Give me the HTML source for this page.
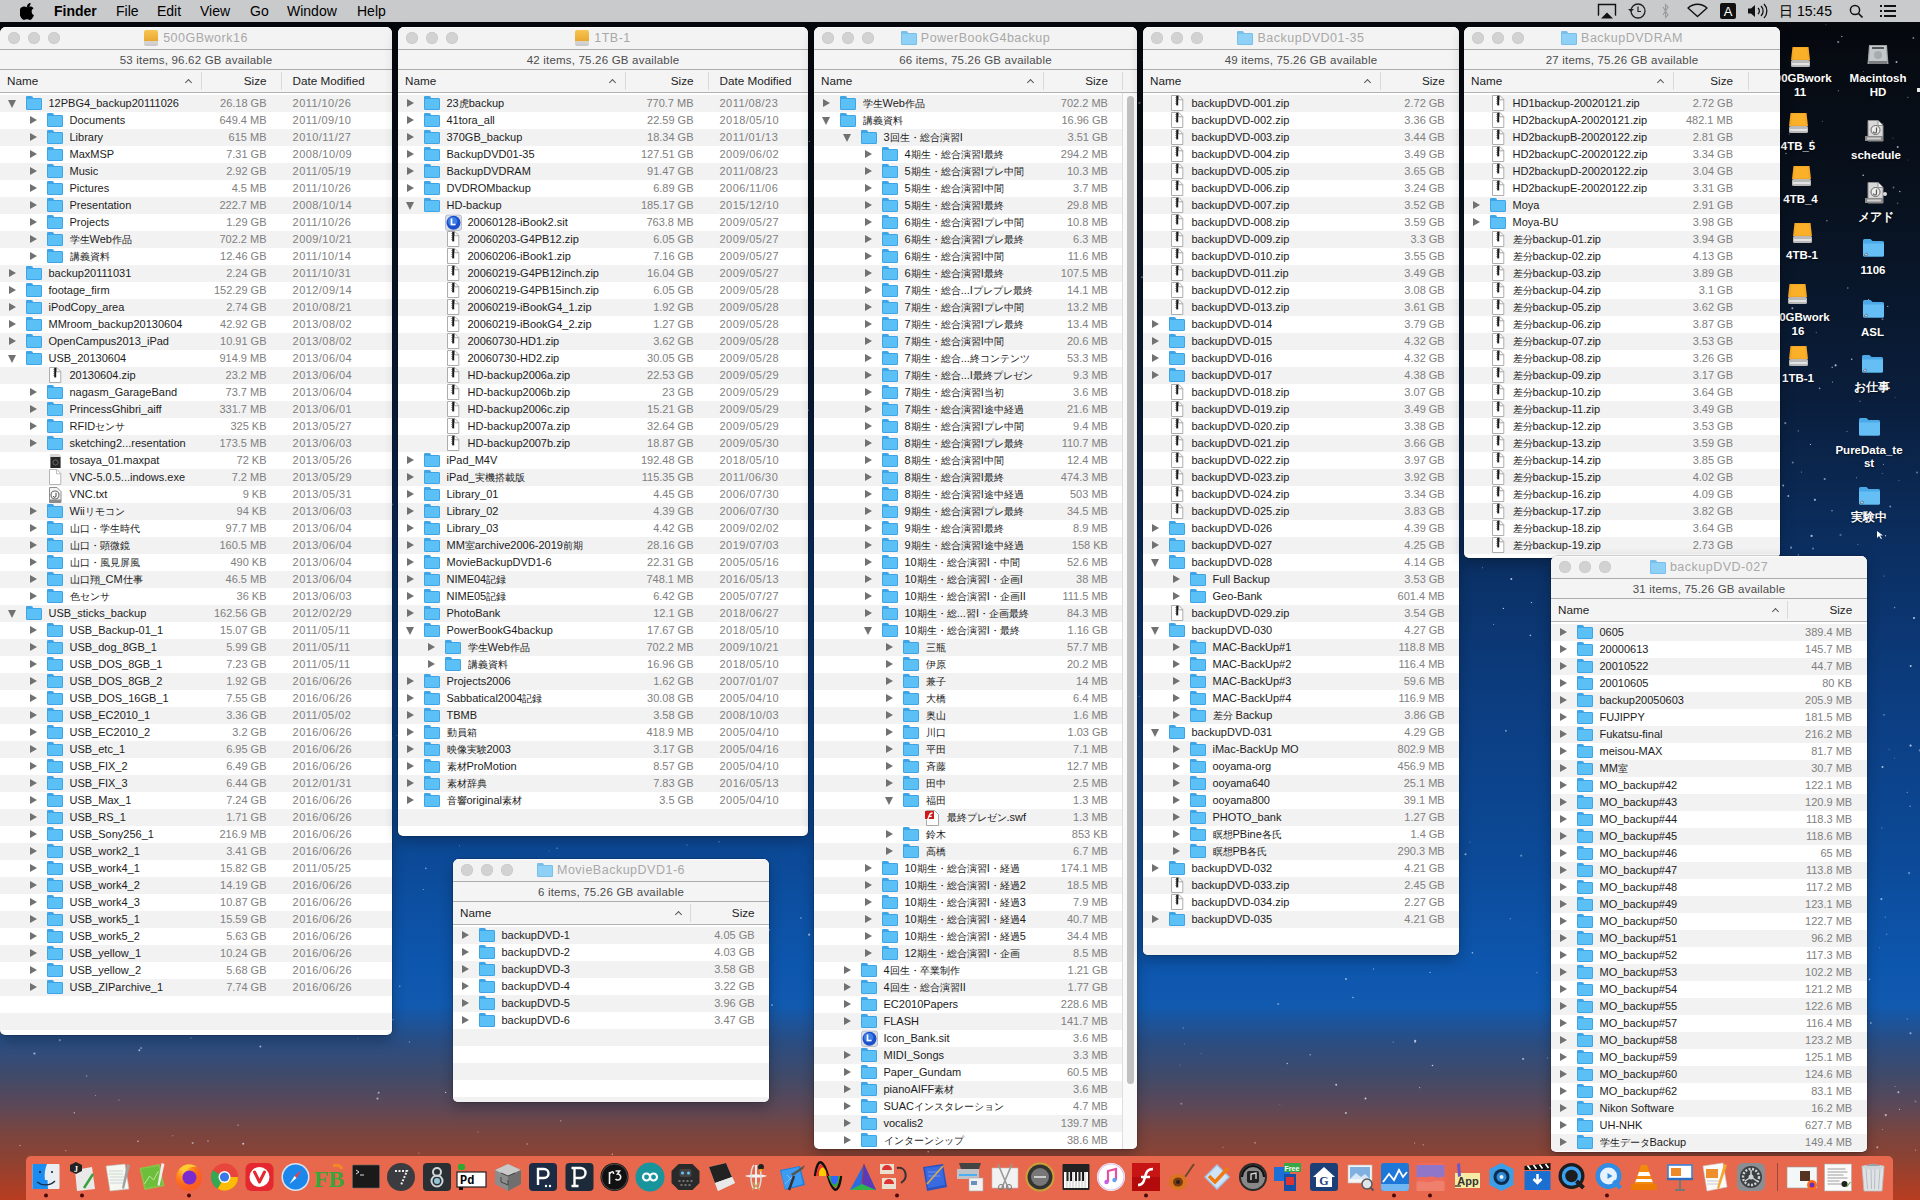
<!DOCTYPE html><html><head><meta charset="utf-8"><style>
*{margin:0;padding:0;box-sizing:border-box}
html,body{width:1920px;height:1200px;overflow:hidden}
body{position:relative;font-family:"Liberation Sans",sans-serif;
 background:linear-gradient(180deg,#03060a 0px,#070b12 60px,#08111e 200px,#0a1e3c 400px,#0b3064 560px,#0c3d80 700px,#0c4a98 860px,#0d56ad 960px,#115ab0 1005px,#2a4d82 1042px,#424a68 1078px,#5e4856 1108px,#7a453f 1133px,#8e4232 1160px,#b83c20 1200px)}
.mb{position:absolute;left:0;top:0;width:1920px;height:22px;background:#c9cacc;color:#000;font-size:14px;line-height:22px}
.mb span{position:absolute;top:0}
.win{position:absolute;background:#fff;border-radius:6px 6px 5px 5px;overflow:hidden;box-shadow:0 0 0 .5px rgba(0,0,0,.3),0 5px 14px rgba(0,0,0,.28)}
.tb{position:absolute;left:0;top:0;right:0;height:23px;background:#f3f3f3;border-bottom:1px solid #acacac;box-shadow:inset 0 1px 0 #fcfcfc}
.tl{position:absolute;top:5px;width:12px;height:12px;border-radius:50%;background:#d2d2d2;box-shadow:inset 0 0 0 .5px #c6c6c6}
.tt{position:absolute;left:0;right:0;top:0;height:22px;text-align:center;white-space:nowrap;font-size:12.5px;letter-spacing:.5px;line-height:22px;color:#a8a8a8}
.tt span{vertical-align:top}
.tfd{display:inline-block;position:relative;width:16px;height:12px;background:#8fd0f6;border:1px solid #78bfe9;border-radius:1px;margin-right:4px;vertical-align:top;margin-top:6px}
.tfd::before{content:"";position:absolute;left:-1px;top:-3px;width:7px;height:3px;background:#78bfe9;border-radius:1px 2px 0 0}
.tdrv{display:inline-block;position:relative;width:14px;height:16px;margin-right:5px;vertical-align:top;margin-top:3px;border-radius:2px;background:linear-gradient(#f6c552,#eaa830 70%,#d6d6d6 72%,#c8c8c8)}
.sl{position:absolute;left:0;right:0;top:23px;height:20px;background:#f4f4f4;border-bottom:1px solid #acacac;text-align:center;font-size:11.5px;letter-spacing:.2px;line-height:21px;color:#4c4c4c;white-space:nowrap}
.hd{position:absolute;left:0;right:0;top:43px;height:23px;background:#f4f4f4;border-bottom:1px solid #b3b3b3;font-size:11.7px;line-height:21px;color:#1e1e1e}
.hn{position:absolute;left:7px;top:0}
.hs,.hdm{position:absolute;top:0}
.dv{position:absolute;top:2px;width:1px;height:18px;background:#dadada}
.ar{position:absolute;top:7px;width:8px;height:8px}
.ar::before{content:"";position:absolute;left:1.5px;top:2.5px;width:4px;height:4px;border-left:1.6px solid #555;border-top:1.6px solid #555;transform:rotate(45deg)}
.rows{position:absolute;left:0;top:68px;overflow:hidden}
.r{position:absolute;left:0;right:0;height:17px;font-size:11px;line-height:17px;white-space:nowrap}
.g{background:#f2f2f2}
.nm{position:absolute;top:0;color:#1c1c1c}
.sz{position:absolute;top:0;color:#808080}
.dt{position:absolute;top:0;color:#808080;letter-spacing:.45px}
.tr{position:absolute;top:4px;width:0;height:0;border-left:7px solid #717171;border-top:4.5px solid transparent;border-bottom:4.5px solid transparent}
.td{position:absolute;top:5px;width:0;height:0;border-top:8px solid #717171;border-left:4.5px solid transparent;border-right:4.5px solid transparent}
.fd{position:absolute;top:3px;width:16px;height:12px;background:#5bc0f6;border:1px solid #3ea4e6;border-radius:1px}
.fd::before{content:"";position:absolute;left:-1px;top:-3px;width:7px;height:3px;background:#3ea4e6;border-radius:1px 2px 0 0}
.zp,.dc,.tx{position:absolute;top:1px;width:12px;height:15px;background:#fff;border:1px solid #a9a9a9}
.zp::before,.dc::before,.tx::before{content:"";position:absolute;right:-1px;top:-1px;width:5px;height:5px;background:linear-gradient(45deg,#fff 50%,#a9a9a9 50%,#a9a9a9 58%,transparent 58%);border-left:1px solid #a9a9a9;border-bottom:1px solid #a9a9a9}
.zp::after{content:"";position:absolute;left:4px;top:0;width:2px;height:10px;background:#2a2a2a}
.tx::after{content:"";position:absolute;left:2px;top:4px;width:7px;height:7px;border:1px solid #777;border-radius:50%}
.mx{position:absolute;top:3px;width:10px;height:12px;background:#2a2a2a;border-radius:1px}
.st{position:absolute;top:1px;width:16px;height:15px;border-radius:50%;background:radial-gradient(circle at 45% 40%,#6fa8f0,#1d4fc0 60%,#0d2f80)}
.sw{position:absolute;top:1px;width:13px;height:15px;background:#fff;border:1px solid #b0b0b0}
.sw::before{content:"";position:absolute;left:1px;top:1px;width:9px;height:8px;background:#d42020}
.sb{position:absolute;background:#fafafa;border-left:1px solid #dedede}
.th{position:absolute;left:4px;width:7px;background:#c0c0c0;border-radius:4px}
.dk{position:absolute;left:26px;top:1156px;width:1867px;height:50px;background:#e8684d;border-radius:5px 5px 0 0}
.di{position:absolute;width:28px;height:28px;top:1164px}
.dot{position:absolute;top:1194px;width:4px;height:4px;border-radius:50%;background:#5a0c0c}
.ico{position:absolute;color:#fff;font-size:11.5px;font-weight:bold;text-align:center;line-height:14px;width:90px;text-shadow:0 1px 2px rgba(0,0,0,.6)}
.ic{position:absolute}
.j{font-size:9.6px}

</style></head><body>
<svg width="0" height="0" style="position:absolute">
<defs>
<symbol id="zip" viewBox="0 0 13 17"><path d="M.5 .5h7.3l4 4V15.5H.5z" fill="#fff" stroke="#adadad"/><path d="M7.5 .5v4.3h4.3" fill="none" stroke="#9a9a9a" stroke-width=".9"/><rect x="5.2" y=".8" width="2" height="9.6" fill="#1a1a1a"/><path d="M5.2 2.5h-.7M5.2 4.5h-.7M5.2 6.5h-.7M5.2 8.5h-.7" stroke="#444" stroke-width=".8"/></symbol>
<symbol id="doc" viewBox="0 0 13 17"><path d="M.5 .5h7.3l4 4V15.5H.5z" fill="#fff" stroke="#b5b5b5"/><path d="M7.5 .5v4.3h4.3" fill="none" stroke="#b5b5b5" stroke-width=".9"/></symbol>
<symbol id="txt" viewBox="0 0 17 17"><path d="M2.5 1.5h7.5l4 4V16.5H2.5z" fill="#f4f4f4" stroke="#8e8e8e"/><circle cx="8" cy="9" r="4" fill="#fff" stroke="#666" stroke-width="1.1"/><path d="M9 6.8v3.2a1.3 1.3 0 0 1-2.6 0" fill="none" stroke="#444" stroke-width="1"/><rect x="2.5" y="13.5" width="11.5" height="3" fill="#8a8a8a"/></symbol>
<symbol id="max" viewBox="0 0 17 17"><path d="M3 2h9l2 2v12H3z" fill="#d6d6d6"/><rect x="3.5" y="5" width="10" height="11" fill="#262626"/><circle cx="8.5" cy="10.5" r="2.6" fill="none" stroke="#777" stroke-width=".8"/></symbol>
<symbol id="sit" viewBox="0 0 17 17"><rect x=".5" y="1" width="16" height="15.5" rx="2" fill="#d9dde6" stroke="#9aa3b5" stroke-width=".6"/><circle cx="8.5" cy="8.8" r="7" fill="#1d4fc8"/><circle cx="7.6" cy="7.6" r="4.6" fill="#3d7ee8"/><path d="M6.5 4.5v6h4" fill="none" stroke="#fff" stroke-width="1.7"/></symbol>
<symbol id="swf" viewBox="0 0 17 17"><path d="M2.5 1.5h8l4 4V16.5h-12z" fill="#fff" stroke="#a8a8a8"/><rect x="1" y="2" width="9" height="8" fill="#d01818"/><path d="M8.5 4c-3 0-3 2-3.6 3.8S4 11 2.5 11M4.2 7.3h3.5" fill="none" stroke="#fff" stroke-width="1.3"/></symbol>
</defs></svg>

<svg style="position:absolute;left:0;top:0" width="1920" height="1200" fill="#dfe8ff"><circle cx="868.6" cy="657.1" r="1.0" fill-opacity="0.60"/><circle cx="1774.5" cy="550.7" r="1.1" fill-opacity="0.56"/><circle cx="975.1" cy="688.3" r="0.7" fill-opacity="0.67"/><circle cx="354.5" cy="603.0" r="0.5" fill-opacity="0.39"/><circle cx="1209.4" cy="920.9" r="0.5" fill-opacity="0.54"/><circle cx="180.7" cy="367.1" r="0.6" fill-opacity="0.51"/><circle cx="174.1" cy="939.7" r="0.8" fill-opacity="0.67"/><circle cx="1331.4" cy="71.4" r="0.5" fill-opacity="0.54"/><circle cx="1885.8" cy="1115.1" r="1.1" fill-opacity="0.70"/><circle cx="1255.5" cy="720.2" r="0.5" fill-opacity="0.83"/><circle cx="302.4" cy="41.0" r="0.7" fill-opacity="0.67"/><circle cx="1014.5" cy="91.4" r="1.0" fill-opacity="0.69"/><circle cx="365.2" cy="297.6" r="1.1" fill-opacity="0.37"/><circle cx="57.8" cy="548.7" r="0.7" fill-opacity="0.68"/><circle cx="845.8" cy="976.8" r="1.1" fill-opacity="0.61"/><circle cx="996.7" cy="748.2" r="0.6" fill-opacity="0.35"/><circle cx="959.6" cy="773.2" r="0.7" fill-opacity="0.59"/><circle cx="878.1" cy="338.6" r="0.5" fill-opacity="0.39"/><circle cx="1915.5" cy="1150.1" r="0.7" fill-opacity="0.56"/><circle cx="1613.2" cy="824.5" r="0.5" fill-opacity="0.79"/><circle cx="605.3" cy="283.8" r="0.8" fill-opacity="0.41"/><circle cx="555.0" cy="103.4" r="1.1" fill-opacity="0.81"/><circle cx="1471.3" cy="476.9" r="0.8" fill-opacity="0.54"/><circle cx="1625.4" cy="461.1" r="0.8" fill-opacity="0.58"/><circle cx="1839.4" cy="982.3" r="0.8" fill-opacity="0.36"/><circle cx="1.0" cy="261.2" r="1.1" fill-opacity="0.77"/><circle cx="1747.7" cy="555.6" r="1.0" fill-opacity="0.48"/><circle cx="1882.3" cy="473.5" r="0.5" fill-opacity="0.49"/><circle cx="140.2" cy="735.9" r="0.6" fill-opacity="0.66"/><circle cx="1494.7" cy="329.1" r="0.8" fill-opacity="0.63"/><circle cx="167.3" cy="400.2" r="1.0" fill-opacity="0.68"/><circle cx="1851.0" cy="881.3" r="0.8" fill-opacity="0.62"/><circle cx="226.5" cy="302.7" r="0.8" fill-opacity="0.50"/><circle cx="194.0" cy="91.7" r="1.0" fill-opacity="0.38"/><circle cx="1530.3" cy="225.0" r="1.1" fill-opacity="0.84"/><circle cx="1073.8" cy="530.0" r="0.7" fill-opacity="0.35"/><circle cx="366.1" cy="851.8" r="0.8" fill-opacity="0.43"/><circle cx="251.5" cy="752.0" r="0.7" fill-opacity="0.49"/><circle cx="223.7" cy="499.9" r="0.8" fill-opacity="0.62"/><circle cx="408.7" cy="329.1" r="0.7" fill-opacity="0.81"/><circle cx="1864.2" cy="932.7" r="0.7" fill-opacity="0.51"/><circle cx="584.0" cy="1024.8" r="1.1" fill-opacity="0.42"/><circle cx="404.6" cy="469.9" r="1.0" fill-opacity="0.34"/><circle cx="1640.4" cy="749.9" r="0.6" fill-opacity="0.84"/><circle cx="192.6" cy="1142.9" r="1.0" fill-opacity="0.55"/><circle cx="409.4" cy="316.1" r="0.8" fill-opacity="0.36"/><circle cx="1483.6" cy="396.0" r="0.6" fill-opacity="0.71"/><circle cx="568.9" cy="107.0" r="0.5" fill-opacity="0.67"/><circle cx="173.0" cy="683.1" r="1.0" fill-opacity="0.77"/><circle cx="466.6" cy="704.1" r="0.5" fill-opacity="0.85"/><circle cx="713.7" cy="536.6" r="0.7" fill-opacity="0.61"/><circle cx="1841.5" cy="571.1" r="1.0" fill-opacity="0.57"/><circle cx="1103.2" cy="1004.0" r="0.8" fill-opacity="0.38"/><circle cx="351.0" cy="198.3" r="0.7" fill-opacity="0.74"/><circle cx="1744.2" cy="948.9" r="0.5" fill-opacity="0.44"/><circle cx="479.0" cy="238.7" r="0.6" fill-opacity="0.42"/><circle cx="1419.7" cy="1087.6" r="0.6" fill-opacity="0.77"/><circle cx="377.5" cy="1098.6" r="1.1" fill-opacity="0.64"/><circle cx="1693.8" cy="706.6" r="0.5" fill-opacity="0.39"/><circle cx="809.2" cy="141.4" r="0.6" fill-opacity="0.62"/><circle cx="74.3" cy="1112.8" r="0.7" fill-opacity="0.68"/><circle cx="457.7" cy="820.9" r="0.7" fill-opacity="0.36"/><circle cx="493.4" cy="955.6" r="1.1" fill-opacity="0.74"/><circle cx="1145.2" cy="355.9" r="1.0" fill-opacity="0.77"/><circle cx="336.8" cy="838.7" r="1.1" fill-opacity="0.84"/><circle cx="132.1" cy="282.3" r="0.5" fill-opacity="0.44"/><circle cx="1074.0" cy="988.1" r="0.5" fill-opacity="0.39"/><circle cx="1179.5" cy="340.9" r="0.7" fill-opacity="0.67"/><circle cx="1761.3" cy="254.7" r="0.7" fill-opacity="0.44"/><circle cx="31.8" cy="328.5" r="0.6" fill-opacity="0.44"/><circle cx="855.8" cy="92.4" r="0.5" fill-opacity="0.45"/><circle cx="338.4" cy="441.1" r="0.7" fill-opacity="0.74"/><circle cx="1098.6" cy="172.8" r="1.0" fill-opacity="0.38"/><circle cx="695.3" cy="1031.7" r="0.8" fill-opacity="0.39"/><circle cx="1882.5" cy="767.0" r="1.0" fill-opacity="0.77"/><circle cx="1327.1" cy="685.0" r="1.0" fill-opacity="0.35"/><circle cx="269.5" cy="63.7" r="1.1" fill-opacity="0.39"/><circle cx="34.4" cy="1053.5" r="1.1" fill-opacity="0.69"/><circle cx="1345.9" cy="1112.9" r="1.0" fill-opacity="0.73"/><circle cx="40.8" cy="743.5" r="0.7" fill-opacity="0.47"/><circle cx="925.9" cy="850.2" r="0.8" fill-opacity="0.82"/><circle cx="612.3" cy="1154.3" r="0.7" fill-opacity="0.66"/><circle cx="144.5" cy="641.6" r="1.0" fill-opacity="0.43"/><circle cx="1415.1" cy="1042.1" r="0.8" fill-opacity="0.68"/><circle cx="1415.2" cy="819.9" r="0.7" fill-opacity="0.70"/><circle cx="1523.1" cy="1058.9" r="1.1" fill-opacity="0.58"/><circle cx="675.5" cy="798.9" r="1.0" fill-opacity="0.70"/><circle cx="1729.6" cy="1009.2" r="0.6" fill-opacity="0.34"/><circle cx="800.9" cy="918.1" r="1.0" fill-opacity="0.36"/><circle cx="1657.9" cy="671.8" r="1.1" fill-opacity="0.71"/><circle cx="1199.9" cy="456.4" r="0.7" fill-opacity="0.80"/><circle cx="1118.7" cy="712.6" r="0.5" fill-opacity="0.81"/><circle cx="154.0" cy="747.2" r="0.5" fill-opacity="0.41"/><circle cx="1907.2" cy="1019.0" r="0.7" fill-opacity="0.47"/><circle cx="1398.2" cy="463.3" r="0.6" fill-opacity="0.33"/><circle cx="1411.3" cy="681.1" r="1.1" fill-opacity="0.67"/><circle cx="845.8" cy="972.2" r="0.6" fill-opacity="0.32"/><circle cx="160.9" cy="872.5" r="1.0" fill-opacity="0.38"/><circle cx="57.2" cy="704.1" r="1.1" fill-opacity="0.84"/><circle cx="923.4" cy="284.4" r="1.0" fill-opacity="0.60"/><circle cx="1340.8" cy="586.4" r="0.8" fill-opacity="0.59"/><circle cx="1179.8" cy="1065.0" r="0.6" fill-opacity="0.35"/><circle cx="491.2" cy="36.8" r="1.1" fill-opacity="0.49"/><circle cx="578.0" cy="791.0" r="0.8" fill-opacity="0.81"/><circle cx="388.9" cy="215.8" r="1.1" fill-opacity="0.36"/><circle cx="1739.0" cy="770.4" r="0.6" fill-opacity="0.57"/><circle cx="848.5" cy="1032.5" r="0.5" fill-opacity="0.68"/><circle cx="627.8" cy="777.1" r="0.5" fill-opacity="0.61"/><circle cx="381.1" cy="511.3" r="1.0" fill-opacity="0.35"/><circle cx="1547.5" cy="1058.0" r="0.7" fill-opacity="0.44"/><circle cx="1690.1" cy="458.8" r="0.6" fill-opacity="0.69"/><circle cx="1119.6" cy="381.9" r="0.6" fill-opacity="0.84"/><circle cx="261.5" cy="585.5" r="0.6" fill-opacity="0.77"/><circle cx="1607.2" cy="983.9" r="0.5" fill-opacity="0.63"/><circle cx="1365.5" cy="1098.5" r="1.0" fill-opacity="0.85"/><circle cx="531.4" cy="215.3" r="1.0" fill-opacity="0.64"/><circle cx="865.2" cy="335.2" r="1.0" fill-opacity="0.47"/><circle cx="411.0" cy="492.2" r="0.6" fill-opacity="0.35"/><circle cx="1201.4" cy="582.6" r="1.0" fill-opacity="0.39"/><circle cx="605.5" cy="973.0" r="0.5" fill-opacity="0.36"/><circle cx="1885.5" cy="535.8" r="0.7" fill-opacity="0.78"/><circle cx="143.4" cy="59.6" r="0.5" fill-opacity="0.53"/><circle cx="1675.8" cy="70.9" r="0.6" fill-opacity="0.76"/><circle cx="1360.6" cy="669.3" r="1.1" fill-opacity="0.63"/><circle cx="593.3" cy="919.2" r="1.0" fill-opacity="0.72"/><circle cx="36.7" cy="177.7" r="1.1" fill-opacity="0.74"/><circle cx="873.3" cy="52.0" r="0.5" fill-opacity="0.50"/><circle cx="1593.0" cy="292.5" r="0.6" fill-opacity="0.84"/><circle cx="270.5" cy="77.1" r="0.6" fill-opacity="0.52"/><circle cx="1208.0" cy="529.0" r="0.7" fill-opacity="0.42"/><circle cx="1209.5" cy="764.9" r="0.8" fill-opacity="0.31"/><circle cx="1550.2" cy="1108.0" r="0.6" fill-opacity="0.44"/><circle cx="1314.2" cy="249.5" r="1.0" fill-opacity="0.50"/><circle cx="912.3" cy="226.1" r="1.1" fill-opacity="0.48"/><circle cx="20.7" cy="558.1" r="1.1" fill-opacity="0.49"/><circle cx="1371.2" cy="226.6" r="1.1" fill-opacity="0.43"/><circle cx="522.9" cy="415.0" r="0.8" fill-opacity="0.40"/><circle cx="1338.8" cy="612.6" r="0.6" fill-opacity="0.42"/><circle cx="1179.7" cy="879.3" r="0.8" fill-opacity="0.56"/><circle cx="755.6" cy="919.7" r="0.7" fill-opacity="0.40"/><circle cx="1740.0" cy="122.6" r="1.1" fill-opacity="0.66"/><circle cx="1790.6" cy="841.0" r="0.7" fill-opacity="0.63"/><circle cx="249.4" cy="536.9" r="1.0" fill-opacity="0.44"/><circle cx="1201.1" cy="1053.2" r="0.5" fill-opacity="0.40"/><circle cx="723.5" cy="667.3" r="0.6" fill-opacity="0.34"/><circle cx="1688.3" cy="925.1" r="1.0" fill-opacity="0.48"/><circle cx="1813.0" cy="548.5" r="1.1" fill-opacity="0.41"/><circle cx="1250.5" cy="255.7" r="0.5" fill-opacity="0.73"/><circle cx="1386.1" cy="949.5" r="1.0" fill-opacity="0.35"/><circle cx="1231.9" cy="835.7" r="1.1" fill-opacity="0.72"/><circle cx="409.5" cy="1041.9" r="0.6" fill-opacity="0.54"/><circle cx="1882.5" cy="1129.4" r="0.5" fill-opacity="0.53"/><circle cx="1031.0" cy="918.4" r="0.6" fill-opacity="0.50"/><circle cx="615.2" cy="1053.2" r="0.7" fill-opacity="0.34"/><circle cx="1643.1" cy="418.2" r="0.5" fill-opacity="0.84"/><circle cx="158.9" cy="522.7" r="0.8" fill-opacity="0.85"/><circle cx="1056.6" cy="892.9" r="0.8" fill-opacity="0.73"/><circle cx="935.9" cy="56.1" r="0.6" fill-opacity="0.49"/><circle cx="1553.5" cy="96.4" r="0.6" fill-opacity="0.51"/><circle cx="1535.7" cy="219.5" r="0.7" fill-opacity="0.61"/><circle cx="643.2" cy="915.1" r="1.1" fill-opacity="0.34"/><circle cx="269.8" cy="192.2" r="0.5" fill-opacity="0.33"/><circle cx="991.7" cy="842.4" r="0.5" fill-opacity="0.51"/><circle cx="1612.8" cy="803.7" r="0.5" fill-opacity="0.53"/><circle cx="1815.8" cy="581.1" r="0.6" fill-opacity="0.38"/><circle cx="1822.4" cy="121.3" r="0.6" fill-opacity="0.39"/><circle cx="425.1" cy="619.7" r="0.8" fill-opacity="0.83"/><circle cx="557.1" cy="848.3" r="0.7" fill-opacity="0.49"/><circle cx="1226.6" cy="615.3" r="0.6" fill-opacity="0.38"/><circle cx="1619.8" cy="657.3" r="1.1" fill-opacity="0.48"/><circle cx="598.5" cy="455.2" r="0.5" fill-opacity="0.41"/><circle cx="1622.9" cy="1042.5" r="0.6" fill-opacity="0.69"/><circle cx="399.8" cy="986.2" r="0.6" fill-opacity="0.79"/><circle cx="1859.4" cy="616.9" r="1.1" fill-opacity="0.79"/><circle cx="1100.1" cy="251.3" r="1.1" fill-opacity="0.55"/><circle cx="1028.9" cy="593.1" r="0.7" fill-opacity="0.70"/><circle cx="1162.0" cy="55.4" r="0.7" fill-opacity="0.38"/><circle cx="1861.3" cy="607.6" r="0.5" fill-opacity="0.84"/><circle cx="769.1" cy="930.0" r="1.1" fill-opacity="0.49"/><circle cx="1080.7" cy="579.4" r="0.5" fill-opacity="0.37"/><circle cx="1326.7" cy="98.5" r="0.7" fill-opacity="0.40"/><circle cx="1034.3" cy="492.0" r="0.5" fill-opacity="0.45"/><circle cx="1837.2" cy="1068.4" r="1.0" fill-opacity="0.60"/><circle cx="516.9" cy="559.1" r="1.0" fill-opacity="0.54"/><circle cx="243.8" cy="514.5" r="1.0" fill-opacity="0.44"/><circle cx="1566.2" cy="1042.5" r="0.5" fill-opacity="0.34"/><circle cx="914.9" cy="382.8" r="0.6" fill-opacity="0.31"/><circle cx="367.6" cy="722.8" r="0.7" fill-opacity="0.84"/><circle cx="1776.5" cy="170.4" r="1.1" fill-opacity="0.58"/><circle cx="1496.2" cy="49.8" r="0.6" fill-opacity="0.83"/><circle cx="372.7" cy="281.0" r="1.1" fill-opacity="0.61"/><circle cx="1319.1" cy="388.3" r="0.7" fill-opacity="0.57"/><circle cx="682.3" cy="725.0" r="1.0" fill-opacity="0.55"/><circle cx="201.4" cy="850.6" r="1.0" fill-opacity="0.85"/><circle cx="235.7" cy="601.3" r="0.8" fill-opacity="0.56"/><circle cx="481.1" cy="247.6" r="0.6" fill-opacity="0.38"/><circle cx="1018.3" cy="518.0" r="0.8" fill-opacity="0.84"/><circle cx="721.4" cy="491.6" r="0.5" fill-opacity="0.54"/><circle cx="1016.3" cy="204.7" r="1.0" fill-opacity="0.52"/><circle cx="392.2" cy="738.0" r="0.5" fill-opacity="0.45"/><circle cx="1225.9" cy="623.0" r="0.5" fill-opacity="0.40"/><circle cx="1634.4" cy="715.8" r="1.1" fill-opacity="0.75"/><circle cx="1645.0" cy="287.1" r="0.5" fill-opacity="0.31"/><circle cx="1422.3" cy="940.7" r="0.8" fill-opacity="0.74"/><circle cx="1733.1" cy="381.3" r="0.8" fill-opacity="0.64"/><circle cx="604.8" cy="1067.6" r="0.5" fill-opacity="0.56"/><circle cx="418.8" cy="1153.1" r="0.6" fill-opacity="0.49"/><circle cx="1704.1" cy="175.5" r="0.6" fill-opacity="0.47"/><circle cx="459.5" cy="845.8" r="0.5" fill-opacity="0.49"/><circle cx="498.2" cy="133.7" r="1.0" fill-opacity="0.61"/><circle cx="1597.8" cy="500.9" r="1.1" fill-opacity="0.56"/><circle cx="1516.7" cy="166.5" r="1.0" fill-opacity="0.71"/><circle cx="773.3" cy="799.0" r="0.6" fill-opacity="0.50"/><circle cx="34.1" cy="251.3" r="1.0" fill-opacity="0.62"/><circle cx="1310.2" cy="1054.8" r="0.8" fill-opacity="0.54"/><circle cx="1859.3" cy="154.5" r="1.0" fill-opacity="0.55"/><circle cx="970.9" cy="881.5" r="0.7" fill-opacity="0.82"/><circle cx="965.3" cy="799.5" r="0.8" fill-opacity="0.43"/><circle cx="362.9" cy="103.8" r="1.0" fill-opacity="0.77"/><circle cx="203.9" cy="66.3" r="1.1" fill-opacity="0.39"/><circle cx="1059.2" cy="606.3" r="1.0" fill-opacity="0.61"/><circle cx="1092.0" cy="189.8" r="0.7" fill-opacity="0.72"/><circle cx="354.3" cy="254.6" r="1.1" fill-opacity="0.47"/><circle cx="1613.2" cy="1144.0" r="1.0" fill-opacity="0.62"/><circle cx="1779.6" cy="131.7" r="0.6" fill-opacity="0.69"/><circle cx="118.9" cy="1100.1" r="0.7" fill-opacity="0.46"/><circle cx="887.2" cy="888.9" r="0.5" fill-opacity="0.65"/><circle cx="627.5" cy="552.1" r="0.5" fill-opacity="0.49"/><circle cx="989.4" cy="510.4" r="1.0" fill-opacity="0.36"/><circle cx="1153.8" cy="39.0" r="1.1" fill-opacity="0.81"/><circle cx="1346.0" cy="978.9" r="1.0" fill-opacity="0.66"/><circle cx="348.0" cy="537.4" r="1.1" fill-opacity="0.30"/><circle cx="1419.5" cy="482.4" r="0.8" fill-opacity="0.52"/><circle cx="374.6" cy="210.7" r="0.8" fill-opacity="0.62"/><circle cx="984.1" cy="41.4" r="1.1" fill-opacity="0.61"/><circle cx="1714.9" cy="930.7" r="0.5" fill-opacity="0.35"/><circle cx="1353.0" cy="997.5" r="0.8" fill-opacity="0.65"/><circle cx="1208.4" cy="481.5" r="0.5" fill-opacity="0.65"/><circle cx="1151.2" cy="594.4" r="0.5" fill-opacity="0.45"/><circle cx="1886.7" cy="934.3" r="0.8" fill-opacity="0.33"/><circle cx="495.9" cy="1054.7" r="0.7" fill-opacity="0.74"/><circle cx="1429.3" cy="903.9" r="0.6" fill-opacity="0.62"/><circle cx="1564.1" cy="482.8" r="0.8" fill-opacity="0.74"/><circle cx="1721.4" cy="1019.1" r="0.7" fill-opacity="0.41"/><circle cx="1334.0" cy="891.8" r="1.1" fill-opacity="0.58"/><circle cx="1469.2" cy="482.9" r="0.8" fill-opacity="0.49"/><circle cx="1387.5" cy="103.8" r="0.5" fill-opacity="0.82"/><circle cx="656.1" cy="554.3" r="0.8" fill-opacity="0.77"/><circle cx="20.3" cy="426.2" r="0.6" fill-opacity="0.46"/><circle cx="1226.3" cy="729.8" r="1.1" fill-opacity="0.58"/><circle cx="445.6" cy="1092.4" r="0.7" fill-opacity="0.81"/><circle cx="1278.9" cy="406.1" r="1.1" fill-opacity="0.42"/><circle cx="1266.7" cy="668.2" r="0.8" fill-opacity="0.74"/><circle cx="1023.5" cy="464.6" r="1.1" fill-opacity="0.80"/><circle cx="1919.8" cy="750.4" r="1.1" fill-opacity="0.44"/><circle cx="1346.4" cy="885.5" r="1.1" fill-opacity="0.69"/><circle cx="1881.8" cy="49.8" r="0.7" fill-opacity="0.74"/><circle cx="1181.6" cy="859.6" r="0.6" fill-opacity="0.36"/><circle cx="492.7" cy="478.2" r="0.8" fill-opacity="0.47"/><circle cx="96.9" cy="245.0" r="0.6" fill-opacity="0.32"/><circle cx="721.3" cy="135.3" r="0.5" fill-opacity="0.83"/><circle cx="481.7" cy="1048.3" r="1.1" fill-opacity="0.49"/><circle cx="1056.1" cy="598.3" r="1.1" fill-opacity="0.64"/><circle cx="1856.9" cy="666.4" r="0.8" fill-opacity="0.81"/><circle cx="1910.6" cy="745.6" r="1.1" fill-opacity="0.78"/><circle cx="1554.3" cy="110.2" r="1.1" fill-opacity="0.39"/><circle cx="1147.3" cy="882.7" r="0.7" fill-opacity="0.84"/><circle cx="86.6" cy="1076.0" r="0.8" fill-opacity="0.47"/><circle cx="307.1" cy="557.6" r="0.6" fill-opacity="0.64"/><circle cx="324.7" cy="584.4" r="0.7" fill-opacity="0.84"/><circle cx="1173.4" cy="90.2" r="1.0" fill-opacity="0.66"/><circle cx="1814.9" cy="499.8" r="1.1" fill-opacity="0.70"/><circle cx="1011.4" cy="700.1" r="0.5" fill-opacity="0.54"/><circle cx="701.9" cy="347.2" r="0.8" fill-opacity="0.72"/><circle cx="1257.8" cy="658.1" r="0.5" fill-opacity="0.61"/><circle cx="544.4" cy="834.5" r="0.8" fill-opacity="0.65"/><circle cx="568.4" cy="39.8" r="0.8" fill-opacity="0.42"/><circle cx="470.4" cy="72.4" r="1.1" fill-opacity="0.49"/><circle cx="300.6" cy="877.5" r="0.5" fill-opacity="0.79"/><circle cx="748.7" cy="1039.1" r="0.8" fill-opacity="0.74"/><circle cx="1436.9" cy="80.7" r="0.6" fill-opacity="0.43"/><circle cx="1898.4" cy="1092.2" r="1.0" fill-opacity="0.73"/><circle cx="141.1" cy="1048.2" r="1.1" fill-opacity="0.38"/><circle cx="824.7" cy="564.2" r="0.8" fill-opacity="0.47"/><circle cx="1868.5" cy="299.6" r="0.7" fill-opacity="0.68"/><circle cx="1004.9" cy="1084.1" r="0.5" fill-opacity="0.66"/><circle cx="1387.7" cy="553.7" r="1.1" fill-opacity="0.72"/><circle cx="1879.3" cy="947.7" r="0.5" fill-opacity="0.48"/><circle cx="1159.0" cy="154.2" r="0.5" fill-opacity="0.80"/><circle cx="1198.6" cy="539.4" r="0.7" fill-opacity="0.59"/><circle cx="391.0" cy="82.9" r="1.0" fill-opacity="0.64"/><circle cx="1014.0" cy="164.6" r="0.8" fill-opacity="0.73"/><circle cx="850.3" cy="779.4" r="0.7" fill-opacity="0.36"/><circle cx="874.7" cy="320.5" r="0.6" fill-opacity="0.59"/><circle cx="1117.9" cy="498.5" r="0.8" fill-opacity="0.34"/><circle cx="1493.7" cy="624.3" r="0.5" fill-opacity="0.77"/><circle cx="1915.5" cy="1101.4" r="1.0" fill-opacity="0.33"/><circle cx="1409.8" cy="293.6" r="1.1" fill-opacity="0.59"/><circle cx="218.6" cy="1033.6" r="0.7" fill-opacity="0.41"/><circle cx="1505.9" cy="730.8" r="1.0" fill-opacity="0.50"/><circle cx="689.6" cy="331.1" r="0.8" fill-opacity="0.48"/><circle cx="1315.3" cy="662.9" r="0.5" fill-opacity="0.49"/><circle cx="1136.0" cy="740.0" r="0.7" fill-opacity="0.46"/><circle cx="1446.4" cy="238.7" r="1.1" fill-opacity="0.59"/><circle cx="478.0" cy="1132.1" r="0.6" fill-opacity="0.52"/><circle cx="1758.2" cy="1017.9" r="0.6" fill-opacity="0.73"/><circle cx="75.9" cy="92.7" r="0.5" fill-opacity="0.37"/><circle cx="520.2" cy="504.9" r="0.8" fill-opacity="0.56"/><circle cx="1196.8" cy="139.9" r="0.8" fill-opacity="0.72"/><circle cx="1040.0" cy="106.0" r="1.0" fill-opacity="0.74"/><circle cx="166.0" cy="788.9" r="1.0" fill-opacity="0.80"/><circle cx="1057.2" cy="737.8" r="0.7" fill-opacity="0.62"/><circle cx="716.5" cy="565.2" r="0.8" fill-opacity="0.85"/><circle cx="404.4" cy="412.7" r="1.0" fill-opacity="0.35"/><circle cx="1430.1" cy="972.4" r="0.6" fill-opacity="0.72"/><circle cx="142.7" cy="159.5" r="0.5" fill-opacity="0.64"/><circle cx="1553.6" cy="729.4" r="0.6" fill-opacity="0.60"/><circle cx="1476.0" cy="265.1" r="0.7" fill-opacity="0.73"/><circle cx="814.8" cy="315.9" r="1.0" fill-opacity="0.70"/><circle cx="1555.0" cy="441.3" r="0.7" fill-opacity="0.45"/><circle cx="1255.0" cy="1142.8" r="1.1" fill-opacity="0.32"/><circle cx="624.7" cy="644.5" r="0.5" fill-opacity="0.55"/><circle cx="1432.5" cy="1065.5" r="0.8" fill-opacity="0.84"/><circle cx="821.1" cy="441.6" r="0.8" fill-opacity="0.41"/><circle cx="186.3" cy="1013.8" r="0.7" fill-opacity="0.79"/><circle cx="150.7" cy="117.9" r="0.5" fill-opacity="0.60"/><circle cx="1083.3" cy="572.4" r="0.5" fill-opacity="0.45"/><circle cx="1315.8" cy="362.0" r="1.1" fill-opacity="0.64"/><circle cx="1489.0" cy="110.0" r="0.6" fill-opacity="0.85"/><circle cx="409.5" cy="772.8" r="0.8" fill-opacity="0.62"/><circle cx="156.9" cy="367.6" r="1.1" fill-opacity="0.43"/><circle cx="1392.0" cy="808.9" r="1.1" fill-opacity="0.43"/><circle cx="543.2" cy="185.6" r="1.0" fill-opacity="0.52"/><circle cx="687.0" cy="845.1" r="0.5" fill-opacity="0.69"/><circle cx="703.5" cy="156.8" r="0.6" fill-opacity="0.43"/><circle cx="1361.8" cy="667.8" r="1.0" fill-opacity="0.56"/><circle cx="1763.6" cy="1087.1" r="0.5" fill-opacity="0.51"/><circle cx="1753.7" cy="519.4" r="1.1" fill-opacity="0.52"/><circle cx="1541.9" cy="368.7" r="0.8" fill-opacity="0.64"/><circle cx="609.8" cy="475.9" r="0.6" fill-opacity="0.82"/><circle cx="1794.6" cy="1035.9" r="1.1" fill-opacity="0.57"/><circle cx="476.7" cy="433.1" r="1.0" fill-opacity="0.78"/><circle cx="701.9" cy="434.9" r="1.1" fill-opacity="0.37"/><circle cx="759.6" cy="462.4" r="0.7" fill-opacity="0.31"/><circle cx="374.3" cy="661.7" r="1.1" fill-opacity="0.58"/><circle cx="1530.4" cy="635.4" r="0.8" fill-opacity="0.71"/><circle cx="1605.8" cy="660.5" r="0.6" fill-opacity="0.44"/><circle cx="339.1" cy="882.4" r="0.5" fill-opacity="0.69"/><circle cx="1691.3" cy="342.3" r="0.8" fill-opacity="0.41"/><circle cx="42.7" cy="607.2" r="1.1" fill-opacity="0.54"/><circle cx="1044.8" cy="665.8" r="0.8" fill-opacity="0.54"/><circle cx="1855.5" cy="760.5" r="0.6" fill-opacity="0.64"/><circle cx="1544.3" cy="96.4" r="0.8" fill-opacity="0.78"/><circle cx="1049.9" cy="915.3" r="1.0" fill-opacity="0.73"/><circle cx="161.4" cy="116.4" r="0.8" fill-opacity="0.70"/><circle cx="1415.2" cy="1040.9" r="1.1" fill-opacity="0.78"/><circle cx="162.6" cy="741.2" r="0.8" fill-opacity="0.66"/><circle cx="276.2" cy="867.5" r="1.1" fill-opacity="0.79"/><circle cx="1246.1" cy="301.6" r="0.8" fill-opacity="0.79"/><circle cx="423.3" cy="889.6" r="0.5" fill-opacity="0.71"/><circle cx="1001.4" cy="888.9" r="0.7" fill-opacity="0.43"/><circle cx="757.2" cy="406.1" r="1.0" fill-opacity="0.82"/><circle cx="1859.1" cy="784.5" r="1.1" fill-opacity="0.85"/><circle cx="947.8" cy="631.7" r="0.8" fill-opacity="0.54"/><circle cx="1384.2" cy="824.9" r="1.1" fill-opacity="0.46"/><circle cx="1756.8" cy="488.4" r="1.0" fill-opacity="0.72"/><circle cx="1586.4" cy="778.1" r="1.0" fill-opacity="0.62"/><circle cx="1638.7" cy="935.5" r="1.1" fill-opacity="0.49"/><circle cx="1600.9" cy="1029.1" r="1.1" fill-opacity="0.52"/><circle cx="1839.0" cy="748.1" r="0.8" fill-opacity="0.49"/><circle cx="1005.8" cy="827.1" r="0.8" fill-opacity="0.44"/><circle cx="1540.3" cy="500.8" r="1.0" fill-opacity="0.51"/><circle cx="807.3" cy="189.3" r="0.8" fill-opacity="0.46"/><circle cx="1423.2" cy="1144.8" r="0.6" fill-opacity="0.71"/><circle cx="721.0" cy="213.6" r="0.8" fill-opacity="0.33"/><circle cx="392.4" cy="504.6" r="1.0" fill-opacity="0.33"/><circle cx="560.7" cy="1120.8" r="0.6" fill-opacity="0.76"/><circle cx="113.7" cy="372.9" r="0.8" fill-opacity="0.34"/><circle cx="220.4" cy="756.9" r="1.1" fill-opacity="0.69"/><circle cx="1489.8" cy="226.9" r="0.7" fill-opacity="0.71"/><circle cx="119.7" cy="542.9" r="1.0" fill-opacity="0.56"/><circle cx="1121.4" cy="1052.4" r="0.7" fill-opacity="0.69"/><circle cx="69.8" cy="146.9" r="1.0" fill-opacity="0.52"/><circle cx="354.3" cy="269.8" r="0.6" fill-opacity="0.84"/><circle cx="452.0" cy="835.2" r="0.6" fill-opacity="0.71"/><circle cx="1142.0" cy="277.3" r="1.0" fill-opacity="0.48"/><circle cx="355.2" cy="341.9" r="1.1" fill-opacity="0.58"/><circle cx="331.2" cy="880.7" r="0.5" fill-opacity="0.45"/><circle cx="598.5" cy="644.1" r="1.0" fill-opacity="0.49"/><circle cx="1568.9" cy="566.3" r="0.8" fill-opacity="0.48"/><circle cx="500.1" cy="1027.7" r="1.1" fill-opacity="0.74"/><circle cx="1755.4" cy="410.9" r="0.8" fill-opacity="0.66"/><circle cx="1050.9" cy="1106.4" r="0.7" fill-opacity="0.80"/><circle cx="926.6" cy="274.0" r="0.8" fill-opacity="0.67"/><circle cx="95.4" cy="1095.6" r="0.5" fill-opacity="0.63"/><circle cx="1538.7" cy="459.4" r="0.8" fill-opacity="0.55"/><circle cx="1013.0" cy="607.4" r="1.0" fill-opacity="0.85"/><circle cx="527.1" cy="1144.0" r="1.0" fill-opacity="0.31"/><circle cx="1262.5" cy="292.7" r="0.7" fill-opacity="0.49"/><circle cx="20.9" cy="558.6" r="0.5" fill-opacity="0.34"/><circle cx="713.4" cy="925.2" r="0.7" fill-opacity="0.60"/><circle cx="1369.5" cy="709.5" r="0.6" fill-opacity="0.68"/><circle cx="302.0" cy="201.5" r="0.6" fill-opacity="0.51"/><circle cx="617.9" cy="317.4" r="0.7" fill-opacity="0.38"/><circle cx="1669.0" cy="607.7" r="1.0" fill-opacity="0.60"/><circle cx="1223.0" cy="1147.2" r="0.5" fill-opacity="0.60"/><circle cx="511.7" cy="628.6" r="0.8" fill-opacity="0.66"/><circle cx="289.3" cy="895.3" r="0.6" fill-opacity="0.73"/><circle cx="2.6" cy="953.0" r="1.1" fill-opacity="0.78"/><circle cx="1624.7" cy="953.8" r="1.0" fill-opacity="0.44"/><circle cx="158.3" cy="329.3" r="0.6" fill-opacity="0.31"/><circle cx="1375.7" cy="133.9" r="0.5" fill-opacity="0.65"/><circle cx="921.8" cy="554.1" r="0.5" fill-opacity="0.71"/><circle cx="1834.5" cy="687.5" r="0.7" fill-opacity="0.31"/><circle cx="1646.1" cy="367.4" r="0.5" fill-opacity="0.68"/><circle cx="1515.5" cy="495.6" r="0.5" fill-opacity="0.67"/><circle cx="1760.2" cy="126.9" r="0.7" fill-opacity="0.77"/><circle cx="1586.5" cy="259.7" r="0.6" fill-opacity="0.64"/><circle cx="1043.3" cy="618.5" r="0.7" fill-opacity="0.68"/><circle cx="302.5" cy="965.0" r="0.7" fill-opacity="0.75"/><circle cx="597.9" cy="375.5" r="0.6" fill-opacity="0.77"/><circle cx="146.0" cy="369.7" r="1.1" fill-opacity="0.47"/><circle cx="897.1" cy="832.8" r="0.8" fill-opacity="0.80"/><circle cx="690.6" cy="801.1" r="1.0" fill-opacity="0.45"/><circle cx="203.0" cy="469.9" r="1.0" fill-opacity="0.84"/><circle cx="886.6" cy="1117.6" r="0.6" fill-opacity="0.60"/><circle cx="1593.1" cy="763.6" r="1.0" fill-opacity="0.64"/><circle cx="23.7" cy="450.5" r="0.6" fill-opacity="0.66"/><circle cx="1363.2" cy="292.6" r="0.7" fill-opacity="0.73"/><circle cx="1083.1" cy="542.1" r="0.8" fill-opacity="0.40"/><circle cx="20.1" cy="1145.5" r="0.6" fill-opacity="0.80"/><circle cx="1534.9" cy="257.8" r="1.1" fill-opacity="0.72"/><circle cx="1182.8" cy="352.4" r="0.8" fill-opacity="0.50"/><circle cx="721.9" cy="634.5" r="1.1" fill-opacity="0.49"/><circle cx="572.6" cy="405.6" r="0.7" fill-opacity="0.78"/><circle cx="753.0" cy="778.0" r="0.6" fill-opacity="0.56"/><circle cx="492.4" cy="250.1" r="0.5" fill-opacity="0.43"/><circle cx="1404.4" cy="396.5" r="1.1" fill-opacity="0.67"/><circle cx="1814.5" cy="660.5" r="1.1" fill-opacity="0.71"/><circle cx="1389.7" cy="399.1" r="1.1" fill-opacity="0.60"/><circle cx="1587.6" cy="128.4" r="1.0" fill-opacity="0.31"/><circle cx="270.4" cy="130.8" r="0.7" fill-opacity="0.32"/><circle cx="1301.2" cy="825.1" r="0.7" fill-opacity="0.72"/><circle cx="345.4" cy="479.0" r="0.8" fill-opacity="0.63"/><circle cx="1606.9" cy="694.4" r="0.8" fill-opacity="0.33"/><circle cx="173.0" cy="280.3" r="0.5" fill-opacity="0.53"/><circle cx="301.6" cy="164.4" r="1.1" fill-opacity="0.64"/><circle cx="781.1" cy="106.2" r="1.0" fill-opacity="0.45"/><circle cx="1767.6" cy="507.0" r="1.1" fill-opacity="0.38"/><circle cx="982.2" cy="756.0" r="1.1" fill-opacity="0.48"/><circle cx="1472.4" cy="952.7" r="0.8" fill-opacity="0.73"/><circle cx="741.0" cy="398.8" r="0.6" fill-opacity="0.61"/><circle cx="791.3" cy="41.4" r="0.7" fill-opacity="0.44"/><circle cx="769.4" cy="815.6" r="0.5" fill-opacity="0.44"/><circle cx="1885.3" cy="917.1" r="0.7" fill-opacity="0.46"/><circle cx="1267.6" cy="712.3" r="0.5" fill-opacity="0.31"/><circle cx="35.6" cy="398.4" r="0.7" fill-opacity="0.53"/><circle cx="657.1" cy="760.0" r="0.6" fill-opacity="0.45"/><circle cx="204.1" cy="451.1" r="0.5" fill-opacity="0.39"/><circle cx="978.0" cy="915.9" r="0.5" fill-opacity="0.56"/><circle cx="1584.4" cy="715.5" r="1.0" fill-opacity="0.40"/><circle cx="304.0" cy="890.9" r="1.0" fill-opacity="0.79"/><circle cx="1733.8" cy="644.1" r="1.0" fill-opacity="0.74"/><circle cx="676.9" cy="590.0" r="0.8" fill-opacity="0.68"/><circle cx="272.2" cy="830.9" r="1.0" fill-opacity="0.43"/><circle cx="1894.6" cy="607.6" r="0.8" fill-opacity="0.50"/><circle cx="1373.5" cy="969.0" r="0.7" fill-opacity="0.56"/><circle cx="378.6" cy="1092.7" r="1.0" fill-opacity="0.62"/><circle cx="1204.1" cy="247.8" r="0.6" fill-opacity="0.46"/><circle cx="159.8" cy="300.6" r="0.7" fill-opacity="0.47"/><circle cx="1106.9" cy="812.4" r="0.5" fill-opacity="0.66"/><circle cx="632.0" cy="1074.8" r="0.5" fill-opacity="0.64"/><circle cx="693.5" cy="547.7" r="0.7" fill-opacity="0.59"/><circle cx="238.1" cy="1125.1" r="0.7" fill-opacity="0.78"/><circle cx="260.4" cy="1046.5" r="1.0" fill-opacity="0.68"/><circle cx="1043.4" cy="658.2" r="1.1" fill-opacity="0.50"/><circle cx="1075.9" cy="323.0" r="0.8" fill-opacity="0.35"/><circle cx="1745.9" cy="1146.1" r="1.0" fill-opacity="0.60"/><circle cx="1569.6" cy="704.3" r="1.0" fill-opacity="0.85"/><circle cx="235.5" cy="956.7" r="0.6" fill-opacity="0.34"/><circle cx="554.1" cy="1038.5" r="0.6" fill-opacity="0.59"/><circle cx="462.5" cy="672.7" r="0.7" fill-opacity="0.60"/><circle cx="1595.0" cy="233.9" r="1.0" fill-opacity="0.61"/><circle cx="1051.9" cy="110.3" r="0.5" fill-opacity="0.77"/><circle cx="61.5" cy="227.7" r="1.0" fill-opacity="0.50"/><circle cx="1895.1" cy="1086.5" r="0.5" fill-opacity="0.59"/><circle cx="1264.1" cy="372.0" r="0.5" fill-opacity="0.31"/><circle cx="1288.8" cy="858.3" r="0.6" fill-opacity="0.74"/><circle cx="732.8" cy="693.4" r="1.1" fill-opacity="0.65"/><circle cx="1543.3" cy="42.5" r="0.5" fill-opacity="0.55"/><circle cx="383.1" cy="553.3" r="0.8" fill-opacity="0.63"/><circle cx="274.5" cy="461.0" r="1.0" fill-opacity="0.63"/><circle cx="1093.5" cy="220.4" r="1.0" fill-opacity="0.69"/><circle cx="998.0" cy="322.2" r="0.5" fill-opacity="0.56"/><circle cx="1090.6" cy="399.6" r="0.6" fill-opacity="0.67"/><circle cx="1232.1" cy="66.8" r="0.6" fill-opacity="0.81"/><circle cx="1288.3" cy="187.7" r="1.1" fill-opacity="0.60"/><circle cx="1841.9" cy="702.7" r="0.7" fill-opacity="0.84"/><circle cx="902.2" cy="489.3" r="1.1" fill-opacity="0.64"/><circle cx="1197.7" cy="803.6" r="0.5" fill-opacity="0.42"/><circle cx="1455.4" cy="874.2" r="1.1" fill-opacity="0.81"/><circle cx="932.7" cy="1148.9" r="1.0" fill-opacity="0.34"/><circle cx="1609.4" cy="991.1" r="0.7" fill-opacity="0.48"/><circle cx="785.3" cy="514.8" r="1.0" fill-opacity="0.59"/><circle cx="1086.7" cy="1047.8" r="1.1" fill-opacity="0.40"/><circle cx="1009.9" cy="617.8" r="0.6" fill-opacity="0.75"/><circle cx="829.9" cy="1046.7" r="1.1" fill-opacity="0.42"/><circle cx="615.7" cy="85.8" r="0.6" fill-opacity="0.33"/><circle cx="1393.1" cy="1042.1" r="0.5" fill-opacity="0.70"/><circle cx="1405.5" cy="699.8" r="1.1" fill-opacity="0.38"/><circle cx="1443.6" cy="368.7" r="0.6" fill-opacity="0.65"/><circle cx="1139.4" cy="102.9" r="1.1" fill-opacity="0.39"/><circle cx="238.9" cy="529.5" r="0.8" fill-opacity="0.65"/><circle cx="965.1" cy="472.7" r="0.7" fill-opacity="0.74"/><circle cx="99.8" cy="809.9" r="1.1" fill-opacity="0.40"/><circle cx="1010.3" cy="294.5" r="1.1" fill-opacity="0.36"/><circle cx="588.1" cy="471.3" r="0.5" fill-opacity="0.81"/><circle cx="452.9" cy="101.4" r="0.5" fill-opacity="0.78"/><circle cx="1749.7" cy="1117.1" r="0.7" fill-opacity="0.51"/><circle cx="1278.2" cy="1004.0" r="1.1" fill-opacity="0.44"/><circle cx="809.1" cy="934.7" r="1.1" fill-opacity="0.66"/><circle cx="425.8" cy="868.4" r="0.8" fill-opacity="0.57"/><circle cx="1088.3" cy="1045.8" r="0.5" fill-opacity="0.43"/><circle cx="189.2" cy="920.2" r="0.7" fill-opacity="0.45"/><circle cx="237.7" cy="632.0" r="0.6" fill-opacity="0.67"/><circle cx="1825.9" cy="24.7" r="0.5" fill-opacity="0.44"/><circle cx="468.3" cy="362.5" r="1.1" fill-opacity="0.43"/><circle cx="623.5" cy="94.8" r="0.7" fill-opacity="0.81"/><circle cx="1718.6" cy="946.3" r="1.1" fill-opacity="0.69"/><circle cx="762.7" cy="427.2" r="1.1" fill-opacity="0.67"/><circle cx="1124.2" cy="75.9" r="1.1" fill-opacity="0.68"/><circle cx="59.8" cy="1040.2" r="1.1" fill-opacity="0.48"/><circle cx="591.1" cy="587.7" r="0.5" fill-opacity="0.33"/><circle cx="1793.2" cy="1129.3" r="0.8" fill-opacity="0.62"/><circle cx="907.5" cy="257.6" r="0.5" fill-opacity="0.59"/><circle cx="567.1" cy="1067.5" r="0.5" fill-opacity="0.36"/><circle cx="1721.9" cy="245.1" r="0.7" fill-opacity="0.84"/><circle cx="1608.8" cy="424.5" r="0.7" fill-opacity="0.61"/><circle cx="907.2" cy="218.4" r="0.8" fill-opacity="0.38"/><circle cx="1689.1" cy="1149.8" r="1.0" fill-opacity="0.65"/><circle cx="387.9" cy="739.2" r="1.0" fill-opacity="0.40"/><circle cx="367.7" cy="1019.5" r="1.0" fill-opacity="0.31"/><circle cx="96.0" cy="144.0" r="1.1" fill-opacity="0.72"/><circle cx="1393.5" cy="378.0" r="1.0" fill-opacity="0.64"/><circle cx="1728.6" cy="1007.5" r="0.8" fill-opacity="0.40"/><circle cx="1369.2" cy="176.5" r="1.1" fill-opacity="0.32"/><circle cx="1336.2" cy="1084.7" r="1.0" fill-opacity="0.78"/><circle cx="854.7" cy="113.3" r="0.5" fill-opacity="0.37"/><circle cx="428.6" cy="371.4" r="0.8" fill-opacity="0.56"/><circle cx="1364.2" cy="246.2" r="0.8" fill-opacity="0.64"/><circle cx="347.6" cy="290.3" r="1.1" fill-opacity="0.39"/><circle cx="1276.0" cy="918.0" r="0.7" fill-opacity="0.70"/><circle cx="715.2" cy="772.7" r="0.5" fill-opacity="0.49"/><circle cx="1698.1" cy="691.2" r="0.5" fill-opacity="0.38"/><circle cx="439.7" cy="364.4" r="0.6" fill-opacity="0.64"/><circle cx="1779.4" cy="778.4" r="0.5" fill-opacity="0.43"/><circle cx="531.5" cy="747.8" r="1.1" fill-opacity="0.51"/><circle cx="172.8" cy="1135.8" r="0.5" fill-opacity="0.69"/><circle cx="845.5" cy="621.5" r="0.6" fill-opacity="0.77"/><circle cx="1019.2" cy="75.3" r="1.0" fill-opacity="0.84"/><circle cx="1151.4" cy="345.8" r="0.5" fill-opacity="0.63"/><circle cx="481.7" cy="932.4" r="0.6" fill-opacity="0.46"/><circle cx="167.4" cy="346.5" r="0.6" fill-opacity="0.55"/><circle cx="1450.9" cy="302.1" r="0.8" fill-opacity="0.41"/><circle cx="535.9" cy="643.9" r="1.1" fill-opacity="0.59"/><circle cx="357.8" cy="1038.5" r="0.5" fill-opacity="0.39"/><circle cx="1896.5" cy="62.0" r="1.0" fill-opacity="0.74"/><circle cx="886.3" cy="872.9" r="0.8" fill-opacity="0.38"/><circle cx="738.6" cy="1075.0" r="1.0" fill-opacity="0.71"/><circle cx="959.8" cy="227.5" r="0.5" fill-opacity="0.51"/><circle cx="1067.5" cy="753.5" r="0.8" fill-opacity="0.47"/><circle cx="690.5" cy="768.5" r="1.0" fill-opacity="0.32"/><circle cx="1503.4" cy="608.4" r="0.7" fill-opacity="0.81"/><circle cx="970.8" cy="980.1" r="0.8" fill-opacity="0.79"/><circle cx="1313.8" cy="612.7" r="1.0" fill-opacity="0.77"/><circle cx="1826.9" cy="220.7" r="0.7" fill-opacity="0.60"/><circle cx="1496.9" cy="210.8" r="1.1" fill-opacity="0.37"/><circle cx="1167.5" cy="290.2" r="0.8" fill-opacity="0.74"/><circle cx="845.6" cy="898.3" r="0.7" fill-opacity="0.81"/><circle cx="1510.2" cy="918.8" r="0.5" fill-opacity="0.80"/><circle cx="453.0" cy="577.2" r="0.5" fill-opacity="0.45"/><circle cx="424.8" cy="680.1" r="0.7" fill-opacity="0.46"/><circle cx="958.0" cy="64.0" r="0.5" fill-opacity="0.68"/><circle cx="1145.9" cy="832.3" r="1.1" fill-opacity="0.40"/><circle cx="1099.5" cy="1011.2" r="0.8" fill-opacity="0.78"/><circle cx="345.7" cy="195.7" r="0.7" fill-opacity="0.72"/><circle cx="34.2" cy="585.1" r="0.5" fill-opacity="0.61"/><circle cx="834.5" cy="523.5" r="0.5" fill-opacity="0.71"/><circle cx="504.9" cy="927.1" r="1.1" fill-opacity="0.50"/><circle cx="139.3" cy="1050.2" r="1.0" fill-opacity="0.67"/><circle cx="1092.3" cy="638.4" r="1.0" fill-opacity="0.79"/><circle cx="1519.9" cy="293.2" r="1.0" fill-opacity="0.79"/><circle cx="280.8" cy="375.8" r="0.7" fill-opacity="0.85"/><circle cx="81.3" cy="379.5" r="0.8" fill-opacity="0.66"/><circle cx="1192.7" cy="618.3" r="1.0" fill-opacity="0.38"/><circle cx="508.3" cy="689.8" r="0.8" fill-opacity="0.57"/><circle cx="169.9" cy="952.1" r="0.5" fill-opacity="0.37"/><circle cx="329.5" cy="312.2" r="1.1" fill-opacity="0.33"/><circle cx="306.8" cy="805.1" r="1.1" fill-opacity="0.62"/><circle cx="1595.4" cy="913.8" r="0.6" fill-opacity="0.48"/><circle cx="117.4" cy="488.4" r="1.0" fill-opacity="0.51"/><circle cx="699.7" cy="268.7" r="0.7" fill-opacity="0.55"/><circle cx="1863.4" cy="71.6" r="0.5" fill-opacity="0.44"/><circle cx="939.9" cy="885.0" r="0.7" fill-opacity="0.58"/><circle cx="1893.5" cy="187.5" r="1.0" fill-opacity="0.40"/><circle cx="874.2" cy="866.5" r="0.7" fill-opacity="0.41"/><circle cx="75.3" cy="296.1" r="1.0" fill-opacity="0.63"/><circle cx="1709.0" cy="184.1" r="1.1" fill-opacity="0.30"/><circle cx="754.4" cy="361.1" r="0.5" fill-opacity="0.68"/><circle cx="814.9" cy="110.5" r="1.1" fill-opacity="0.48"/><circle cx="65.8" cy="1150.6" r="0.7" fill-opacity="0.56"/><circle cx="1465.5" cy="854.2" r="1.0" fill-opacity="0.65"/><circle cx="441.4" cy="310.4" r="0.5" fill-opacity="0.54"/><circle cx="1059.6" cy="297.3" r="0.6" fill-opacity="0.74"/><circle cx="886.2" cy="1078.6" r="0.6" fill-opacity="0.70"/><circle cx="698.9" cy="405.2" r="0.8" fill-opacity="0.81"/><circle cx="1884.0" cy="714.9" r="0.8" fill-opacity="0.45"/><circle cx="76.2" cy="479.9" r="1.0" fill-opacity="0.52"/><circle cx="1247.6" cy="90.2" r="0.7" fill-opacity="0.70"/><circle cx="658.9" cy="809.7" r="0.8" fill-opacity="0.60"/><circle cx="1659.7" cy="692.0" r="1.0" fill-opacity="0.38"/><circle cx="1701.8" cy="547.2" r="1.1" fill-opacity="0.83"/><circle cx="754.4" cy="977.5" r="0.6" fill-opacity="0.37"/><circle cx="731.8" cy="907.7" r="1.0" fill-opacity="0.39"/><circle cx="413.6" cy="416.9" r="0.5" fill-opacity="0.53"/><circle cx="352.5" cy="645.5" r="0.6" fill-opacity="0.60"/><circle cx="314.6" cy="254.3" r="0.6" fill-opacity="0.61"/><circle cx="411.8" cy="553.0" r="1.1" fill-opacity="0.50"/><circle cx="592.4" cy="529.7" r="1.1" fill-opacity="0.33"/><circle cx="1907.2" cy="792.2" r="0.5" fill-opacity="0.81"/><circle cx="1656.4" cy="255.4" r="0.6" fill-opacity="0.55"/><circle cx="735.3" cy="106.3" r="0.7" fill-opacity="0.68"/><circle cx="1327.4" cy="434.3" r="1.0" fill-opacity="0.55"/><circle cx="527.1" cy="45.0" r="0.7" fill-opacity="0.82"/><circle cx="349.5" cy="320.7" r="0.5" fill-opacity="0.65"/><circle cx="754.5" cy="1068.5" r="0.5" fill-opacity="0.56"/><circle cx="1373.2" cy="327.8" r="0.5" fill-opacity="0.32"/><circle cx="693.3" cy="197.6" r="0.6" fill-opacity="0.77"/><circle cx="1798.3" cy="430.9" r="0.6" fill-opacity="0.59"/><circle cx="1470.1" cy="842.2" r="0.6" fill-opacity="0.35"/><circle cx="1741.6" cy="47.1" r="1.1" fill-opacity="0.75"/><circle cx="618.4" cy="458.8" r="0.7" fill-opacity="0.81"/><circle cx="159.7" cy="1022.0" r="0.7" fill-opacity="0.67"/><circle cx="624.5" cy="895.7" r="1.1" fill-opacity="0.50"/><circle cx="997.1" cy="86.1" r="0.8" fill-opacity="0.60"/><circle cx="756.4" cy="293.5" r="1.0" fill-opacity="0.43"/><circle cx="78.4" cy="194.6" r="0.5" fill-opacity="0.67"/><circle cx="1143.2" cy="59.9" r="0.7" fill-opacity="0.46"/><circle cx="599.6" cy="503.6" r="0.7" fill-opacity="0.65"/><circle cx="1044.5" cy="177.8" r="0.8" fill-opacity="0.42"/><circle cx="1356.7" cy="318.5" r="0.8" fill-opacity="0.56"/><circle cx="1392.9" cy="777.4" r="0.7" fill-opacity="0.57"/><circle cx="282.6" cy="255.6" r="1.0" fill-opacity="0.39"/><circle cx="538.3" cy="830.1" r="0.7" fill-opacity="0.33"/><circle cx="778.2" cy="461.1" r="0.6" fill-opacity="0.50"/><circle cx="1662.7" cy="279.7" r="0.7" fill-opacity="0.68"/><circle cx="560.8" cy="414.1" r="1.1" fill-opacity="0.46"/><circle cx="414.3" cy="70.0" r="0.8" fill-opacity="0.63"/><circle cx="47.1" cy="737.0" r="0.8" fill-opacity="0.74"/><circle cx="1086.6" cy="938.7" r="0.8" fill-opacity="0.83"/><circle cx="1873.2" cy="361.1" r="1.1" fill-opacity="0.57"/><circle cx="1287.3" cy="1063.5" r="0.8" fill-opacity="0.68"/><circle cx="415.1" cy="803.5" r="0.7" fill-opacity="0.34"/><circle cx="1279.9" cy="1104.3" r="0.5" fill-opacity="0.33"/><circle cx="1667.3" cy="289.3" r="0.8" fill-opacity="0.59"/><circle cx="1214.4" cy="125.7" r="1.1" fill-opacity="0.82"/><circle cx="821.2" cy="467.8" r="0.8" fill-opacity="0.38"/><circle cx="115.4" cy="457.6" r="0.8" fill-opacity="0.35"/><circle cx="630.1" cy="586.2" r="0.6" fill-opacity="0.72"/><circle cx="537.2" cy="203.4" r="0.8" fill-opacity="0.66"/><circle cx="772.7" cy="561.5" r="0.7" fill-opacity="0.50"/><circle cx="320.1" cy="776.3" r="0.6" fill-opacity="0.70"/><circle cx="460.4" cy="129.2" r="0.5" fill-opacity="0.79"/><circle cx="656.3" cy="501.6" r="0.8" fill-opacity="0.38"/><circle cx="289.5" cy="683.0" r="0.6" fill-opacity="0.37"/><circle cx="1346.6" cy="649.7" r="1.1" fill-opacity="0.70"/><circle cx="1344.4" cy="50.1" r="1.0" fill-opacity="0.67"/><circle cx="751.4" cy="436.0" r="0.6" fill-opacity="0.48"/><circle cx="120.8" cy="481.3" r="0.6" fill-opacity="0.63"/><circle cx="104.9" cy="584.5" r="0.5" fill-opacity="0.45"/><circle cx="1124.9" cy="554.4" r="0.5" fill-opacity="0.48"/><circle cx="625.0" cy="310.6" r="0.6" fill-opacity="0.53"/><circle cx="45.2" cy="416.6" r="0.5" fill-opacity="0.36"/><circle cx="1712.2" cy="663.8" r="0.5" fill-opacity="0.84"/><circle cx="502.8" cy="779.6" r="0.7" fill-opacity="0.56"/><circle cx="357.1" cy="554.7" r="0.6" fill-opacity="0.76"/><circle cx="1181.3" cy="1103.7" r="1.0" fill-opacity="0.40"/><circle cx="696.2" cy="675.6" r="0.8" fill-opacity="0.47"/><circle cx="1809.4" cy="896.5" r="0.8" fill-opacity="0.41"/><circle cx="1204.5" cy="726.1" r="1.1" fill-opacity="0.83"/><circle cx="789.0" cy="494.0" r="0.8" fill-opacity="0.81"/><circle cx="530.3" cy="962.3" r="0.8" fill-opacity="0.64"/><circle cx="1689.1" cy="455.9" r="0.7" fill-opacity="0.33"/><circle cx="1746.5" cy="67.1" r="0.8" fill-opacity="0.80"/><circle cx="260.8" cy="597.5" r="0.5" fill-opacity="0.75"/><circle cx="592.5" cy="431.6" r="0.6" fill-opacity="0.38"/><circle cx="1875.8" cy="193.5" r="1.0" fill-opacity="0.58"/><circle cx="369.5" cy="282.4" r="1.0" fill-opacity="0.78"/><circle cx="1305.9" cy="289.3" r="0.6" fill-opacity="0.39"/><circle cx="1.8" cy="639.1" r="1.0" fill-opacity="0.47"/><circle cx="756.3" cy="294.7" r="0.6" fill-opacity="0.63"/><circle cx="947.7" cy="759.3" r="0.7" fill-opacity="0.72"/><circle cx="1052.4" cy="730.2" r="0.7" fill-opacity="0.67"/><circle cx="1076.7" cy="964.0" r="1.1" fill-opacity="0.82"/><circle cx="1860.1" cy="401.2" r="0.6" fill-opacity="0.55"/><circle cx="665.6" cy="1026.4" r="0.5" fill-opacity="0.58"/><circle cx="601.6" cy="833.7" r="0.6" fill-opacity="0.39"/><circle cx="1335.1" cy="800.5" r="0.8" fill-opacity="0.57"/><circle cx="1850.7" cy="956.4" r="1.1" fill-opacity="0.57"/><circle cx="306.2" cy="727.0" r="0.6" fill-opacity="0.50"/><circle cx="942.1" cy="661.7" r="0.6" fill-opacity="0.42"/><circle cx="709.5" cy="347.1" r="1.0" fill-opacity="0.63"/><circle cx="1438.0" cy="627.9" r="0.6" fill-opacity="0.35"/><circle cx="455.1" cy="306.0" r="1.0" fill-opacity="0.63"/><circle cx="624.0" cy="225.1" r="1.0" fill-opacity="0.84"/><circle cx="986.4" cy="166.5" r="1.0" fill-opacity="0.74"/><circle cx="121.4" cy="101.7" r="0.8" fill-opacity="0.52"/><circle cx="196.3" cy="821.1" r="1.1" fill-opacity="0.84"/><circle cx="216.5" cy="534.7" r="0.8" fill-opacity="0.73"/><circle cx="1482.4" cy="567.7" r="0.5" fill-opacity="0.66"/><circle cx="312.1" cy="1003.8" r="0.7" fill-opacity="0.56"/><circle cx="1670.1" cy="84.4" r="1.0" fill-opacity="0.77"/><circle cx="487.5" cy="597.9" r="1.1" fill-opacity="0.67"/><circle cx="1529.2" cy="467.7" r="0.7" fill-opacity="0.51"/><circle cx="1374.6" cy="308.8" r="1.1" fill-opacity="0.32"/><circle cx="1374.2" cy="393.7" r="0.8" fill-opacity="0.47"/><circle cx="641.0" cy="882.7" r="0.5" fill-opacity="0.83"/><circle cx="1618.0" cy="961.1" r="0.6" fill-opacity="0.81"/><circle cx="1089.5" cy="499.7" r="0.7" fill-opacity="0.63"/><circle cx="1357.3" cy="728.6" r="1.1" fill-opacity="0.36"/><circle cx="1595.5" cy="930.2" r="0.6" fill-opacity="0.84"/><circle cx="240.4" cy="450.3" r="1.0" fill-opacity="0.79"/><circle cx="1285.2" cy="285.3" r="0.5" fill-opacity="0.59"/><circle cx="354.5" cy="39.5" r="0.8" fill-opacity="0.42"/><circle cx="1124.2" cy="1088.3" r="0.5" fill-opacity="0.49"/><circle cx="1863.2" cy="175.3" r="0.8" fill-opacity="0.82"/><circle cx="1320.2" cy="498.2" r="0.7" fill-opacity="0.81"/><circle cx="1212.4" cy="472.7" r="0.7" fill-opacity="0.47"/><circle cx="1792.1" cy="1142.3" r="0.8" fill-opacity="0.32"/><circle cx="93.5" cy="830.7" r="1.1" fill-opacity="0.61"/><circle cx="227.3" cy="71.9" r="0.7" fill-opacity="0.57"/><circle cx="549.2" cy="851.0" r="0.5" fill-opacity="0.37"/><circle cx="1907.8" cy="159.9" r="0.5" fill-opacity="0.35"/><circle cx="633.7" cy="54.0" r="1.1" fill-opacity="0.63"/><circle cx="1041.7" cy="570.3" r="0.5" fill-opacity="0.43"/><circle cx="717.0" cy="373.7" r="0.8" fill-opacity="0.63"/><circle cx="1536.9" cy="972.6" r="0.7" fill-opacity="0.48"/><circle cx="544.8" cy="467.0" r="1.0" fill-opacity="0.53"/><circle cx="1186.1" cy="889.6" r="0.7" fill-opacity="0.44"/><circle cx="1883.5" cy="464.4" r="0.6" fill-opacity="0.50"/><circle cx="1332.6" cy="641.5" r="1.1" fill-opacity="0.62"/><circle cx="1536.3" cy="190.1" r="0.6" fill-opacity="0.49"/><circle cx="336.2" cy="145.1" r="1.1" fill-opacity="0.35"/><circle cx="1792.4" cy="308.3" r="1.0" fill-opacity="0.66"/><circle cx="937.5" cy="160.1" r="1.0" fill-opacity="0.35"/><circle cx="621.4" cy="45.8" r="0.8" fill-opacity="0.64"/><circle cx="1086.6" cy="186.5" r="0.7" fill-opacity="0.85"/><circle cx="1200.6" cy="333.9" r="1.0" fill-opacity="0.46"/><circle cx="436.9" cy="569.4" r="0.7" fill-opacity="0.83"/><circle cx="702.4" cy="317.6" r="0.8" fill-opacity="0.66"/><circle cx="98.4" cy="96.8" r="0.8" fill-opacity="0.37"/><circle cx="1713.9" cy="373.9" r="0.7" fill-opacity="0.67"/><circle cx="150.6" cy="230.4" r="0.6" fill-opacity="0.59"/><circle cx="928.2" cy="1151.8" r="0.8" fill-opacity="0.74"/><circle cx="388.2" cy="1004.9" r="1.1" fill-opacity="0.69"/><circle cx="929.8" cy="492.9" r="1.1" fill-opacity="0.63"/><circle cx="1549.5" cy="471.8" r="0.8" fill-opacity="0.35"/><circle cx="110.7" cy="646.7" r="0.6" fill-opacity="0.71"/><circle cx="1261.2" cy="728.7" r="0.6" fill-opacity="0.83"/><circle cx="532.0" cy="1085.9" r="0.7" fill-opacity="0.36"/><circle cx="1660.0" cy="1148.5" r="0.6" fill-opacity="0.56"/><circle cx="850.9" cy="966.9" r="1.0" fill-opacity="0.62"/><circle cx="1391.9" cy="222.9" r="1.1" fill-opacity="0.73"/><circle cx="51.4" cy="215.0" r="0.7" fill-opacity="0.36"/><circle cx="228.1" cy="108.4" r="0.7" fill-opacity="0.74"/><circle cx="689.1" cy="876.3" r="0.5" fill-opacity="0.57"/><circle cx="595.2" cy="605.6" r="0.8" fill-opacity="0.35"/><circle cx="20.1" cy="261.7" r="0.6" fill-opacity="0.34"/><circle cx="1841.8" cy="36.5" r="0.7" fill-opacity="0.66"/><circle cx="1012.3" cy="940.2" r="1.1" fill-opacity="0.62"/><circle cx="1521.2" cy="855.7" r="1.1" fill-opacity="0.40"/><circle cx="766.6" cy="932.3" r="0.7" fill-opacity="0.59"/><circle cx="1589.1" cy="892.3" r="0.6" fill-opacity="0.54"/><circle cx="1893.0" cy="138.0" r="0.5" fill-opacity="0.44"/><circle cx="1824.7" cy="479.0" r="1.1" fill-opacity="0.56"/><circle cx="1354.1" cy="307.3" r="1.0" fill-opacity="0.38"/><circle cx="1746.5" cy="50.6" r="0.6" fill-opacity="0.61"/><circle cx="1107.5" cy="281.0" r="1.0" fill-opacity="0.62"/><circle cx="745.7" cy="441.7" r="0.5" fill-opacity="0.83"/><circle cx="1261.4" cy="941.0" r="0.6" fill-opacity="0.76"/><circle cx="700.2" cy="745.6" r="0.8" fill-opacity="0.64"/><circle cx="679.8" cy="339.8" r="0.8" fill-opacity="0.75"/><circle cx="1737.9" cy="387.8" r="0.8" fill-opacity="0.40"/><circle cx="180.8" cy="402.7" r="0.8" fill-opacity="0.82"/><circle cx="1423.9" cy="263.0" r="0.6" fill-opacity="0.66"/><circle cx="1426.9" cy="641.8" r="0.7" fill-opacity="0.39"/><circle cx="1306.0" cy="224.5" r="0.6" fill-opacity="0.80"/><circle cx="203.2" cy="185.7" r="0.5" fill-opacity="0.80"/><circle cx="672.6" cy="511.2" r="0.8" fill-opacity="0.76"/><circle cx="18.1" cy="592.4" r="0.7" fill-opacity="0.35"/><circle cx="774.4" cy="387.6" r="0.7" fill-opacity="0.66"/><circle cx="1031.3" cy="1101.0" r="1.1" fill-opacity="0.60"/><circle cx="393.0" cy="1019.8" r="0.7" fill-opacity="0.54"/><circle cx="616.1" cy="876.9" r="0.8" fill-opacity="0.31"/><circle cx="208.0" cy="1140.9" r="0.7" fill-opacity="0.74"/><circle cx="825.8" cy="1112.8" r="1.0" fill-opacity="0.68"/><circle cx="421.7" cy="485.7" r="1.1" fill-opacity="0.78"/><circle cx="1355.6" cy="225.1" r="1.0" fill-opacity="0.68"/><circle cx="524.9" cy="789.9" r="0.6" fill-opacity="0.32"/><circle cx="1819.6" cy="388.4" r="0.8" fill-opacity="0.61"/><circle cx="352.2" cy="428.0" r="0.5" fill-opacity="0.60"/><circle cx="1899.8" cy="191.5" r="0.8" fill-opacity="0.67"/><circle cx="1218.7" cy="451.7" r="0.6" fill-opacity="0.76"/><circle cx="1236.2" cy="264.1" r="0.5" fill-opacity="0.34"/><circle cx="1183.2" cy="1027.9" r="0.6" fill-opacity="0.50"/><circle cx="1644.2" cy="735.0" r="0.7" fill-opacity="0.73"/><circle cx="969.3" cy="666.1" r="0.5" fill-opacity="0.62"/><circle cx="219.1" cy="971.2" r="1.0" fill-opacity="0.51"/><circle cx="1324.5" cy="536.6" r="0.6" fill-opacity="0.40"/><circle cx="1277.7" cy="498.3" r="0.7" fill-opacity="0.31"/><circle cx="738.5" cy="284.2" r="0.6" fill-opacity="0.40"/><circle cx="1153.3" cy="671.8" r="0.5" fill-opacity="0.41"/><circle cx="989.2" cy="60.4" r="0.8" fill-opacity="0.47"/><circle cx="1204.5" cy="529.3" r="0.5" fill-opacity="0.71"/><circle cx="1139.3" cy="696.5" r="0.7" fill-opacity="0.32"/><circle cx="1788.7" cy="195.8" r="0.8" fill-opacity="0.50"/><circle cx="899.9" cy="1146.9" r="0.8" fill-opacity="0.36"/><circle cx="1416.9" cy="378.0" r="0.7" fill-opacity="0.81"/><circle cx="1414.6" cy="1143.0" r="0.5" fill-opacity="0.81"/><circle cx="772.0" cy="1005.1" r="1.0" fill-opacity="0.49"/><circle cx="243.2" cy="1143.8" r="1.0" fill-opacity="0.82"/><circle cx="942.9" cy="288.8" r="0.6" fill-opacity="0.77"/><circle cx="1613.2" cy="758.3" r="0.7" fill-opacity="0.41"/><circle cx="1800.4" cy="961.9" r="0.6" fill-opacity="0.37"/><circle cx="1531.5" cy="602.6" r="0.7" fill-opacity="0.80"/><circle cx="1907.9" cy="97.3" r="0.5" fill-opacity="0.76"/><circle cx="1670.6" cy="828.9" r="1.1" fill-opacity="0.48"/><circle cx="481.4" cy="936.9" r="0.5" fill-opacity="0.79"/><circle cx="871.8" cy="630.6" r="1.0" fill-opacity="0.32"/><circle cx="1661.9" cy="245.7" r="0.7" fill-opacity="0.46"/><circle cx="536.9" cy="752.0" r="0.7" fill-opacity="0.74"/><circle cx="141.2" cy="651.7" r="0.8" fill-opacity="0.82"/><circle cx="1511.3" cy="579.0" r="1.0" fill-opacity="0.77"/><circle cx="464.3" cy="928.8" r="0.8" fill-opacity="0.34"/><circle cx="1641.7" cy="895.8" r="0.6" fill-opacity="0.52"/><circle cx="1054.6" cy="1048.3" r="1.0" fill-opacity="0.49"/><circle cx="1529.8" cy="195.7" r="0.6" fill-opacity="0.57"/><circle cx="702.4" cy="137.5" r="0.5" fill-opacity="0.47"/><circle cx="70.7" cy="415.1" r="0.7" fill-opacity="0.60"/><circle cx="1660.5" cy="967.1" r="0.8" fill-opacity="0.81"/><circle cx="225.4" cy="229.5" r="1.0" fill-opacity="0.46"/><circle cx="746.2" cy="984.4" r="0.5" fill-opacity="0.55"/><circle cx="1184.7" cy="1043.9" r="0.5" fill-opacity="0.48"/><circle cx="138.0" cy="1141.3" r="0.8" fill-opacity="0.74"/><circle cx="396.9" cy="735.6" r="0.5" fill-opacity="0.45"/><circle cx="1683.0" cy="847.0" r="0.5" fill-opacity="0.30"/><circle cx="378.4" cy="780.0" r="0.7" fill-opacity="0.39"/><circle cx="827.1" cy="41.4" r="0.6" fill-opacity="0.32"/><circle cx="652.0" cy="380.6" r="0.8" fill-opacity="0.63"/><circle cx="1209.0" cy="339.0" r="1.1" fill-opacity="0.78"/><circle cx="1157.9" cy="809.9" r="0.7" fill-opacity="0.30"/><circle cx="346.9" cy="168.8" r="1.0" fill-opacity="0.59"/><circle cx="1332.0" cy="551.6" r="0.5" fill-opacity="0.53"/><circle cx="247.9" cy="155.2" r="0.8" fill-opacity="0.73"/><circle cx="1806.8" cy="713.9" r="1.0" fill-opacity="0.66"/><circle cx="686.5" cy="245.9" r="0.5" fill-opacity="0.49"/><circle cx="1910.1" cy="806.3" r="0.7" fill-opacity="0.58"/><circle cx="1413.6" cy="431.5" r="1.1" fill-opacity="0.79"/><circle cx="595.7" cy="485.7" r="1.1" fill-opacity="0.38"/><circle cx="280.8" cy="737.9" r="0.7" fill-opacity="0.55"/><circle cx="815.5" cy="951.6" r="1.0" fill-opacity="0.79"/><circle cx="785.3" cy="540.6" r="1.0" fill-opacity="0.58"/><circle cx="972.5" cy="1089.0" r="0.5" fill-opacity="0.76"/><circle cx="665.0" cy="819.8" r="1.0" fill-opacity="0.60"/><circle cx="451.3" cy="679.2" r="1.0" fill-opacity="0.80"/><circle cx="547.0" cy="1011.0" r="0.5" fill-opacity="0.63"/><circle cx="550.1" cy="990.4" r="0.6" fill-opacity="0.51"/><circle cx="1299.2" cy="538.5" r="1.0" fill-opacity="0.39"/><circle cx="1792.7" cy="462.4" r="1.0" fill-opacity="0.45"/><circle cx="1427.1" cy="704.0" r="0.8" fill-opacity="0.36"/><circle cx="860.9" cy="96.6" r="1.1" fill-opacity="0.47"/><circle cx="804.7" cy="342.1" r="0.8" fill-opacity="0.30"/><circle cx="846.5" cy="1103.6" r="0.6" fill-opacity="0.79"/><circle cx="562.5" cy="809.9" r="0.8" fill-opacity="0.78"/><circle cx="1290.4" cy="300.8" r="0.7" fill-opacity="0.83"/><circle cx="790.1" cy="173.5" r="0.8" fill-opacity="0.69"/><circle cx="1719.1" cy="308.6" r="1.1" fill-opacity="0.81"/><circle cx="807.6" cy="410.3" r="1.0" fill-opacity="0.81"/><circle cx="1575.4" cy="985.7" r="1.0" fill-opacity="0.34"/><circle cx="1134.2" cy="641.4" r="0.8" fill-opacity="0.56"/><circle cx="190.9" cy="1038.0" r="0.7" fill-opacity="0.39"/><circle cx="169.7" cy="435.2" r="1.0" fill-opacity="0.79"/><circle cx="719.0" cy="841.8" r="0.8" fill-opacity="0.37"/><circle cx="1284.8" cy="412.9" r="0.8" fill-opacity="0.37"/><circle cx="1724.0" cy="1098.1" r="1.0" fill-opacity="0.67"/><circle cx="44.6" cy="739.9" r="0.5" fill-opacity="0.40"/><circle cx="900.8" cy="433.1" r="0.8" fill-opacity="0.53"/><circle cx="892.5" cy="381.4" r="0.8" fill-opacity="0.59"/><circle cx="1288.1" cy="708.9" r="0.6" fill-opacity="0.63"/><circle cx="1863.2" cy="1128.4" r="0.5" fill-opacity="0.81"/><circle cx="1917.0" cy="472.6" r="1.0" fill-opacity="0.43"/><circle cx="1894.7" cy="758.0" r="0.6" fill-opacity="0.41"/><circle cx="1877.3" cy="1147.3" r="1.1" fill-opacity="0.57"/><circle cx="1791.1" cy="547.7" r="1.1" fill-opacity="0.49"/><circle cx="1836.6" cy="764.8" r="0.7" fill-opacity="0.47"/><circle cx="1811.7" cy="1138.5" r="0.5" fill-opacity="0.37"/><circle cx="1810.5" cy="444.3" r="0.6" fill-opacity="0.84"/><circle cx="1801.4" cy="472.0" r="0.5" fill-opacity="0.66"/><circle cx="1882.9" cy="123.6" r="0.5" fill-opacity="0.43"/><circle cx="1804.7" cy="756.8" r="0.5" fill-opacity="0.79"/><circle cx="1866.7" cy="861.1" r="0.7" fill-opacity="0.60"/><circle cx="1816.5" cy="938.6" r="0.8" fill-opacity="0.83"/><circle cx="1881.4" cy="899.1" r="1.1" fill-opacity="0.62"/><circle cx="1798.3" cy="554.9" r="0.6" fill-opacity="0.71"/><circle cx="1784.1" cy="992.8" r="1.0" fill-opacity="0.72"/><circle cx="1910.5" cy="1033.3" r="1.0" fill-opacity="0.63"/><circle cx="1785.3" cy="423.2" r="1.1" fill-opacity="0.48"/><circle cx="1854.9" cy="627.7" r="1.1" fill-opacity="0.37"/><circle cx="1797.1" cy="913.9" r="0.7" fill-opacity="0.83"/><circle cx="1823.0" cy="598.2" r="0.6" fill-opacity="0.40"/><circle cx="1798.9" cy="666.0" r="1.1" fill-opacity="0.83"/><circle cx="1799.6" cy="129.0" r="0.5" fill-opacity="0.81"/><circle cx="1851.7" cy="359.2" r="0.8" fill-opacity="0.77"/><circle cx="1887.7" cy="306.4" r="0.7" fill-opacity="0.61"/><circle cx="1838.3" cy="90.8" r="0.5" fill-opacity="0.79"/><circle cx="1811.6" cy="535.9" r="1.1" fill-opacity="0.76"/><circle cx="1857.9" cy="544.5" r="0.5" fill-opacity="0.52"/><circle cx="1897.7" cy="146.9" r="1.0" fill-opacity="0.70"/><circle cx="1897.6" cy="203.4" r="0.8" fill-opacity="0.33"/><circle cx="1914.0" cy="618.0" r="1.0" fill-opacity="0.84"/><circle cx="1837.3" cy="715.7" r="0.8" fill-opacity="0.77"/><circle cx="1899.5" cy="1109.4" r="0.6" fill-opacity="0.67"/><circle cx="1838.2" cy="42.0" r="1.1" fill-opacity="0.54"/><circle cx="1802.9" cy="946.6" r="0.5" fill-opacity="0.65"/><circle cx="1881.9" cy="828.1" r="0.5" fill-opacity="0.72"/><circle cx="1803.3" cy="624.8" r="0.8" fill-opacity="0.70"/><circle cx="1785.9" cy="153.5" r="0.8" fill-opacity="0.55"/><circle cx="1822.9" cy="1112.2" r="0.6" fill-opacity="0.38"/><circle cx="1869.5" cy="979.4" r="0.8" fill-opacity="0.67"/><circle cx="1788.3" cy="496.1" r="1.0" fill-opacity="0.69"/><circle cx="1792.7" cy="322.1" r="0.6" fill-opacity="0.30"/><circle cx="1797.2" cy="1059.1" r="0.8" fill-opacity="0.81"/><circle cx="1826.7" cy="577.7" r="0.6" fill-opacity="0.38"/><circle cx="1870.9" cy="1023.1" r="0.8" fill-opacity="0.75"/><circle cx="1910.7" cy="666.1" r="1.0" fill-opacity="0.80"/><circle cx="1850.1" cy="1042.3" r="1.1" fill-opacity="0.74"/><circle cx="1835.6" cy="365.3" r="1.1" fill-opacity="0.78"/><circle cx="1882.5" cy="319.3" r="1.0" fill-opacity="0.40"/><circle cx="1832.0" cy="510.8" r="0.7" fill-opacity="0.64"/><circle cx="1846.9" cy="431.5" r="0.7" fill-opacity="0.35"/><circle cx="1840.5" cy="534.9" r="1.1" fill-opacity="0.34"/><circle cx="1788.7" cy="965.9" r="1.1" fill-opacity="0.84"/><circle cx="1790.4" cy="621.2" r="1.1" fill-opacity="0.60"/><circle cx="1856.5" cy="477.7" r="0.5" fill-opacity="0.67"/><circle cx="1812.3" cy="141.1" r="1.0" fill-opacity="0.57"/><circle cx="1832.6" cy="382.1" r="0.5" fill-opacity="0.83"/><circle cx="1847.8" cy="288.0" r="0.8" fill-opacity="0.55"/><circle cx="1883.9" cy="575.9" r="0.5" fill-opacity="0.63"/><circle cx="1783.2" cy="485.4" r="1.0" fill-opacity="0.65"/><circle cx="1913.4" cy="37.9" r="1.0" fill-opacity="0.50"/><circle cx="1862.7" cy="1106.1" r="0.5" fill-opacity="0.30"/><circle cx="1831.7" cy="699.8" r="0.7" fill-opacity="0.64"/><circle cx="1832.2" cy="367.3" r="0.8" fill-opacity="0.63"/><circle cx="1864.9" cy="690.2" r="0.5" fill-opacity="0.72"/><circle cx="1824.9" cy="587.3" r="0.6" fill-opacity="0.55"/><circle cx="1852.2" cy="874.2" r="1.1" fill-opacity="0.52"/><circle cx="1789.2" cy="134.0" r="0.5" fill-opacity="0.60"/><circle cx="1816.3" cy="332.5" r="0.7" fill-opacity="0.33"/><circle cx="1890.2" cy="506.6" r="1.0" fill-opacity="0.52"/><circle cx="1899.0" cy="480.6" r="0.7" fill-opacity="0.34"/><circle cx="1820.9" cy="791.5" r="0.5" fill-opacity="0.62"/><circle cx="1793.6" cy="1132.2" r="1.1" fill-opacity="0.52"/><circle cx="1895.1" cy="397.6" r="0.5" fill-opacity="0.35"/><circle cx="1825.2" cy="947.7" r="1.0" fill-opacity="0.53"/><circle cx="1889.2" cy="749.3" r="0.5" fill-opacity="0.49"/><circle cx="1789.7" cy="885.2" r="1.1" fill-opacity="0.41"/><circle cx="1788.5" cy="729.7" r="1.0" fill-opacity="0.47"/><circle cx="1857.1" cy="1068.6" r="0.7" fill-opacity="0.31"/><circle cx="1868.9" cy="55.0" r="0.7" fill-opacity="0.53"/><circle cx="1909.1" cy="873.1" r="1.1" fill-opacity="0.46"/></svg><svg style="position:absolute;left:1790px;top:46px" width="21" height="22" viewBox="0 0 21 22"><path d="M2.5 1h16l1.5 13H1z" fill="#f5a623"/><path d="M4 2h13l1 11H3z" fill="#fbb02a"/><rect x="1" y="14" width="19" height="7" rx="1.5" fill="#b9b9b9"/><rect x="2" y="17" width="17" height="2" fill="#e3e3e3"/></svg>
<div class="ico" style="left:1755px;top:71px;width:90px">500GBwork</div>
<div class="ico" style="left:1755px;top:85px;width:90px">11</div>
<svg style="position:absolute;left:1788px;top:112px" width="21" height="22" viewBox="0 0 21 22"><path d="M2.5 1h16l1.5 13H1z" fill="#f5a623"/><path d="M4 2h13l1 11H3z" fill="#fbb02a"/><rect x="1" y="14" width="19" height="7" rx="1.5" fill="#b9b9b9"/><rect x="2" y="17" width="17" height="2" fill="#e3e3e3"/></svg>
<div class="ico" style="left:1753px;top:138.5px;width:90px">4TB_5</div>
<svg style="position:absolute;left:1791px;top:165px" width="21" height="22" viewBox="0 0 21 22"><path d="M2.5 1h16l1.5 13H1z" fill="#f5a623"/><path d="M4 2h13l1 11H3z" fill="#fbb02a"/><rect x="1" y="14" width="19" height="7" rx="1.5" fill="#b9b9b9"/><rect x="2" y="17" width="17" height="2" fill="#e3e3e3"/></svg>
<div class="ico" style="left:1755.5px;top:191.7px;width:90px">4TB_4</div>
<svg style="position:absolute;left:1792px;top:222px" width="21" height="22" viewBox="0 0 21 22"><path d="M2.5 1h16l1.5 13H1z" fill="#f5a623"/><path d="M4 2h13l1 11H3z" fill="#fbb02a"/><rect x="1" y="14" width="19" height="7" rx="1.5" fill="#b9b9b9"/><rect x="2" y="17" width="17" height="2" fill="#e3e3e3"/></svg>
<div class="ico" style="left:1757px;top:248px;width:90px">4TB-1</div>
<svg style="position:absolute;left:1787px;top:283px" width="21" height="22" viewBox="0 0 21 22"><path d="M2.5 1h16l1.5 13H1z" fill="#f5a623"/><path d="M4 2h13l1 11H3z" fill="#fbb02a"/><rect x="1" y="14" width="19" height="7" rx="1.5" fill="#b9b9b9"/><rect x="2" y="17" width="17" height="2" fill="#e3e3e3"/></svg>
<div class="ico" style="left:1753px;top:309.7px;width:90px">500GBwork</div>
<div class="ico" style="left:1753px;top:324px;width:90px">16</div>
<svg style="position:absolute;left:1788px;top:345px" width="21" height="22" viewBox="0 0 21 22"><path d="M2.5 1h16l1.5 13H1z" fill="#f5a623"/><path d="M4 2h13l1 11H3z" fill="#fbb02a"/><rect x="1" y="14" width="19" height="7" rx="1.5" fill="#b9b9b9"/><rect x="2" y="17" width="17" height="2" fill="#e3e3e3"/></svg>
<div class="ico" style="left:1753px;top:371.3px;width:90px">1TB-1</div>
<svg style="position:absolute;left:1867px;top:44px" width="22" height="21" viewBox="0 0 22 21"><path d="M2 1h18l1.5 19H.5z" fill="#9ea3a6"/><path d="M3 2h16l1 16H2z" fill="#c3c8ca"/><rect x="5" y="3" width="12" height="2" fill="#555"/><circle cx="11" cy="11" r="4" fill="#a7acae"/><rect x="2" y="17" width="18" height="3" fill="#7b7f82"/></svg>
<div class="ico" style="left:1833px;top:71px;width:90px">Macintosh</div>
<div class="ico" style="left:1833px;top:85px;width:90px">HD</div>
<svg style="position:absolute;left:1864px;top:120px" width="24" height="23" viewBox="0 0 24 23"><path d="M4 .5h10l5 5V21H4z" fill="#d8d8d8" stroke="#8d8d8d"/><path d="M14 .5v5h5" fill="#f4f4f4" stroke="#8d8d8d"/><circle cx="11.5" cy="10" r="4.5" fill="#eee" stroke="#666"/><path d="M12.5 7.5v4a1.5 1.5 0 0 1-3 0" fill="none" stroke="#555" stroke-width="1.2"/><rect x="1" y="16" width="18" height="5" fill="#8a8a8a"/><rect x="3" y="17.5" width="14" height="2" fill="#d0d0d0"/></svg>
<div class="ico" style="left:1831px;top:147.5px;width:90px">schedule</div>
<svg style="position:absolute;left:1864px;top:182px" width="24" height="23" viewBox="0 0 24 23"><path d="M4 .5h10l5 5V21H4z" fill="#d8d8d8" stroke="#8d8d8d"/><path d="M14 .5v5h5" fill="#f4f4f4" stroke="#8d8d8d"/><circle cx="11.5" cy="10" r="4.5" fill="#eee" stroke="#666"/><path d="M12.5 7.5v4a1.5 1.5 0 0 1-3 0" fill="none" stroke="#555" stroke-width="1.2"/><rect x="1" y="16" width="18" height="5" fill="#8a8a8a"/><rect x="3" y="17.5" width="14" height="2" fill="#d0d0d0"/><circle cx="21" cy="12" r="2" fill="#ddd"/></svg>
<div class="ico" style="left:1831px;top:209.7px;width:90px">メアド</div>
<svg style="position:absolute;left:1862px;top:238px" width="23" height="19" viewBox="0 0 23 19"><path d="M1 2.5a1.5 1.5 0 0 1 1.5-1.5h6l2 2h10a1.5 1.5 0 0 1 1.5 1.5V17a1.5 1.5 0 0 1-1.5 1.5h-18A1.5 1.5 0 0 1 1 17z" fill="#4aa9e6"/><path d="M1 5.5h21V17a1.5 1.5 0 0 1-1.5 1.5h-18A1.5 1.5 0 0 1 1 17z" fill="#66bff4"/><path d="M2 17l3-2v3z" fill="#fff" stroke="#333" stroke-width=".5"/></svg>
<div class="ico" style="left:1828px;top:263px;width:90px">1106</div>
<svg style="position:absolute;left:1862px;top:299px" width="23" height="19" viewBox="0 0 23 19"><path d="M1 2.5a1.5 1.5 0 0 1 1.5-1.5h6l2 2h10a1.5 1.5 0 0 1 1.5 1.5V17a1.5 1.5 0 0 1-1.5 1.5h-18A1.5 1.5 0 0 1 1 17z" fill="#4aa9e6"/><path d="M1 5.5h21V17a1.5 1.5 0 0 1-1.5 1.5h-18A1.5 1.5 0 0 1 1 17z" fill="#66bff4"/><path d="M2 17l3-2v3z" fill="#fff" stroke="#333" stroke-width=".5"/></svg>
<div class="ico" style="left:1827.5px;top:324.7px;width:90px">ASL</div>
<svg style="position:absolute;left:1861px;top:354px" width="23" height="19" viewBox="0 0 23 19"><path d="M1 2.5a1.5 1.5 0 0 1 1.5-1.5h6l2 2h10a1.5 1.5 0 0 1 1.5 1.5V17a1.5 1.5 0 0 1-1.5 1.5h-18A1.5 1.5 0 0 1 1 17z" fill="#4aa9e6"/><path d="M1 5.5h21V17a1.5 1.5 0 0 1-1.5 1.5h-18A1.5 1.5 0 0 1 1 17z" fill="#66bff4"/><path d="M2 17l3-2v3z" fill="#fff" stroke="#333" stroke-width=".5"/></svg>
<div class="ico" style="left:1826.5px;top:379.8px;width:90px">お仕事</div>
<svg style="position:absolute;left:1858px;top:417px" width="23" height="19" viewBox="0 0 23 19"><path d="M1 2.5a1.5 1.5 0 0 1 1.5-1.5h6l2 2h10a1.5 1.5 0 0 1 1.5 1.5V17a1.5 1.5 0 0 1-1.5 1.5h-18A1.5 1.5 0 0 1 1 17z" fill="#4aa9e6"/><path d="M1 5.5h21V17a1.5 1.5 0 0 1-1.5 1.5h-18A1.5 1.5 0 0 1 1 17z" fill="#66bff4"/></svg>
<div class="ico" style="left:1824px;top:442.6px;width:90px">PureData_te</div>
<div class="ico" style="left:1824px;top:455.9px;width:90px">st</div>
<svg style="position:absolute;left:1858px;top:486px" width="23" height="19" viewBox="0 0 23 19"><path d="M1 2.5a1.5 1.5 0 0 1 1.5-1.5h6l2 2h10a1.5 1.5 0 0 1 1.5 1.5V17a1.5 1.5 0 0 1-1.5 1.5h-18A1.5 1.5 0 0 1 1 17z" fill="#4aa9e6"/><path d="M1 5.5h21V17a1.5 1.5 0 0 1-1.5 1.5h-18A1.5 1.5 0 0 1 1 17z" fill="#66bff4"/><path d="M2 17l3-2v3z" fill="#fff" stroke="#333" stroke-width=".5"/></svg>
<div class="ico" style="left:1824px;top:510.2px;width:90px">実験中</div>
<div style="position:absolute;left:1917px;top:88px;width:3px;height:4px;background:#e8e8e8"></div>
<svg style="position:absolute;left:1876px;top:530px" width="8" height="10"><path d="M1 1v7l2-2 2 3 1-.5-2-3h3z" fill="#fff"/></svg><div class="mb">
<svg style="position:absolute;left:20px;top:3px" width="15" height="17" viewBox="0 0 15 17"><path d="M10.6 0c.1 1.1-.3 2.2-1 3-.7.8-1.7 1.3-2.7 1.2-.1-1.1.4-2.2 1-2.9C8.6.5 9.7 0 10.6 0zM13.9 12.2c-.4 1-.6 1.4-1.1 2.2-.7 1.1-1.7 2.5-3 2.5-1.1 0-1.4-.7-2.9-.7-1.5 0-1.9.7-3 .7-1.3 0-2.2-1.2-2.9-2.3C-.9 11.5-1.1 7.9.1 5.9c.9-1.4 2.3-2.3 3.6-2.3 1.4 0 2.2.7 3.3.7 1.1 0 1.8-.8 3.3-.8 1.2 0 2.4.6 3.3 1.7-2.9 1.6-2.4 5.7.3 7z" fill="#000"/></svg>
<span style="left:54px;font-weight:bold">Finder</span>
<span style="left:116px">File</span>
<span style="left:157px">Edit</span>
<span style="left:200px">View</span>
<span style="left:250px">Go</span>
<span style="left:287px">Window</span>
<span style="left:357px">Help</span>
<span style="left:1779px">日 15:45</span>
<svg style="position:absolute;left:1590px;top:0" width="320" height="22" viewBox="0 0 320 22"><path d="M9 15H8.5V4.5h17V15H25" fill="none" stroke="#111" stroke-width="1.4"/><path d="M11 18.5l6-6 6 6z" fill="#111"/><circle cx="48" cy="11" r="7" fill="none" stroke="#222" stroke-width="1.3"/><path d="M48 6.5v5h3" fill="none" stroke="#222" stroke-width="1.2"/><path d="M38 9l3 3 3-3z" fill="#222"/><path d="M73 7l5 8-2.5 2.5V4.5L78 7l-5 8" fill="none" stroke="#9a9a9a" stroke-width="1.1"/><path d="M107.5 16.5L98 8a14 14 0 0 1 19 0z" fill="none" stroke="#111" stroke-width="1.4" stroke-linejoin="round"/><rect x="130" y="3" width="16" height="16" rx="2" fill="#111"/><text x="138" y="16" font-family="Liberation Sans" font-size="13" fill="#fff" text-anchor="middle">A</text><path d="M158 8.5h3l4-3.5v12l-4-3.5h-3z" fill="#111"/><path d="M168 8a4 4 0 0 1 0 6M171 6a7 7 0 0 1 0 10M174 4a10 10 0 0 1 0 14" fill="none" stroke="#111" stroke-width="1.3"/><circle cx="265" cy="10" r="4.6" fill="none" stroke="#111" stroke-width="1.5"/><path d="M268.5 13.5l4 4" stroke="#111" stroke-width="1.7"/><path d="M290 6h2M290 11h2M290 16h2M294 6h12M294 11h12M294 16h12" stroke="#111" stroke-width="2"/></svg></div>

<div class="win" style="left:0px;top:27px;width:392px;height:1008px">
<div class="rows" style="width:392px;height:940px">
<div class="r g" style="top:0px"><b class="td" style="left:8px"></b><i class="fd" style="left:26px"></i><span class="nm" style="left:48.5px">12PBG4_backup20111026</span><span class="sz" style="right:125.5px">26.18 GB</span><span class="dt" style="left:292.6px">2011/10/26</span></div>
<div class="r" style="top:17px"><b class="tr" style="left:30px"></b><i class="fd" style="left:47px"></i><span class="nm" style="left:69.5px">Documents</span><span class="sz" style="right:125.5px">649.4 MB</span><span class="dt" style="left:292.6px">2011/09/10</span></div>
<div class="r g" style="top:34px"><b class="tr" style="left:30px"></b><i class="fd" style="left:47px"></i><span class="nm" style="left:69.5px">Library</span><span class="sz" style="right:125.5px">615 MB</span><span class="dt" style="left:292.6px">2010/11/27</span></div>
<div class="r" style="top:51px"><b class="tr" style="left:30px"></b><i class="fd" style="left:47px"></i><span class="nm" style="left:69.5px">MaxMSP</span><span class="sz" style="right:125.5px">7.31 GB</span><span class="dt" style="left:292.6px">2008/10/09</span></div>
<div class="r g" style="top:68px"><b class="tr" style="left:30px"></b><i class="fd" style="left:47px"></i><span class="nm" style="left:69.5px">Music</span><span class="sz" style="right:125.5px">2.92 GB</span><span class="dt" style="left:292.6px">2011/05/19</span></div>
<div class="r" style="top:85px"><b class="tr" style="left:30px"></b><i class="fd" style="left:47px"></i><span class="nm" style="left:69.5px">Pictures</span><span class="sz" style="right:125.5px">4.5 MB</span><span class="dt" style="left:292.6px">2011/10/26</span></div>
<div class="r g" style="top:102px"><b class="tr" style="left:30px"></b><i class="fd" style="left:47px"></i><span class="nm" style="left:69.5px">Presentation</span><span class="sz" style="right:125.5px">222.7 MB</span><span class="dt" style="left:292.6px">2008/10/14</span></div>
<div class="r" style="top:119px"><b class="tr" style="left:30px"></b><i class="fd" style="left:47px"></i><span class="nm" style="left:69.5px">Projects</span><span class="sz" style="right:125.5px">1.29 GB</span><span class="dt" style="left:292.6px">2011/10/26</span></div>
<div class="r g" style="top:136px"><b class="tr" style="left:30px"></b><i class="fd" style="left:47px"></i><span class="nm" style="left:69.5px"><span class="j">学生</span>Web<span class="j">作品</span></span><span class="sz" style="right:125.5px">702.2 MB</span><span class="dt" style="left:292.6px">2009/10/21</span></div>
<div class="r" style="top:153px"><b class="tr" style="left:30px"></b><i class="fd" style="left:47px"></i><span class="nm" style="left:69.5px"><span class="j">講義資料</span></span><span class="sz" style="right:125.5px">12.46 GB</span><span class="dt" style="left:292.6px">2011/10/14</span></div>
<div class="r g" style="top:170px"><b class="tr" style="left:9px"></b><i class="fd" style="left:26px"></i><span class="nm" style="left:48.5px">backup20111031</span><span class="sz" style="right:125.5px">2.24 GB</span><span class="dt" style="left:292.6px">2011/10/31</span></div>
<div class="r" style="top:187px"><b class="tr" style="left:9px"></b><i class="fd" style="left:26px"></i><span class="nm" style="left:48.5px">footage_firm</span><span class="sz" style="right:125.5px">152.29 GB</span><span class="dt" style="left:292.6px">2012/09/14</span></div>
<div class="r g" style="top:204px"><b class="tr" style="left:9px"></b><i class="fd" style="left:26px"></i><span class="nm" style="left:48.5px">iPodCopy_area</span><span class="sz" style="right:125.5px">2.74 GB</span><span class="dt" style="left:292.6px">2010/08/21</span></div>
<div class="r" style="top:221px"><b class="tr" style="left:9px"></b><i class="fd" style="left:26px"></i><span class="nm" style="left:48.5px">MMroom_backup20130604</span><span class="sz" style="right:125.5px">42.92 GB</span><span class="dt" style="left:292.6px">2013/08/02</span></div>
<div class="r g" style="top:238px"><b class="tr" style="left:9px"></b><i class="fd" style="left:26px"></i><span class="nm" style="left:48.5px">OpenCampus2013_iPad</span><span class="sz" style="right:125.5px">10.91 GB</span><span class="dt" style="left:292.6px">2013/08/02</span></div>
<div class="r" style="top:255px"><b class="td" style="left:8px"></b><i class="fd" style="left:26px"></i><span class="nm" style="left:48.5px">USB_20130604</span><span class="sz" style="right:125.5px">914.9 MB</span><span class="dt" style="left:292.6px">2013/06/04</span></div>
<div class="r g" style="top:272px"><svg class="ic" style="left:48.5px;top:0" width="13" height="17"><use href="#zip"/></svg><span class="nm" style="left:69.5px">20130604.zip</span><span class="sz" style="right:125.5px">23.2 MB</span><span class="dt" style="left:292.6px">2013/06/04</span></div>
<div class="r" style="top:289px"><b class="tr" style="left:30px"></b><i class="fd" style="left:47px"></i><span class="nm" style="left:69.5px">nagasm_GarageBand</span><span class="sz" style="right:125.5px">73.7 MB</span><span class="dt" style="left:292.6px">2013/06/04</span></div>
<div class="r g" style="top:306px"><b class="tr" style="left:30px"></b><i class="fd" style="left:47px"></i><span class="nm" style="left:69.5px">PrincessGhibri_aiff</span><span class="sz" style="right:125.5px">331.7 MB</span><span class="dt" style="left:292.6px">2013/06/01</span></div>
<div class="r" style="top:323px"><b class="tr" style="left:30px"></b><i class="fd" style="left:47px"></i><span class="nm" style="left:69.5px">RFID<span class="j">センサ</span></span><span class="sz" style="right:125.5px">325 KB</span><span class="dt" style="left:292.6px">2013/05/27</span></div>
<div class="r g" style="top:340px"><b class="tr" style="left:30px"></b><i class="fd" style="left:47px"></i><span class="nm" style="left:69.5px">sketching2...resentation</span><span class="sz" style="right:125.5px">173.5 MB</span><span class="dt" style="left:292.6px">2013/06/03</span></div>
<div class="r" style="top:357px"><svg class="ic" style="left:47px;top:0" width="17" height="17"><use href="#max"/></svg><span class="nm" style="left:69.5px">tosaya_01.maxpat</span><span class="sz" style="right:125.5px">72 KB</span><span class="dt" style="left:292.6px">2013/05/26</span></div>
<div class="r g" style="top:374px"><svg class="ic" style="left:48.5px;top:0" width="13" height="17"><use href="#doc"/></svg><span class="nm" style="left:69.5px">VNC-5.0.5...indows.exe</span><span class="sz" style="right:125.5px">7.2 MB</span><span class="dt" style="left:292.6px">2013/05/29</span></div>
<div class="r" style="top:391px"><svg class="ic" style="left:47px;top:0" width="17" height="17"><use href="#txt"/></svg><span class="nm" style="left:69.5px">VNC.txt</span><span class="sz" style="right:125.5px">9 KB</span><span class="dt" style="left:292.6px">2013/05/31</span></div>
<div class="r g" style="top:408px"><b class="tr" style="left:30px"></b><i class="fd" style="left:47px"></i><span class="nm" style="left:69.5px">Wii<span class="j">リモコン</span></span><span class="sz" style="right:125.5px">94 KB</span><span class="dt" style="left:292.6px">2013/06/03</span></div>
<div class="r" style="top:425px"><b class="tr" style="left:30px"></b><i class="fd" style="left:47px"></i><span class="nm" style="left:69.5px"><span class="j">山口・学生時代</span></span><span class="sz" style="right:125.5px">97.7 MB</span><span class="dt" style="left:292.6px">2013/06/04</span></div>
<div class="r g" style="top:442px"><b class="tr" style="left:30px"></b><i class="fd" style="left:47px"></i><span class="nm" style="left:69.5px"><span class="j">山口・顕微鏡</span></span><span class="sz" style="right:125.5px">160.5 MB</span><span class="dt" style="left:292.6px">2013/06/04</span></div>
<div class="r" style="top:459px"><b class="tr" style="left:30px"></b><i class="fd" style="left:47px"></i><span class="nm" style="left:69.5px"><span class="j">山口・風見屏風</span></span><span class="sz" style="right:125.5px">490 KB</span><span class="dt" style="left:292.6px">2013/06/04</span></div>
<div class="r g" style="top:476px"><b class="tr" style="left:30px"></b><i class="fd" style="left:47px"></i><span class="nm" style="left:69.5px"><span class="j">山口翔</span>_CM<span class="j">仕事</span></span><span class="sz" style="right:125.5px">46.5 MB</span><span class="dt" style="left:292.6px">2013/06/04</span></div>
<div class="r" style="top:493px"><b class="tr" style="left:30px"></b><i class="fd" style="left:47px"></i><span class="nm" style="left:69.5px"><span class="j">色センサ</span></span><span class="sz" style="right:125.5px">36 KB</span><span class="dt" style="left:292.6px">2013/06/03</span></div>
<div class="r g" style="top:510px"><b class="td" style="left:8px"></b><i class="fd" style="left:26px"></i><span class="nm" style="left:48.5px">USB_sticks_backup</span><span class="sz" style="right:125.5px">162.56 GB</span><span class="dt" style="left:292.6px">2012/02/29</span></div>
<div class="r" style="top:527px"><b class="tr" style="left:30px"></b><i class="fd" style="left:47px"></i><span class="nm" style="left:69.5px">USB_Backup-01_1</span><span class="sz" style="right:125.5px">15.07 GB</span><span class="dt" style="left:292.6px">2011/05/11</span></div>
<div class="r g" style="top:544px"><b class="tr" style="left:30px"></b><i class="fd" style="left:47px"></i><span class="nm" style="left:69.5px">USB_dog_8GB_1</span><span class="sz" style="right:125.5px">5.99 GB</span><span class="dt" style="left:292.6px">2011/05/11</span></div>
<div class="r" style="top:561px"><b class="tr" style="left:30px"></b><i class="fd" style="left:47px"></i><span class="nm" style="left:69.5px">USB_DOS_8GB_1</span><span class="sz" style="right:125.5px">7.23 GB</span><span class="dt" style="left:292.6px">2011/05/11</span></div>
<div class="r g" style="top:578px"><b class="tr" style="left:30px"></b><i class="fd" style="left:47px"></i><span class="nm" style="left:69.5px">USB_DOS_8GB_2</span><span class="sz" style="right:125.5px">1.92 GB</span><span class="dt" style="left:292.6px">2016/06/26</span></div>
<div class="r" style="top:595px"><b class="tr" style="left:30px"></b><i class="fd" style="left:47px"></i><span class="nm" style="left:69.5px">USB_DOS_16GB_1</span><span class="sz" style="right:125.5px">7.55 GB</span><span class="dt" style="left:292.6px">2016/06/26</span></div>
<div class="r g" style="top:612px"><b class="tr" style="left:30px"></b><i class="fd" style="left:47px"></i><span class="nm" style="left:69.5px">USB_EC2010_1</span><span class="sz" style="right:125.5px">3.36 GB</span><span class="dt" style="left:292.6px">2011/05/02</span></div>
<div class="r" style="top:629px"><b class="tr" style="left:30px"></b><i class="fd" style="left:47px"></i><span class="nm" style="left:69.5px">USB_EC2010_2</span><span class="sz" style="right:125.5px">3.2 GB</span><span class="dt" style="left:292.6px">2016/06/26</span></div>
<div class="r g" style="top:646px"><b class="tr" style="left:30px"></b><i class="fd" style="left:47px"></i><span class="nm" style="left:69.5px">USB_etc_1</span><span class="sz" style="right:125.5px">6.95 GB</span><span class="dt" style="left:292.6px">2016/06/26</span></div>
<div class="r" style="top:663px"><b class="tr" style="left:30px"></b><i class="fd" style="left:47px"></i><span class="nm" style="left:69.5px">USB_FIX_2</span><span class="sz" style="right:125.5px">6.49 GB</span><span class="dt" style="left:292.6px">2016/06/26</span></div>
<div class="r g" style="top:680px"><b class="tr" style="left:30px"></b><i class="fd" style="left:47px"></i><span class="nm" style="left:69.5px">USB_FIX_3</span><span class="sz" style="right:125.5px">6.44 GB</span><span class="dt" style="left:292.6px">2012/01/31</span></div>
<div class="r" style="top:697px"><b class="tr" style="left:30px"></b><i class="fd" style="left:47px"></i><span class="nm" style="left:69.5px">USB_Max_1</span><span class="sz" style="right:125.5px">7.24 GB</span><span class="dt" style="left:292.6px">2016/06/26</span></div>
<div class="r g" style="top:714px"><b class="tr" style="left:30px"></b><i class="fd" style="left:47px"></i><span class="nm" style="left:69.5px">USB_RS_1</span><span class="sz" style="right:125.5px">1.71 GB</span><span class="dt" style="left:292.6px">2016/06/26</span></div>
<div class="r" style="top:731px"><b class="tr" style="left:30px"></b><i class="fd" style="left:47px"></i><span class="nm" style="left:69.5px">USB_Sony256_1</span><span class="sz" style="right:125.5px">216.9 MB</span><span class="dt" style="left:292.6px">2016/06/26</span></div>
<div class="r g" style="top:748px"><b class="tr" style="left:30px"></b><i class="fd" style="left:47px"></i><span class="nm" style="left:69.5px">USB_work2_1</span><span class="sz" style="right:125.5px">3.41 GB</span><span class="dt" style="left:292.6px">2016/06/26</span></div>
<div class="r" style="top:765px"><b class="tr" style="left:30px"></b><i class="fd" style="left:47px"></i><span class="nm" style="left:69.5px">USB_work4_1</span><span class="sz" style="right:125.5px">15.82 GB</span><span class="dt" style="left:292.6px">2011/05/25</span></div>
<div class="r g" style="top:782px"><b class="tr" style="left:30px"></b><i class="fd" style="left:47px"></i><span class="nm" style="left:69.5px">USB_work4_2</span><span class="sz" style="right:125.5px">14.19 GB</span><span class="dt" style="left:292.6px">2016/06/26</span></div>
<div class="r" style="top:799px"><b class="tr" style="left:30px"></b><i class="fd" style="left:47px"></i><span class="nm" style="left:69.5px">USB_work4_3</span><span class="sz" style="right:125.5px">10.87 GB</span><span class="dt" style="left:292.6px">2016/06/26</span></div>
<div class="r g" style="top:816px"><b class="tr" style="left:30px"></b><i class="fd" style="left:47px"></i><span class="nm" style="left:69.5px">USB_work5_1</span><span class="sz" style="right:125.5px">15.59 GB</span><span class="dt" style="left:292.6px">2016/06/26</span></div>
<div class="r" style="top:833px"><b class="tr" style="left:30px"></b><i class="fd" style="left:47px"></i><span class="nm" style="left:69.5px">USB_work5_2</span><span class="sz" style="right:125.5px">5.63 GB</span><span class="dt" style="left:292.6px">2016/06/26</span></div>
<div class="r g" style="top:850px"><b class="tr" style="left:30px"></b><i class="fd" style="left:47px"></i><span class="nm" style="left:69.5px">USB_yellow_1</span><span class="sz" style="right:125.5px">10.24 GB</span><span class="dt" style="left:292.6px">2016/06/26</span></div>
<div class="r" style="top:867px"><b class="tr" style="left:30px"></b><i class="fd" style="left:47px"></i><span class="nm" style="left:69.5px">USB_yellow_2</span><span class="sz" style="right:125.5px">5.68 GB</span><span class="dt" style="left:292.6px">2016/06/26</span></div>
<div class="r g" style="top:884px"><b class="tr" style="left:30px"></b><i class="fd" style="left:47px"></i><span class="nm" style="left:69.5px">USB_ZIParchive_1</span><span class="sz" style="right:125.5px">7.74 GB</span><span class="dt" style="left:292.6px">2016/06/26</span></div>
<div class="r g" style="top:918px"></div>
</div>
<div class="tb"><i class="tl" style="left:8px"></i><i class="tl" style="left:28px"></i><i class="tl" style="left:48px"></i><div class="tt"><i class="tdrv"></i><span>500GBwork16</span></div></div>
<div class="sl"><span>53 items, 96.62 GB available</span></div>
<div class="hd"><span class="hn">Name</span><i class="ar" style="left:184.5px"></i><i class="dv" style="left:200.5px"></i><span class="hs" style="right:125.5px">Size</span><i class="dv" style="left:280.6px"></i><span class="hdm" style="left:292.6px">Date Modified</span></div>
</div>
<div class="win" style="left:398px;top:27px;width:410px;height:809px">
<div class="rows" style="width:410px;height:741px">
<div class="r g" style="top:0px"><b class="tr" style="left:9px"></b><i class="fd" style="left:26px"></i><span class="nm" style="left:48.5px">23<span class="j">虎</span>backup</span><span class="sz" style="right:114.5px">770.7 MB</span><span class="dt" style="left:321.5px">2011/08/23</span></div>
<div class="r" style="top:17px"><b class="tr" style="left:9px"></b><i class="fd" style="left:26px"></i><span class="nm" style="left:48.5px">41tora_all</span><span class="sz" style="right:114.5px">22.59 GB</span><span class="dt" style="left:321.5px">2018/05/10</span></div>
<div class="r g" style="top:34px"><b class="tr" style="left:9px"></b><i class="fd" style="left:26px"></i><span class="nm" style="left:48.5px">370GB_backup</span><span class="sz" style="right:114.5px">18.34 GB</span><span class="dt" style="left:321.5px">2011/01/13</span></div>
<div class="r" style="top:51px"><b class="tr" style="left:9px"></b><i class="fd" style="left:26px"></i><span class="nm" style="left:48.5px">BackupDVD01-35</span><span class="sz" style="right:114.5px">127.51 GB</span><span class="dt" style="left:321.5px">2009/06/02</span></div>
<div class="r g" style="top:68px"><b class="tr" style="left:9px"></b><i class="fd" style="left:26px"></i><span class="nm" style="left:48.5px">BackupDVDRAM</span><span class="sz" style="right:114.5px">91.47 GB</span><span class="dt" style="left:321.5px">2011/08/23</span></div>
<div class="r" style="top:85px"><b class="tr" style="left:9px"></b><i class="fd" style="left:26px"></i><span class="nm" style="left:48.5px">DVDROMbackup</span><span class="sz" style="right:114.5px">6.89 GB</span><span class="dt" style="left:321.5px">2006/11/06</span></div>
<div class="r g" style="top:102px"><b class="td" style="left:8px"></b><i class="fd" style="left:26px"></i><span class="nm" style="left:48.5px">HD-backup</span><span class="sz" style="right:114.5px">185.17 GB</span><span class="dt" style="left:321.5px">2015/12/10</span></div>
<div class="r" style="top:119px"><svg class="ic" style="left:46.5px;top:0" width="17" height="17"><use href="#sit"/></svg><span class="nm" style="left:69.5px">20060128-iBook2.sit</span><span class="sz" style="right:114.5px">763.8 MB</span><span class="dt" style="left:321.5px">2009/05/27</span></div>
<div class="r g" style="top:136px"><svg class="ic" style="left:48.5px;top:0" width="13" height="17"><use href="#zip"/></svg><span class="nm" style="left:69.5px">20060203-G4PB12.zip</span><span class="sz" style="right:114.5px">6.05 GB</span><span class="dt" style="left:321.5px">2009/05/27</span></div>
<div class="r" style="top:153px"><svg class="ic" style="left:48.5px;top:0" width="13" height="17"><use href="#zip"/></svg><span class="nm" style="left:69.5px">20060206-iBook1.zip</span><span class="sz" style="right:114.5px">7.16 GB</span><span class="dt" style="left:321.5px">2009/05/27</span></div>
<div class="r g" style="top:170px"><svg class="ic" style="left:48.5px;top:0" width="13" height="17"><use href="#zip"/></svg><span class="nm" style="left:69.5px">20060219-G4PB12inch.zip</span><span class="sz" style="right:114.5px">16.04 GB</span><span class="dt" style="left:321.5px">2009/05/27</span></div>
<div class="r" style="top:187px"><svg class="ic" style="left:48.5px;top:0" width="13" height="17"><use href="#zip"/></svg><span class="nm" style="left:69.5px">20060219-G4PB15inch.zip</span><span class="sz" style="right:114.5px">6.05 GB</span><span class="dt" style="left:321.5px">2009/05/28</span></div>
<div class="r g" style="top:204px"><svg class="ic" style="left:48.5px;top:0" width="13" height="17"><use href="#zip"/></svg><span class="nm" style="left:69.5px">20060219-iBookG4_1.zip</span><span class="sz" style="right:114.5px">1.92 GB</span><span class="dt" style="left:321.5px">2009/05/28</span></div>
<div class="r" style="top:221px"><svg class="ic" style="left:48.5px;top:0" width="13" height="17"><use href="#zip"/></svg><span class="nm" style="left:69.5px">20060219-iBookG4_2.zip</span><span class="sz" style="right:114.5px">1.27 GB</span><span class="dt" style="left:321.5px">2009/05/28</span></div>
<div class="r g" style="top:238px"><svg class="ic" style="left:48.5px;top:0" width="13" height="17"><use href="#zip"/></svg><span class="nm" style="left:69.5px">20060730-HD1.zip</span><span class="sz" style="right:114.5px">3.62 GB</span><span class="dt" style="left:321.5px">2009/05/28</span></div>
<div class="r" style="top:255px"><svg class="ic" style="left:48.5px;top:0" width="13" height="17"><use href="#zip"/></svg><span class="nm" style="left:69.5px">20060730-HD2.zip</span><span class="sz" style="right:114.5px">30.05 GB</span><span class="dt" style="left:321.5px">2009/05/28</span></div>
<div class="r g" style="top:272px"><svg class="ic" style="left:48.5px;top:0" width="13" height="17"><use href="#zip"/></svg><span class="nm" style="left:69.5px">HD-backup2006a.zip</span><span class="sz" style="right:114.5px">22.53 GB</span><span class="dt" style="left:321.5px">2009/05/29</span></div>
<div class="r" style="top:289px"><svg class="ic" style="left:48.5px;top:0" width="13" height="17"><use href="#zip"/></svg><span class="nm" style="left:69.5px">HD-backup2006b.zip</span><span class="sz" style="right:114.5px">23 GB</span><span class="dt" style="left:321.5px">2009/05/29</span></div>
<div class="r g" style="top:306px"><svg class="ic" style="left:48.5px;top:0" width="13" height="17"><use href="#zip"/></svg><span class="nm" style="left:69.5px">HD-backup2006c.zip</span><span class="sz" style="right:114.5px">15.21 GB</span><span class="dt" style="left:321.5px">2009/05/29</span></div>
<div class="r" style="top:323px"><svg class="ic" style="left:48.5px;top:0" width="13" height="17"><use href="#zip"/></svg><span class="nm" style="left:69.5px">HD-backup2007a.zip</span><span class="sz" style="right:114.5px">32.64 GB</span><span class="dt" style="left:321.5px">2009/05/29</span></div>
<div class="r g" style="top:340px"><svg class="ic" style="left:48.5px;top:0" width="13" height="17"><use href="#zip"/></svg><span class="nm" style="left:69.5px">HD-backup2007b.zip</span><span class="sz" style="right:114.5px">18.87 GB</span><span class="dt" style="left:321.5px">2009/05/30</span></div>
<div class="r" style="top:357px"><b class="tr" style="left:9px"></b><i class="fd" style="left:26px"></i><span class="nm" style="left:48.5px">iPad_M4V</span><span class="sz" style="right:114.5px">192.48 GB</span><span class="dt" style="left:321.5px">2018/05/10</span></div>
<div class="r g" style="top:374px"><b class="tr" style="left:9px"></b><i class="fd" style="left:26px"></i><span class="nm" style="left:48.5px">iPad_<span class="j">実機搭載版</span></span><span class="sz" style="right:114.5px">115.35 GB</span><span class="dt" style="left:321.5px">2011/06/30</span></div>
<div class="r" style="top:391px"><b class="tr" style="left:9px"></b><i class="fd" style="left:26px"></i><span class="nm" style="left:48.5px">Library_01</span><span class="sz" style="right:114.5px">4.45 GB</span><span class="dt" style="left:321.5px">2006/07/30</span></div>
<div class="r g" style="top:408px"><b class="tr" style="left:9px"></b><i class="fd" style="left:26px"></i><span class="nm" style="left:48.5px">Library_02</span><span class="sz" style="right:114.5px">4.39 GB</span><span class="dt" style="left:321.5px">2006/07/30</span></div>
<div class="r" style="top:425px"><b class="tr" style="left:9px"></b><i class="fd" style="left:26px"></i><span class="nm" style="left:48.5px">Library_03</span><span class="sz" style="right:114.5px">4.42 GB</span><span class="dt" style="left:321.5px">2009/02/02</span></div>
<div class="r g" style="top:442px"><b class="tr" style="left:9px"></b><i class="fd" style="left:26px"></i><span class="nm" style="left:48.5px">MM<span class="j">室</span>archive2006-2019<span class="j">前期</span></span><span class="sz" style="right:114.5px">28.16 GB</span><span class="dt" style="left:321.5px">2019/07/03</span></div>
<div class="r" style="top:459px"><b class="tr" style="left:9px"></b><i class="fd" style="left:26px"></i><span class="nm" style="left:48.5px">MovieBackupDVD1-6</span><span class="sz" style="right:114.5px">22.31 GB</span><span class="dt" style="left:321.5px">2005/05/16</span></div>
<div class="r g" style="top:476px"><b class="tr" style="left:9px"></b><i class="fd" style="left:26px"></i><span class="nm" style="left:48.5px">NIME04<span class="j">記録</span></span><span class="sz" style="right:114.5px">748.1 MB</span><span class="dt" style="left:321.5px">2016/05/13</span></div>
<div class="r" style="top:493px"><b class="tr" style="left:9px"></b><i class="fd" style="left:26px"></i><span class="nm" style="left:48.5px">NIME05<span class="j">記録</span></span><span class="sz" style="right:114.5px">6.42 GB</span><span class="dt" style="left:321.5px">2005/07/27</span></div>
<div class="r g" style="top:510px"><b class="tr" style="left:9px"></b><i class="fd" style="left:26px"></i><span class="nm" style="left:48.5px">PhotoBank</span><span class="sz" style="right:114.5px">12.1 GB</span><span class="dt" style="left:321.5px">2018/06/27</span></div>
<div class="r" style="top:527px"><b class="td" style="left:8px"></b><i class="fd" style="left:26px"></i><span class="nm" style="left:48.5px">PowerBookG4backup</span><span class="sz" style="right:114.5px">17.67 GB</span><span class="dt" style="left:321.5px">2018/05/10</span></div>
<div class="r g" style="top:544px"><b class="tr" style="left:30px"></b><i class="fd" style="left:47px"></i><span class="nm" style="left:69.5px"><span class="j">学生</span>Web<span class="j">作品</span></span><span class="sz" style="right:114.5px">702.2 MB</span><span class="dt" style="left:321.5px">2009/10/21</span></div>
<div class="r" style="top:561px"><b class="tr" style="left:30px"></b><i class="fd" style="left:47px"></i><span class="nm" style="left:69.5px"><span class="j">講義資料</span></span><span class="sz" style="right:114.5px">16.96 GB</span><span class="dt" style="left:321.5px">2018/05/10</span></div>
<div class="r g" style="top:578px"><b class="tr" style="left:9px"></b><i class="fd" style="left:26px"></i><span class="nm" style="left:48.5px">Projects2006</span><span class="sz" style="right:114.5px">1.62 GB</span><span class="dt" style="left:321.5px">2007/01/07</span></div>
<div class="r" style="top:595px"><b class="tr" style="left:9px"></b><i class="fd" style="left:26px"></i><span class="nm" style="left:48.5px">Sabbatical2004<span class="j">記録</span></span><span class="sz" style="right:114.5px">30.08 GB</span><span class="dt" style="left:321.5px">2005/04/10</span></div>
<div class="r g" style="top:612px"><b class="tr" style="left:9px"></b><i class="fd" style="left:26px"></i><span class="nm" style="left:48.5px">TBMB</span><span class="sz" style="right:114.5px">3.58 GB</span><span class="dt" style="left:321.5px">2008/10/03</span></div>
<div class="r" style="top:629px"><b class="tr" style="left:9px"></b><i class="fd" style="left:26px"></i><span class="nm" style="left:48.5px"><span class="j">動員箱</span></span><span class="sz" style="right:114.5px">418.9 MB</span><span class="dt" style="left:321.5px">2005/04/10</span></div>
<div class="r g" style="top:646px"><b class="tr" style="left:9px"></b><i class="fd" style="left:26px"></i><span class="nm" style="left:48.5px"><span class="j">映像実験</span>2003</span><span class="sz" style="right:114.5px">3.17 GB</span><span class="dt" style="left:321.5px">2005/04/16</span></div>
<div class="r" style="top:663px"><b class="tr" style="left:9px"></b><i class="fd" style="left:26px"></i><span class="nm" style="left:48.5px"><span class="j">素材</span>ProMotion</span><span class="sz" style="right:114.5px">8.57 GB</span><span class="dt" style="left:321.5px">2005/04/10</span></div>
<div class="r g" style="top:680px"><b class="tr" style="left:9px"></b><i class="fd" style="left:26px"></i><span class="nm" style="left:48.5px"><span class="j">素材辞典</span></span><span class="sz" style="right:114.5px">7.83 GB</span><span class="dt" style="left:321.5px">2016/05/13</span></div>
<div class="r" style="top:697px"><b class="tr" style="left:9px"></b><i class="fd" style="left:26px"></i><span class="nm" style="left:48.5px"><span class="j">音響</span>original<span class="j">素材</span></span><span class="sz" style="right:114.5px">3.5 GB</span><span class="dt" style="left:321.5px">2005/04/10</span></div>
<div class="r g" style="top:714px"></div>
</div>
<div class="tb"><i class="tl" style="left:8px"></i><i class="tl" style="left:28px"></i><i class="tl" style="left:48px"></i><div class="tt"><i class="tdrv"></i><span>1TB-1</span></div></div>
<div class="sl"><span>42 items, 75.26 GB available</span></div>
<div class="hd"><span class="hn">Name</span><i class="ar" style="left:210.7px"></i><i class="dv" style="left:226.5px"></i><span class="hs" style="right:114.5px">Size</span><i class="dv" style="left:309.5px"></i><span class="hdm" style="left:321.5px">Date Modified</span></div>
</div>
<div class="win" style="left:453px;top:859px;width:316px;height:243px">
<div class="rows" style="width:316px;height:175px">
<div class="r g" style="top:0px"><b class="tr" style="left:9px"></b><i class="fd" style="left:26px"></i><span class="nm" style="left:48.5px">backupDVD-1</span><span class="sz" style="right:14.4px">4.05 GB</span></div>
<div class="r" style="top:17px"><b class="tr" style="left:9px"></b><i class="fd" style="left:26px"></i><span class="nm" style="left:48.5px">backupDVD-2</span><span class="sz" style="right:14.4px">4.03 GB</span></div>
<div class="r g" style="top:34px"><b class="tr" style="left:9px"></b><i class="fd" style="left:26px"></i><span class="nm" style="left:48.5px">backupDVD-3</span><span class="sz" style="right:14.4px">3.58 GB</span></div>
<div class="r" style="top:51px"><b class="tr" style="left:9px"></b><i class="fd" style="left:26px"></i><span class="nm" style="left:48.5px">backupDVD-4</span><span class="sz" style="right:14.4px">3.22 GB</span></div>
<div class="r g" style="top:68px"><b class="tr" style="left:9px"></b><i class="fd" style="left:26px"></i><span class="nm" style="left:48.5px">backupDVD-5</span><span class="sz" style="right:14.4px">3.96 GB</span></div>
<div class="r" style="top:85px"><b class="tr" style="left:9px"></b><i class="fd" style="left:26px"></i><span class="nm" style="left:48.5px">backupDVD-6</span><span class="sz" style="right:14.4px">3.47 GB</span></div>
<div class="r g" style="top:102px"></div>
<div class="r g" style="top:136px"></div>
<div class="r g" style="top:170px"></div>
</div>
<div class="tb"><i class="tl" style="left:8px"></i><i class="tl" style="left:28px"></i><i class="tl" style="left:48px"></i><div class="tt"><i class="tfd"></i><span>MovieBackupDVD1-6</span></div></div>
<div class="sl"><span>6 items, 75.26 GB available</span></div>
<div class="hd"><span class="hn">Name</span><i class="ar" style="left:221px"></i><i class="dv" style="left:236.8px"></i><span class="hs" style="right:14.4px">Size</span></div>
</div>
<div class="win" style="left:814px;top:27px;width:323px;height:1122px">
<div class="rows" style="width:307.8px;height:1054px">
<div class="r g" style="top:0px"><b class="tr" style="left:9px"></b><i class="fd" style="left:26px"></i><span class="nm" style="left:48.5px"><span class="j">学生</span>Web<span class="j">作品</span></span><span class="sz" style="right:13.9px">702.2 MB</span></div>
<div class="r" style="top:17px"><b class="td" style="left:8px"></b><i class="fd" style="left:26px"></i><span class="nm" style="left:48.5px"><span class="j">講義資料</span></span><span class="sz" style="right:13.9px">16.96 GB</span></div>
<div class="r g" style="top:34px"><b class="td" style="left:29px"></b><i class="fd" style="left:47px"></i><span class="nm" style="left:69.5px">3<span class="j">回生・総合演習</span>I</span><span class="sz" style="right:13.9px">3.51 GB</span></div>
<div class="r" style="top:51px"><b class="tr" style="left:51px"></b><i class="fd" style="left:68px"></i><span class="nm" style="left:90.5px">4<span class="j">期生・総合演習</span>I<span class="j">最終</span></span><span class="sz" style="right:13.9px">294.2 MB</span></div>
<div class="r g" style="top:68px"><b class="tr" style="left:51px"></b><i class="fd" style="left:68px"></i><span class="nm" style="left:90.5px">5<span class="j">期生・総合演習</span>I<span class="j">プレ中間</span></span><span class="sz" style="right:13.9px">10.3 MB</span></div>
<div class="r" style="top:85px"><b class="tr" style="left:51px"></b><i class="fd" style="left:68px"></i><span class="nm" style="left:90.5px">5<span class="j">期生・総合演習</span>I<span class="j">中間</span></span><span class="sz" style="right:13.9px">3.7 MB</span></div>
<div class="r g" style="top:102px"><b class="tr" style="left:51px"></b><i class="fd" style="left:68px"></i><span class="nm" style="left:90.5px">5<span class="j">期生・総合演習</span>I<span class="j">最終</span></span><span class="sz" style="right:13.9px">29.8 MB</span></div>
<div class="r" style="top:119px"><b class="tr" style="left:51px"></b><i class="fd" style="left:68px"></i><span class="nm" style="left:90.5px">6<span class="j">期生・総合演習</span>I<span class="j">プレ中間</span></span><span class="sz" style="right:13.9px">10.8 MB</span></div>
<div class="r g" style="top:136px"><b class="tr" style="left:51px"></b><i class="fd" style="left:68px"></i><span class="nm" style="left:90.5px">6<span class="j">期生・総合演習</span>I<span class="j">プレ最終</span></span><span class="sz" style="right:13.9px">6.3 MB</span></div>
<div class="r" style="top:153px"><b class="tr" style="left:51px"></b><i class="fd" style="left:68px"></i><span class="nm" style="left:90.5px">6<span class="j">期生・総合演習</span>I<span class="j">中間</span></span><span class="sz" style="right:13.9px">11.6 MB</span></div>
<div class="r g" style="top:170px"><b class="tr" style="left:51px"></b><i class="fd" style="left:68px"></i><span class="nm" style="left:90.5px">6<span class="j">期生・総合演習</span>I<span class="j">最終</span></span><span class="sz" style="right:13.9px">107.5 MB</span></div>
<div class="r" style="top:187px"><b class="tr" style="left:51px"></b><i class="fd" style="left:68px"></i><span class="nm" style="left:90.5px">7<span class="j">期生・総合</span>...I<span class="j">プレプレ最終</span></span><span class="sz" style="right:13.9px">14.1 MB</span></div>
<div class="r g" style="top:204px"><b class="tr" style="left:51px"></b><i class="fd" style="left:68px"></i><span class="nm" style="left:90.5px">7<span class="j">期生・総合演習</span>I<span class="j">プレ中間</span></span><span class="sz" style="right:13.9px">13.2 MB</span></div>
<div class="r" style="top:221px"><b class="tr" style="left:51px"></b><i class="fd" style="left:68px"></i><span class="nm" style="left:90.5px">7<span class="j">期生・総合演習</span>I<span class="j">プレ最終</span></span><span class="sz" style="right:13.9px">13.4 MB</span></div>
<div class="r g" style="top:238px"><b class="tr" style="left:51px"></b><i class="fd" style="left:68px"></i><span class="nm" style="left:90.5px">7<span class="j">期生・総合演習</span>I<span class="j">中間</span></span><span class="sz" style="right:13.9px">20.6 MB</span></div>
<div class="r" style="top:255px"><b class="tr" style="left:51px"></b><i class="fd" style="left:68px"></i><span class="nm" style="left:90.5px">7<span class="j">期生・総合</span>...<span class="j">終コンテンツ</span></span><span class="sz" style="right:13.9px">53.3 MB</span></div>
<div class="r g" style="top:272px"><b class="tr" style="left:51px"></b><i class="fd" style="left:68px"></i><span class="nm" style="left:90.5px">7<span class="j">期生・総合</span>...I<span class="j">最終プレゼン</span></span><span class="sz" style="right:13.9px">9.3 MB</span></div>
<div class="r" style="top:289px"><b class="tr" style="left:51px"></b><i class="fd" style="left:68px"></i><span class="nm" style="left:90.5px">7<span class="j">期生・総合演習</span>I<span class="j">当初</span></span><span class="sz" style="right:13.9px">3.6 MB</span></div>
<div class="r g" style="top:306px"><b class="tr" style="left:51px"></b><i class="fd" style="left:68px"></i><span class="nm" style="left:90.5px">7<span class="j">期生・総合演習</span>I<span class="j">途中経過</span></span><span class="sz" style="right:13.9px">21.6 MB</span></div>
<div class="r" style="top:323px"><b class="tr" style="left:51px"></b><i class="fd" style="left:68px"></i><span class="nm" style="left:90.5px">8<span class="j">期生・総合演習</span>I<span class="j">プレ中間</span></span><span class="sz" style="right:13.9px">9.4 MB</span></div>
<div class="r g" style="top:340px"><b class="tr" style="left:51px"></b><i class="fd" style="left:68px"></i><span class="nm" style="left:90.5px">8<span class="j">期生・総合演習</span>I<span class="j">プレ最終</span></span><span class="sz" style="right:13.9px">110.7 MB</span></div>
<div class="r" style="top:357px"><b class="tr" style="left:51px"></b><i class="fd" style="left:68px"></i><span class="nm" style="left:90.5px">8<span class="j">期生・総合演習</span>I<span class="j">中間</span></span><span class="sz" style="right:13.9px">12.4 MB</span></div>
<div class="r g" style="top:374px"><b class="tr" style="left:51px"></b><i class="fd" style="left:68px"></i><span class="nm" style="left:90.5px">8<span class="j">期生・総合演習</span>I<span class="j">最終</span></span><span class="sz" style="right:13.9px">474.3 MB</span></div>
<div class="r" style="top:391px"><b class="tr" style="left:51px"></b><i class="fd" style="left:68px"></i><span class="nm" style="left:90.5px">8<span class="j">期生・総合演習</span>I<span class="j">途中経過</span></span><span class="sz" style="right:13.9px">503 MB</span></div>
<div class="r g" style="top:408px"><b class="tr" style="left:51px"></b><i class="fd" style="left:68px"></i><span class="nm" style="left:90.5px">9<span class="j">期生・総合演習</span>I<span class="j">プレ最終</span></span><span class="sz" style="right:13.9px">34.5 MB</span></div>
<div class="r" style="top:425px"><b class="tr" style="left:51px"></b><i class="fd" style="left:68px"></i><span class="nm" style="left:90.5px">9<span class="j">期生・総合演習</span>I<span class="j">最終</span></span><span class="sz" style="right:13.9px">8.9 MB</span></div>
<div class="r g" style="top:442px"><b class="tr" style="left:51px"></b><i class="fd" style="left:68px"></i><span class="nm" style="left:90.5px">9<span class="j">期生・総合演習</span>I<span class="j">途中経過</span></span><span class="sz" style="right:13.9px">158 KB</span></div>
<div class="r" style="top:459px"><b class="tr" style="left:51px"></b><i class="fd" style="left:68px"></i><span class="nm" style="left:90.5px">10<span class="j">期生・総合演習</span>I<span class="j">・中間</span></span><span class="sz" style="right:13.9px">52.6 MB</span></div>
<div class="r g" style="top:476px"><b class="tr" style="left:51px"></b><i class="fd" style="left:68px"></i><span class="nm" style="left:90.5px">10<span class="j">期生・総合演習</span>I<span class="j">・企画</span>I</span><span class="sz" style="right:13.9px">38 MB</span></div>
<div class="r" style="top:493px"><b class="tr" style="left:51px"></b><i class="fd" style="left:68px"></i><span class="nm" style="left:90.5px">10<span class="j">期生・総合演習</span>I<span class="j">・企画</span>II</span><span class="sz" style="right:13.9px">111.5 MB</span></div>
<div class="r g" style="top:510px"><b class="tr" style="left:51px"></b><i class="fd" style="left:68px"></i><span class="nm" style="left:90.5px">10<span class="j">期生・総</span>...<span class="j">習</span>I<span class="j">・企画最終</span></span><span class="sz" style="right:13.9px">84.3 MB</span></div>
<div class="r" style="top:527px"><b class="td" style="left:50px"></b><i class="fd" style="left:68px"></i><span class="nm" style="left:90.5px">10<span class="j">期生・総合演習</span>I<span class="j">・最終</span></span><span class="sz" style="right:13.9px">1.16 GB</span></div>
<div class="r g" style="top:544px"><b class="tr" style="left:72px"></b><i class="fd" style="left:89px"></i><span class="nm" style="left:111.5px"><span class="j">三瓶</span></span><span class="sz" style="right:13.9px">57.7 MB</span></div>
<div class="r" style="top:561px"><b class="tr" style="left:72px"></b><i class="fd" style="left:89px"></i><span class="nm" style="left:111.5px"><span class="j">伊原</span></span><span class="sz" style="right:13.9px">20.2 MB</span></div>
<div class="r g" style="top:578px"><b class="tr" style="left:72px"></b><i class="fd" style="left:89px"></i><span class="nm" style="left:111.5px"><span class="j">兼子</span></span><span class="sz" style="right:13.9px">14 MB</span></div>
<div class="r" style="top:595px"><b class="tr" style="left:72px"></b><i class="fd" style="left:89px"></i><span class="nm" style="left:111.5px"><span class="j">大橋</span></span><span class="sz" style="right:13.9px">6.4 MB</span></div>
<div class="r g" style="top:612px"><b class="tr" style="left:72px"></b><i class="fd" style="left:89px"></i><span class="nm" style="left:111.5px"><span class="j">奥山</span></span><span class="sz" style="right:13.9px">1.6 MB</span></div>
<div class="r" style="top:629px"><b class="tr" style="left:72px"></b><i class="fd" style="left:89px"></i><span class="nm" style="left:111.5px"><span class="j">川口</span></span><span class="sz" style="right:13.9px">1.03 GB</span></div>
<div class="r g" style="top:646px"><b class="tr" style="left:72px"></b><i class="fd" style="left:89px"></i><span class="nm" style="left:111.5px"><span class="j">平田</span></span><span class="sz" style="right:13.9px">7.1 MB</span></div>
<div class="r" style="top:663px"><b class="tr" style="left:72px"></b><i class="fd" style="left:89px"></i><span class="nm" style="left:111.5px"><span class="j">斉藤</span></span><span class="sz" style="right:13.9px">12.7 MB</span></div>
<div class="r g" style="top:680px"><b class="tr" style="left:72px"></b><i class="fd" style="left:89px"></i><span class="nm" style="left:111.5px"><span class="j">田中</span></span><span class="sz" style="right:13.9px">2.5 MB</span></div>
<div class="r" style="top:697px"><b class="td" style="left:71px"></b><i class="fd" style="left:89px"></i><span class="nm" style="left:111.5px"><span class="j">福田</span></span><span class="sz" style="right:13.9px">1.3 MB</span></div>
<div class="r g" style="top:714px"><svg class="ic" style="left:110px;top:0" width="17" height="17"><use href="#swf"/></svg><span class="nm" style="left:132.5px"><span class="j">最終プレゼン</span>.swf</span><span class="sz" style="right:13.9px">1.3 MB</span></div>
<div class="r" style="top:731px"><b class="tr" style="left:72px"></b><i class="fd" style="left:89px"></i><span class="nm" style="left:111.5px"><span class="j">鈴木</span></span><span class="sz" style="right:13.9px">853 KB</span></div>
<div class="r g" style="top:748px"><b class="tr" style="left:72px"></b><i class="fd" style="left:89px"></i><span class="nm" style="left:111.5px"><span class="j">高橋</span></span><span class="sz" style="right:13.9px">6.7 MB</span></div>
<div class="r" style="top:765px"><b class="tr" style="left:51px"></b><i class="fd" style="left:68px"></i><span class="nm" style="left:90.5px">10<span class="j">期生・総合演習</span>I<span class="j">・経過</span></span><span class="sz" style="right:13.9px">174.1 MB</span></div>
<div class="r g" style="top:782px"><b class="tr" style="left:51px"></b><i class="fd" style="left:68px"></i><span class="nm" style="left:90.5px">10<span class="j">期生・総合演習</span>I<span class="j">・経過</span>2</span><span class="sz" style="right:13.9px">18.5 MB</span></div>
<div class="r" style="top:799px"><b class="tr" style="left:51px"></b><i class="fd" style="left:68px"></i><span class="nm" style="left:90.5px">10<span class="j">期生・総合演習</span>I<span class="j">・経過</span>3</span><span class="sz" style="right:13.9px">7.9 MB</span></div>
<div class="r g" style="top:816px"><b class="tr" style="left:51px"></b><i class="fd" style="left:68px"></i><span class="nm" style="left:90.5px">10<span class="j">期生・総合演習</span>I<span class="j">・経過</span>4</span><span class="sz" style="right:13.9px">40.7 MB</span></div>
<div class="r" style="top:833px"><b class="tr" style="left:51px"></b><i class="fd" style="left:68px"></i><span class="nm" style="left:90.5px">10<span class="j">期生・総合演習</span>I<span class="j">・経過</span>5</span><span class="sz" style="right:13.9px">34.4 MB</span></div>
<div class="r g" style="top:850px"><b class="tr" style="left:51px"></b><i class="fd" style="left:68px"></i><span class="nm" style="left:90.5px">12<span class="j">期生・総合演習</span>I<span class="j">・企画</span></span><span class="sz" style="right:13.9px">8.5 MB</span></div>
<div class="r" style="top:867px"><b class="tr" style="left:30px"></b><i class="fd" style="left:47px"></i><span class="nm" style="left:69.5px">4<span class="j">回生・卒業制作</span></span><span class="sz" style="right:13.9px">1.21 GB</span></div>
<div class="r g" style="top:884px"><b class="tr" style="left:30px"></b><i class="fd" style="left:47px"></i><span class="nm" style="left:69.5px">4<span class="j">回生・総合演習</span>II</span><span class="sz" style="right:13.9px">1.77 GB</span></div>
<div class="r" style="top:901px"><b class="tr" style="left:30px"></b><i class="fd" style="left:47px"></i><span class="nm" style="left:69.5px">EC2010Papers</span><span class="sz" style="right:13.9px">228.6 MB</span></div>
<div class="r g" style="top:918px"><b class="tr" style="left:30px"></b><i class="fd" style="left:47px"></i><span class="nm" style="left:69.5px">FLASH</span><span class="sz" style="right:13.9px">141.7 MB</span></div>
<div class="r" style="top:935px"><svg class="ic" style="left:46.5px;top:0" width="17" height="17"><use href="#sit"/></svg><span class="nm" style="left:69.5px">Icon_Bank.sit</span><span class="sz" style="right:13.9px">3.6 MB</span></div>
<div class="r g" style="top:952px"><b class="tr" style="left:30px"></b><i class="fd" style="left:47px"></i><span class="nm" style="left:69.5px">MIDI_Songs</span><span class="sz" style="right:13.9px">3.3 MB</span></div>
<div class="r" style="top:969px"><b class="tr" style="left:30px"></b><i class="fd" style="left:47px"></i><span class="nm" style="left:69.5px">Paper_Gundam</span><span class="sz" style="right:13.9px">60.5 MB</span></div>
<div class="r g" style="top:986px"><b class="tr" style="left:30px"></b><i class="fd" style="left:47px"></i><span class="nm" style="left:69.5px">pianoAIFF<span class="j">素材</span></span><span class="sz" style="right:13.9px">3.6 MB</span></div>
<div class="r" style="top:1003px"><b class="tr" style="left:30px"></b><i class="fd" style="left:47px"></i><span class="nm" style="left:69.5px">SUAC<span class="j">インスタレーション</span></span><span class="sz" style="right:13.9px">4.7 MB</span></div>
<div class="r g" style="top:1020px"><b class="tr" style="left:30px"></b><i class="fd" style="left:47px"></i><span class="nm" style="left:69.5px">vocalis2</span><span class="sz" style="right:13.9px">139.7 MB</span></div>
<div class="r" style="top:1037px"><b class="tr" style="left:30px"></b><i class="fd" style="left:47px"></i><span class="nm" style="left:69.5px"><span class="j">インターンシップ</span></span><span class="sz" style="right:13.9px">38.6 MB</span></div>
</div>
<div class="sb" style="left:307.8px;top:66px;width:15.2px;height:1056px"><div class="th" style="top:3px;height:988px"></div></div>
<div class="tb"><i class="tl" style="left:8px"></i><i class="tl" style="left:28px"></i><i class="tl" style="left:48px"></i><div class="tt"><i class="tfd"></i><span>PowerBookG4backup</span></div></div>
<div class="sl"><span>66 items, 75.26 GB available</span></div>
<div class="hd"><span class="hn">Name</span><i class="ar" style="left:212.6px"></i><i class="dv" style="left:228.6px"></i><span class="hs" style="right:29.1px">Size</span><i class="dv" style="left:307.8px"></i></div>
</div>
<div class="win" style="left:1143px;top:27px;width:316px;height:928px">
<div class="rows" style="width:316px;height:860px">
<div class="r g" style="top:0px"><svg class="ic" style="left:27.5px;top:0" width="13" height="17"><use href="#zip"/></svg><span class="nm" style="left:48.5px">backupDVD-001.zip</span><span class="sz" style="right:14.3px">2.72 GB</span></div>
<div class="r" style="top:17px"><svg class="ic" style="left:27.5px;top:0" width="13" height="17"><use href="#zip"/></svg><span class="nm" style="left:48.5px">backupDVD-002.zip</span><span class="sz" style="right:14.3px">3.36 GB</span></div>
<div class="r g" style="top:34px"><svg class="ic" style="left:27.5px;top:0" width="13" height="17"><use href="#zip"/></svg><span class="nm" style="left:48.5px">backupDVD-003.zip</span><span class="sz" style="right:14.3px">3.44 GB</span></div>
<div class="r" style="top:51px"><svg class="ic" style="left:27.5px;top:0" width="13" height="17"><use href="#zip"/></svg><span class="nm" style="left:48.5px">backupDVD-004.zip</span><span class="sz" style="right:14.3px">3.49 GB</span></div>
<div class="r g" style="top:68px"><svg class="ic" style="left:27.5px;top:0" width="13" height="17"><use href="#zip"/></svg><span class="nm" style="left:48.5px">backupDVD-005.zip</span><span class="sz" style="right:14.3px">3.65 GB</span></div>
<div class="r" style="top:85px"><svg class="ic" style="left:27.5px;top:0" width="13" height="17"><use href="#zip"/></svg><span class="nm" style="left:48.5px">backupDVD-006.zip</span><span class="sz" style="right:14.3px">3.24 GB</span></div>
<div class="r g" style="top:102px"><svg class="ic" style="left:27.5px;top:0" width="13" height="17"><use href="#zip"/></svg><span class="nm" style="left:48.5px">backupDVD-007.zip</span><span class="sz" style="right:14.3px">3.52 GB</span></div>
<div class="r" style="top:119px"><svg class="ic" style="left:27.5px;top:0" width="13" height="17"><use href="#zip"/></svg><span class="nm" style="left:48.5px">backupDVD-008.zip</span><span class="sz" style="right:14.3px">3.59 GB</span></div>
<div class="r g" style="top:136px"><svg class="ic" style="left:27.5px;top:0" width="13" height="17"><use href="#zip"/></svg><span class="nm" style="left:48.5px">backupDVD-009.zip</span><span class="sz" style="right:14.3px">3.3 GB</span></div>
<div class="r" style="top:153px"><svg class="ic" style="left:27.5px;top:0" width="13" height="17"><use href="#zip"/></svg><span class="nm" style="left:48.5px">backupDVD-010.zip</span><span class="sz" style="right:14.3px">3.55 GB</span></div>
<div class="r g" style="top:170px"><svg class="ic" style="left:27.5px;top:0" width="13" height="17"><use href="#zip"/></svg><span class="nm" style="left:48.5px">backupDVD-011.zip</span><span class="sz" style="right:14.3px">3.49 GB</span></div>
<div class="r" style="top:187px"><svg class="ic" style="left:27.5px;top:0" width="13" height="17"><use href="#zip"/></svg><span class="nm" style="left:48.5px">backupDVD-012.zip</span><span class="sz" style="right:14.3px">3.08 GB</span></div>
<div class="r g" style="top:204px"><svg class="ic" style="left:27.5px;top:0" width="13" height="17"><use href="#zip"/></svg><span class="nm" style="left:48.5px">backupDVD-013.zip</span><span class="sz" style="right:14.3px">3.61 GB</span></div>
<div class="r" style="top:221px"><b class="tr" style="left:9px"></b><i class="fd" style="left:26px"></i><span class="nm" style="left:48.5px">backupDVD-014</span><span class="sz" style="right:14.3px">3.79 GB</span></div>
<div class="r g" style="top:238px"><b class="tr" style="left:9px"></b><i class="fd" style="left:26px"></i><span class="nm" style="left:48.5px">backupDVD-015</span><span class="sz" style="right:14.3px">4.32 GB</span></div>
<div class="r" style="top:255px"><b class="tr" style="left:9px"></b><i class="fd" style="left:26px"></i><span class="nm" style="left:48.5px">backupDVD-016</span><span class="sz" style="right:14.3px">4.32 GB</span></div>
<div class="r g" style="top:272px"><b class="tr" style="left:9px"></b><i class="fd" style="left:26px"></i><span class="nm" style="left:48.5px">backupDVD-017</span><span class="sz" style="right:14.3px">4.38 GB</span></div>
<div class="r" style="top:289px"><svg class="ic" style="left:27.5px;top:0" width="13" height="17"><use href="#zip"/></svg><span class="nm" style="left:48.5px">backupDVD-018.zip</span><span class="sz" style="right:14.3px">3.07 GB</span></div>
<div class="r g" style="top:306px"><svg class="ic" style="left:27.5px;top:0" width="13" height="17"><use href="#zip"/></svg><span class="nm" style="left:48.5px">backupDVD-019.zip</span><span class="sz" style="right:14.3px">3.49 GB</span></div>
<div class="r" style="top:323px"><svg class="ic" style="left:27.5px;top:0" width="13" height="17"><use href="#zip"/></svg><span class="nm" style="left:48.5px">backupDVD-020.zip</span><span class="sz" style="right:14.3px">3.38 GB</span></div>
<div class="r g" style="top:340px"><svg class="ic" style="left:27.5px;top:0" width="13" height="17"><use href="#zip"/></svg><span class="nm" style="left:48.5px">backupDVD-021.zip</span><span class="sz" style="right:14.3px">3.66 GB</span></div>
<div class="r" style="top:357px"><svg class="ic" style="left:27.5px;top:0" width="13" height="17"><use href="#zip"/></svg><span class="nm" style="left:48.5px">backupDVD-022.zip</span><span class="sz" style="right:14.3px">3.97 GB</span></div>
<div class="r g" style="top:374px"><svg class="ic" style="left:27.5px;top:0" width="13" height="17"><use href="#zip"/></svg><span class="nm" style="left:48.5px">backupDVD-023.zip</span><span class="sz" style="right:14.3px">3.92 GB</span></div>
<div class="r" style="top:391px"><svg class="ic" style="left:27.5px;top:0" width="13" height="17"><use href="#zip"/></svg><span class="nm" style="left:48.5px">backupDVD-024.zip</span><span class="sz" style="right:14.3px">3.34 GB</span></div>
<div class="r g" style="top:408px"><svg class="ic" style="left:27.5px;top:0" width="13" height="17"><use href="#zip"/></svg><span class="nm" style="left:48.5px">backupDVD-025.zip</span><span class="sz" style="right:14.3px">3.83 GB</span></div>
<div class="r" style="top:425px"><b class="tr" style="left:9px"></b><i class="fd" style="left:26px"></i><span class="nm" style="left:48.5px">backupDVD-026</span><span class="sz" style="right:14.3px">4.39 GB</span></div>
<div class="r g" style="top:442px"><b class="tr" style="left:9px"></b><i class="fd" style="left:26px"></i><span class="nm" style="left:48.5px">backupDVD-027</span><span class="sz" style="right:14.3px">4.25 GB</span></div>
<div class="r" style="top:459px"><b class="td" style="left:8px"></b><i class="fd" style="left:26px"></i><span class="nm" style="left:48.5px">backupDVD-028</span><span class="sz" style="right:14.3px">4.14 GB</span></div>
<div class="r g" style="top:476px"><b class="tr" style="left:30px"></b><i class="fd" style="left:47px"></i><span class="nm" style="left:69.5px">Full Backup</span><span class="sz" style="right:14.3px">3.53 GB</span></div>
<div class="r" style="top:493px"><b class="tr" style="left:30px"></b><i class="fd" style="left:47px"></i><span class="nm" style="left:69.5px">Geo-Bank</span><span class="sz" style="right:14.3px">601.4 MB</span></div>
<div class="r g" style="top:510px"><svg class="ic" style="left:27.5px;top:0" width="13" height="17"><use href="#zip"/></svg><span class="nm" style="left:48.5px">backupDVD-029.zip</span><span class="sz" style="right:14.3px">3.54 GB</span></div>
<div class="r" style="top:527px"><b class="td" style="left:8px"></b><i class="fd" style="left:26px"></i><span class="nm" style="left:48.5px">backupDVD-030</span><span class="sz" style="right:14.3px">4.27 GB</span></div>
<div class="r g" style="top:544px"><b class="tr" style="left:30px"></b><i class="fd" style="left:47px"></i><span class="nm" style="left:69.5px">MAC-BackUp#1</span><span class="sz" style="right:14.3px">118.8 MB</span></div>
<div class="r" style="top:561px"><b class="tr" style="left:30px"></b><i class="fd" style="left:47px"></i><span class="nm" style="left:69.5px">MAC-BackUp#2</span><span class="sz" style="right:14.3px">116.4 MB</span></div>
<div class="r g" style="top:578px"><b class="tr" style="left:30px"></b><i class="fd" style="left:47px"></i><span class="nm" style="left:69.5px">MAC-BackUp#3</span><span class="sz" style="right:14.3px">59.6 MB</span></div>
<div class="r" style="top:595px"><b class="tr" style="left:30px"></b><i class="fd" style="left:47px"></i><span class="nm" style="left:69.5px">MAC-BackUp#4</span><span class="sz" style="right:14.3px">116.9 MB</span></div>
<div class="r g" style="top:612px"><b class="tr" style="left:30px"></b><i class="fd" style="left:47px"></i><span class="nm" style="left:69.5px"><span class="j">差分</span> Backup</span><span class="sz" style="right:14.3px">3.86 GB</span></div>
<div class="r" style="top:629px"><b class="td" style="left:8px"></b><i class="fd" style="left:26px"></i><span class="nm" style="left:48.5px">backupDVD-031</span><span class="sz" style="right:14.3px">4.29 GB</span></div>
<div class="r g" style="top:646px"><b class="tr" style="left:30px"></b><i class="fd" style="left:47px"></i><span class="nm" style="left:69.5px">iMac-BackUp MO</span><span class="sz" style="right:14.3px">802.9 MB</span></div>
<div class="r" style="top:663px"><b class="tr" style="left:30px"></b><i class="fd" style="left:47px"></i><span class="nm" style="left:69.5px">ooyama-org</span><span class="sz" style="right:14.3px">456.9 MB</span></div>
<div class="r g" style="top:680px"><b class="tr" style="left:30px"></b><i class="fd" style="left:47px"></i><span class="nm" style="left:69.5px">ooyama640</span><span class="sz" style="right:14.3px">25.1 MB</span></div>
<div class="r" style="top:697px"><b class="tr" style="left:30px"></b><i class="fd" style="left:47px"></i><span class="nm" style="left:69.5px">ooyama800</span><span class="sz" style="right:14.3px">39.1 MB</span></div>
<div class="r g" style="top:714px"><b class="tr" style="left:30px"></b><i class="fd" style="left:47px"></i><span class="nm" style="left:69.5px">PHOTO_bank</span><span class="sz" style="right:14.3px">1.27 GB</span></div>
<div class="r" style="top:731px"><b class="tr" style="left:30px"></b><i class="fd" style="left:47px"></i><span class="nm" style="left:69.5px"><span class="j">瞑想</span>PBine<span class="j">各氏</span></span><span class="sz" style="right:14.3px">1.4 GB</span></div>
<div class="r g" style="top:748px"><b class="tr" style="left:30px"></b><i class="fd" style="left:47px"></i><span class="nm" style="left:69.5px"><span class="j">瞑想</span>PB<span class="j">各氏</span></span><span class="sz" style="right:14.3px">290.3 MB</span></div>
<div class="r" style="top:765px"><b class="tr" style="left:9px"></b><i class="fd" style="left:26px"></i><span class="nm" style="left:48.5px">backupDVD-032</span><span class="sz" style="right:14.3px">4.21 GB</span></div>
<div class="r g" style="top:782px"><svg class="ic" style="left:27.5px;top:0" width="13" height="17"><use href="#zip"/></svg><span class="nm" style="left:48.5px">backupDVD-033.zip</span><span class="sz" style="right:14.3px">2.45 GB</span></div>
<div class="r" style="top:799px"><svg class="ic" style="left:27.5px;top:0" width="13" height="17"><use href="#zip"/></svg><span class="nm" style="left:48.5px">backupDVD-034.zip</span><span class="sz" style="right:14.3px">2.27 GB</span></div>
<div class="r g" style="top:816px"><b class="tr" style="left:9px"></b><i class="fd" style="left:26px"></i><span class="nm" style="left:48.5px">backupDVD-035</span><span class="sz" style="right:14.3px">4.21 GB</span></div>
<div class="r g" style="top:850px"></div>
</div>
<div class="tb"><i class="tl" style="left:8px"></i><i class="tl" style="left:28px"></i><i class="tl" style="left:48px"></i><div class="tt"><i class="tfd"></i><span>BackupDVD01-35</span></div></div>
<div class="sl"><span>49 items, 75.26 GB available</span></div>
<div class="hd"><span class="hn">Name</span><i class="ar" style="left:220.6px"></i><i class="dv" style="left:236.8px"></i><span class="hs" style="right:14.3px">Size</span></div>
</div>
<div class="win" style="left:1464px;top:27px;width:316px;height:531px">
<div class="rows" style="width:316px;height:463px">
<div class="r g" style="top:0px"><svg class="ic" style="left:27.5px;top:0" width="13" height="17"><use href="#zip"/></svg><span class="nm" style="left:48.5px">HD1backup-20020121.zip</span><span class="sz" style="right:47px">2.72 GB</span></div>
<div class="r" style="top:17px"><svg class="ic" style="left:27.5px;top:0" width="13" height="17"><use href="#zip"/></svg><span class="nm" style="left:48.5px">HD2backupA-20020121.zip</span><span class="sz" style="right:47px">482.1 MB</span></div>
<div class="r g" style="top:34px"><svg class="ic" style="left:27.5px;top:0" width="13" height="17"><use href="#zip"/></svg><span class="nm" style="left:48.5px">HD2backupB-20020122.zip</span><span class="sz" style="right:47px">2.81 GB</span></div>
<div class="r" style="top:51px"><svg class="ic" style="left:27.5px;top:0" width="13" height="17"><use href="#zip"/></svg><span class="nm" style="left:48.5px">HD2backupC-20020122.zip</span><span class="sz" style="right:47px">3.34 GB</span></div>
<div class="r g" style="top:68px"><svg class="ic" style="left:27.5px;top:0" width="13" height="17"><use href="#zip"/></svg><span class="nm" style="left:48.5px">HD2backupD-20020122.zip</span><span class="sz" style="right:47px">3.04 GB</span></div>
<div class="r" style="top:85px"><svg class="ic" style="left:27.5px;top:0" width="13" height="17"><use href="#zip"/></svg><span class="nm" style="left:48.5px">HD2backupE-20020122.zip</span><span class="sz" style="right:47px">3.31 GB</span></div>
<div class="r g" style="top:102px"><b class="tr" style="left:9px"></b><i class="fd" style="left:26px"></i><span class="nm" style="left:48.5px">Moya</span><span class="sz" style="right:47px">2.91 GB</span></div>
<div class="r" style="top:119px"><b class="tr" style="left:9px"></b><i class="fd" style="left:26px"></i><span class="nm" style="left:48.5px">Moya-BU</span><span class="sz" style="right:47px">3.98 GB</span></div>
<div class="r g" style="top:136px"><svg class="ic" style="left:27.5px;top:0" width="13" height="17"><use href="#zip"/></svg><span class="nm" style="left:48.5px"><span class="j">差分</span>backup-01.zip</span><span class="sz" style="right:47px">3.94 GB</span></div>
<div class="r" style="top:153px"><svg class="ic" style="left:27.5px;top:0" width="13" height="17"><use href="#zip"/></svg><span class="nm" style="left:48.5px"><span class="j">差分</span>backup-02.zip</span><span class="sz" style="right:47px">4.13 GB</span></div>
<div class="r g" style="top:170px"><svg class="ic" style="left:27.5px;top:0" width="13" height="17"><use href="#zip"/></svg><span class="nm" style="left:48.5px"><span class="j">差分</span>backup-03.zip</span><span class="sz" style="right:47px">3.89 GB</span></div>
<div class="r" style="top:187px"><svg class="ic" style="left:27.5px;top:0" width="13" height="17"><use href="#zip"/></svg><span class="nm" style="left:48.5px"><span class="j">差分</span>backup-04.zip</span><span class="sz" style="right:47px">3.1 GB</span></div>
<div class="r g" style="top:204px"><svg class="ic" style="left:27.5px;top:0" width="13" height="17"><use href="#zip"/></svg><span class="nm" style="left:48.5px"><span class="j">差分</span>backup-05.zip</span><span class="sz" style="right:47px">3.62 GB</span></div>
<div class="r" style="top:221px"><svg class="ic" style="left:27.5px;top:0" width="13" height="17"><use href="#zip"/></svg><span class="nm" style="left:48.5px"><span class="j">差分</span>backup-06.zip</span><span class="sz" style="right:47px">3.87 GB</span></div>
<div class="r g" style="top:238px"><svg class="ic" style="left:27.5px;top:0" width="13" height="17"><use href="#zip"/></svg><span class="nm" style="left:48.5px"><span class="j">差分</span>backup-07.zip</span><span class="sz" style="right:47px">3.53 GB</span></div>
<div class="r" style="top:255px"><svg class="ic" style="left:27.5px;top:0" width="13" height="17"><use href="#zip"/></svg><span class="nm" style="left:48.5px"><span class="j">差分</span>backup-08.zip</span><span class="sz" style="right:47px">3.26 GB</span></div>
<div class="r g" style="top:272px"><svg class="ic" style="left:27.5px;top:0" width="13" height="17"><use href="#zip"/></svg><span class="nm" style="left:48.5px"><span class="j">差分</span>backup-09.zip</span><span class="sz" style="right:47px">3.17 GB</span></div>
<div class="r" style="top:289px"><svg class="ic" style="left:27.5px;top:0" width="13" height="17"><use href="#zip"/></svg><span class="nm" style="left:48.5px"><span class="j">差分</span>backup-10.zip</span><span class="sz" style="right:47px">3.64 GB</span></div>
<div class="r g" style="top:306px"><svg class="ic" style="left:27.5px;top:0" width="13" height="17"><use href="#zip"/></svg><span class="nm" style="left:48.5px"><span class="j">差分</span>backup-11.zip</span><span class="sz" style="right:47px">3.49 GB</span></div>
<div class="r" style="top:323px"><svg class="ic" style="left:27.5px;top:0" width="13" height="17"><use href="#zip"/></svg><span class="nm" style="left:48.5px"><span class="j">差分</span>backup-12.zip</span><span class="sz" style="right:47px">3.53 GB</span></div>
<div class="r g" style="top:340px"><svg class="ic" style="left:27.5px;top:0" width="13" height="17"><use href="#zip"/></svg><span class="nm" style="left:48.5px"><span class="j">差分</span>backup-13.zip</span><span class="sz" style="right:47px">3.59 GB</span></div>
<div class="r" style="top:357px"><svg class="ic" style="left:27.5px;top:0" width="13" height="17"><use href="#zip"/></svg><span class="nm" style="left:48.5px"><span class="j">差分</span>backup-14.zip</span><span class="sz" style="right:47px">3.85 GB</span></div>
<div class="r g" style="top:374px"><svg class="ic" style="left:27.5px;top:0" width="13" height="17"><use href="#zip"/></svg><span class="nm" style="left:48.5px"><span class="j">差分</span>backup-15.zip</span><span class="sz" style="right:47px">4.02 GB</span></div>
<div class="r" style="top:391px"><svg class="ic" style="left:27.5px;top:0" width="13" height="17"><use href="#zip"/></svg><span class="nm" style="left:48.5px"><span class="j">差分</span>backup-16.zip</span><span class="sz" style="right:47px">4.09 GB</span></div>
<div class="r g" style="top:408px"><svg class="ic" style="left:27.5px;top:0" width="13" height="17"><use href="#zip"/></svg><span class="nm" style="left:48.5px"><span class="j">差分</span>backup-17.zip</span><span class="sz" style="right:47px">3.82 GB</span></div>
<div class="r" style="top:425px"><svg class="ic" style="left:27.5px;top:0" width="13" height="17"><use href="#zip"/></svg><span class="nm" style="left:48.5px"><span class="j">差分</span>backup-18.zip</span><span class="sz" style="right:47px">3.64 GB</span></div>
<div class="r g" style="top:442px"><svg class="ic" style="left:27.5px;top:0" width="13" height="17"><use href="#zip"/></svg><span class="nm" style="left:48.5px"><span class="j">差分</span>backup-19.zip</span><span class="sz" style="right:47px">2.73 GB</span></div>
</div>
<div class="tb"><i class="tl" style="left:8px"></i><i class="tl" style="left:28px"></i><i class="tl" style="left:48px"></i><div class="tt"><i class="tfd"></i><span>BackupDVDRAM</span></div></div>
<div class="sl"><span>27 items, 75.26 GB available</span></div>
<div class="hd"><span class="hn">Name</span><i class="ar" style="left:192.6px"></i><i class="dv" style="left:208.5px"></i><span class="hs" style="right:47px">Size</span><i class="dv" style="left:284px"></i></div>
</div>
<div class="win" style="left:1551px;top:556px;width:316px;height:596px">
<div class="rows" style="width:316px;height:528px">
<div class="r g" style="top:0px"><b class="tr" style="left:9px"></b><i class="fd" style="left:26px"></i><span class="nm" style="left:48.5px">0605</span><span class="sz" style="right:14.8px">389.4 MB</span></div>
<div class="r" style="top:17px"><b class="tr" style="left:9px"></b><i class="fd" style="left:26px"></i><span class="nm" style="left:48.5px">20000613</span><span class="sz" style="right:14.8px">145.7 MB</span></div>
<div class="r g" style="top:34px"><b class="tr" style="left:9px"></b><i class="fd" style="left:26px"></i><span class="nm" style="left:48.5px">20010522</span><span class="sz" style="right:14.8px">44.7 MB</span></div>
<div class="r" style="top:51px"><b class="tr" style="left:9px"></b><i class="fd" style="left:26px"></i><span class="nm" style="left:48.5px">20010605</span><span class="sz" style="right:14.8px">80 KB</span></div>
<div class="r g" style="top:68px"><b class="tr" style="left:9px"></b><i class="fd" style="left:26px"></i><span class="nm" style="left:48.5px">backup20050603</span><span class="sz" style="right:14.8px">205.9 MB</span></div>
<div class="r" style="top:85px"><b class="tr" style="left:9px"></b><i class="fd" style="left:26px"></i><span class="nm" style="left:48.5px">FUJIPPY</span><span class="sz" style="right:14.8px">181.5 MB</span></div>
<div class="r g" style="top:102px"><b class="tr" style="left:9px"></b><i class="fd" style="left:26px"></i><span class="nm" style="left:48.5px">Fukatsu-final</span><span class="sz" style="right:14.8px">216.2 MB</span></div>
<div class="r" style="top:119px"><b class="tr" style="left:9px"></b><i class="fd" style="left:26px"></i><span class="nm" style="left:48.5px">meisou-MAX</span><span class="sz" style="right:14.8px">81.7 MB</span></div>
<div class="r g" style="top:136px"><b class="tr" style="left:9px"></b><i class="fd" style="left:26px"></i><span class="nm" style="left:48.5px">MM<span class="j">室</span></span><span class="sz" style="right:14.8px">30.7 MB</span></div>
<div class="r" style="top:153px"><b class="tr" style="left:9px"></b><i class="fd" style="left:26px"></i><span class="nm" style="left:48.5px">MO_backup#42</span><span class="sz" style="right:14.8px">122.1 MB</span></div>
<div class="r g" style="top:170px"><b class="tr" style="left:9px"></b><i class="fd" style="left:26px"></i><span class="nm" style="left:48.5px">MO_backup#43</span><span class="sz" style="right:14.8px">120.9 MB</span></div>
<div class="r" style="top:187px"><b class="tr" style="left:9px"></b><i class="fd" style="left:26px"></i><span class="nm" style="left:48.5px">MO_backup#44</span><span class="sz" style="right:14.8px">118.3 MB</span></div>
<div class="r g" style="top:204px"><b class="tr" style="left:9px"></b><i class="fd" style="left:26px"></i><span class="nm" style="left:48.5px">MO_backup#45</span><span class="sz" style="right:14.8px">118.6 MB</span></div>
<div class="r" style="top:221px"><b class="tr" style="left:9px"></b><i class="fd" style="left:26px"></i><span class="nm" style="left:48.5px">MO_backup#46</span><span class="sz" style="right:14.8px">65 MB</span></div>
<div class="r g" style="top:238px"><b class="tr" style="left:9px"></b><i class="fd" style="left:26px"></i><span class="nm" style="left:48.5px">MO_backup#47</span><span class="sz" style="right:14.8px">113.8 MB</span></div>
<div class="r" style="top:255px"><b class="tr" style="left:9px"></b><i class="fd" style="left:26px"></i><span class="nm" style="left:48.5px">MO_backup#48</span><span class="sz" style="right:14.8px">117.2 MB</span></div>
<div class="r g" style="top:272px"><b class="tr" style="left:9px"></b><i class="fd" style="left:26px"></i><span class="nm" style="left:48.5px">MO_backup#49</span><span class="sz" style="right:14.8px">123.1 MB</span></div>
<div class="r" style="top:289px"><b class="tr" style="left:9px"></b><i class="fd" style="left:26px"></i><span class="nm" style="left:48.5px">MO_backup#50</span><span class="sz" style="right:14.8px">122.7 MB</span></div>
<div class="r g" style="top:306px"><b class="tr" style="left:9px"></b><i class="fd" style="left:26px"></i><span class="nm" style="left:48.5px">MO_backup#51</span><span class="sz" style="right:14.8px">96.2 MB</span></div>
<div class="r" style="top:323px"><b class="tr" style="left:9px"></b><i class="fd" style="left:26px"></i><span class="nm" style="left:48.5px">MO_backup#52</span><span class="sz" style="right:14.8px">117.3 MB</span></div>
<div class="r g" style="top:340px"><b class="tr" style="left:9px"></b><i class="fd" style="left:26px"></i><span class="nm" style="left:48.5px">MO_backup#53</span><span class="sz" style="right:14.8px">102.2 MB</span></div>
<div class="r" style="top:357px"><b class="tr" style="left:9px"></b><i class="fd" style="left:26px"></i><span class="nm" style="left:48.5px">MO_backup#54</span><span class="sz" style="right:14.8px">121.2 MB</span></div>
<div class="r g" style="top:374px"><b class="tr" style="left:9px"></b><i class="fd" style="left:26px"></i><span class="nm" style="left:48.5px">MO_backup#55</span><span class="sz" style="right:14.8px">122.6 MB</span></div>
<div class="r" style="top:391px"><b class="tr" style="left:9px"></b><i class="fd" style="left:26px"></i><span class="nm" style="left:48.5px">MO_backup#57</span><span class="sz" style="right:14.8px">116.4 MB</span></div>
<div class="r g" style="top:408px"><b class="tr" style="left:9px"></b><i class="fd" style="left:26px"></i><span class="nm" style="left:48.5px">MO_backup#58</span><span class="sz" style="right:14.8px">123.2 MB</span></div>
<div class="r" style="top:425px"><b class="tr" style="left:9px"></b><i class="fd" style="left:26px"></i><span class="nm" style="left:48.5px">MO_backup#59</span><span class="sz" style="right:14.8px">125.1 MB</span></div>
<div class="r g" style="top:442px"><b class="tr" style="left:9px"></b><i class="fd" style="left:26px"></i><span class="nm" style="left:48.5px">MO_backup#60</span><span class="sz" style="right:14.8px">124.6 MB</span></div>
<div class="r" style="top:459px"><b class="tr" style="left:9px"></b><i class="fd" style="left:26px"></i><span class="nm" style="left:48.5px">MO_backup#62</span><span class="sz" style="right:14.8px">83.1 MB</span></div>
<div class="r g" style="top:476px"><b class="tr" style="left:9px"></b><i class="fd" style="left:26px"></i><span class="nm" style="left:48.5px">Nikon Software</span><span class="sz" style="right:14.8px">16.2 MB</span></div>
<div class="r" style="top:493px"><b class="tr" style="left:9px"></b><i class="fd" style="left:26px"></i><span class="nm" style="left:48.5px">UH-NHK</span><span class="sz" style="right:14.8px">627.7 MB</span></div>
<div class="r g" style="top:510px"><b class="tr" style="left:9px"></b><i class="fd" style="left:26px"></i><span class="nm" style="left:48.5px"><span class="j">学生データ</span>Backup</span><span class="sz" style="right:14.8px">149.4 MB</span></div>
</div>
<div class="tb"><i class="tl" style="left:8px"></i><i class="tl" style="left:28px"></i><i class="tl" style="left:48px"></i><div class="tt"><i class="tfd"></i><span>backupDVD-027</span></div></div>
<div class="sl"><span>31 items, 75.26 GB available</span></div>
<div class="hd"><span class="hn">Name</span><i class="ar" style="left:220.1px"></i><i class="dv" style="left:236.3px"></i><span class="hs" style="right:14.8px">Size</span></div>
</div>
<div class="dk"></div>
<svg style="position:absolute;left:0;top:0" width="1920" height="1200"><defs><radialGradient id="ffg" cx=".3" cy=".2" r=".9"><stop offset="0" stop-color="#ffd43a"/><stop offset=".5" stop-color="#ff7a1a" stop-opacity=".6"/><stop offset="1" stop-color="#e8304a" stop-opacity=".2"/></radialGradient></defs>
<g transform="translate(31,1162)"><rect x="1.5" y="2" width="27" height="25" rx="1" fill="#e8eef2"/><path d="M1.5 3a1 1 0 0 1 1-1H16c-2 5-3 10-2 16h2.5l.5 9H2.5a1 1 0 0 1-1-1z" fill="#1c8df0"/><path d="M6 20c5 4 13 4 18-1" fill="none" stroke="#1a2a40" stroke-width="1.3"/><circle cx="9" cy="10" r="1" fill="#111"/><circle cx="21" cy="10" r="1" fill="#111"/></g>
<g transform="translate(67,1162)"><path d="M8 8l17-3 3 22-18 2z" fill="#e9e9e9"/><path d="M3 3l6-3 6 3v6l-6 3-6-3z" fill="#222"/><text x="9" y="9.5" font-size="8" fill="#fff" font-family="Liberation Serif" font-weight="bold" text-anchor="middle">J</text><path d="M17 26l9-14" stroke="#3ca13c" stroke-width="2.5"/></g>
<g transform="translate(103,1162)"><path d="M3 4l19-2 4 25-19 2z" fill="#f7f7f2" stroke="#bbb" stroke-width=".6"/><path d="M6 9h14M6 12h14M7 15h14M7 18h14M7 21h14" stroke="#9bb" stroke-width=".5"/><path d="M24 2l3 1-6 24-2-1z" fill="#a0a0a0"/></g>
<g transform="translate(137.5,1162)"><path d="M2 6l20-4 5 22-20 4z" fill="#8bc34a"/><path d="M4 7l17-3 4 19-17 3z" fill="#6cbf3a"/><path d="M7 22l5-8 4 4 5-9" fill="none" stroke="#bfe89a" stroke-width="1"/><path d="M24 1l3 1-5 22-2-1z" fill="#eee"/></g>
<g transform="translate(174,1162)"><circle cx="15" cy="16" r="13" fill="#ff6a1a"/><circle cx="15" cy="16" r="13" fill="url(#ffg)"/><circle cx="15.5" cy="15.5" r="7" fill="#7a2bd0"/><path d="M5 8c3-6 12-8 18-3-4-1-8 0-10 3z" fill="#ffcb2f"/></g>
<g transform="translate(209.5,1162)"><circle cx="15" cy="15" r="13.5" fill="#e8453c"/><path d="M15 15L3.3 8.2A13.5 13.5 0 0 0 8.2 26.7z" fill="#34a853"/><path d="M15 15l-6.8 11.7A13.5 13.5 0 0 0 28.5 15z" fill="#fbbc05"/><path d="M15 15h13.5A13.5 13.5 0 0 0 15 1.5z" fill="#e8453c"/><circle cx="15" cy="15" r="6" fill="#fff"/><circle cx="15" cy="15" r="4.6" fill="#3b78e7"/></g>
<g transform="translate(244.5,1162)"><rect x="1" y="1" width="28" height="28" rx="6" fill="#e52730"/><circle cx="15" cy="15" r="10" fill="#fff"/><path d="M10 10l5 10 5-10" fill="none" stroke="#e52730" stroke-width="3" stroke-linecap="round" stroke-linejoin="round"/></g>
<g transform="translate(280.5,1162)"><circle cx="15" cy="15" r="14" fill="#d8e4ef"/><circle cx="15" cy="15" r="12.5" fill="#1b87ea"/><path d="M21 8l-5 8-2-2z" fill="#ff3b30"/><path d="M9 22l5-8 2 2z" fill="#fff"/></g>
<g transform="translate(315,1162)"><text x="14" y="25" font-size="24" font-family="Liberation Serif" font-weight="bold" fill="#3aa53a" text-anchor="middle">FB</text><path d="M18 4c4-2 8 0 9 3" stroke="#f08a24" stroke-width="3" fill="none"/></g>
<g transform="translate(351,1162)"><rect x="1.5" y="3" width="27" height="23" rx="1" fill="#1a1a1a" stroke="#666" stroke-width=".6"/><path d="M5 8l3 2-3 2M9 13h4" stroke="#ddd" stroke-width="1" fill="none"/></g>
<g transform="translate(386,1162)"><circle cx="15" cy="15" r="14" fill="#3a3c40"/><path d="M9 9h12l-6 14" fill="none" stroke="#eee" stroke-width="2" stroke-dasharray="2 1.5"/></g>
<g transform="translate(422,1162)"><rect x="1" y="1" width="28" height="28" rx="4" fill="#2a2f33"/><circle cx="15" cy="10" r="4" fill="none" stroke="#cfd6da" stroke-width="2"/><circle cx="15" cy="19" r="5.5" fill="none" stroke="#cfd6da" stroke-width="2"/><circle cx="15" cy="19" r="3" fill="#8fc7d8"/></g>
<g transform="translate(457,1162)"><rect x="0" y="10" width="29" height="15" fill="#fff" stroke="#222" stroke-width="1.2"/><text x="3" y="22" font-size="12" font-family="Liberation Mono" font-weight="bold" fill="#000">Pd</text><rect x="1" y="2" width="7" height="6" rx="2" fill="#2fa82f"/><rect x="2" y="25" width="4" height="3" fill="#111"/></g>
<g transform="translate(493,1162)"><path d="M15 2l13 6v14l-13 7-13-7V8z" fill="#8c8c8c"/><path d="M15 2l13 6-13 6-13-6z" fill="#c9c9c9"/><path d="M15 14v15l13-7V8z" fill="#6f6f6f"/><path d="M8 11l7 3 7-3M8 15v5l7 3v-5" fill="none" stroke="#444" stroke-width="1"/></g>
<g transform="translate(528,1162)"><rect x="1" y="1" width="28" height="28" rx="4" fill="#1b2b44"/><path d="M10 23V7h6a4.5 4.5 0 0 1 0 9h-6" fill="none" stroke="#fff" stroke-width="2.4"/><circle cx="18" cy="24" r="1.2" fill="#fff"/><circle cx="22" cy="24" r="1.2" fill="#fff"/></g>
<g transform="translate(564.5,1162)"><rect x="1" y="1" width="28" height="28" rx="4" fill="#1d2a3a"/><path d="M10 24V6h6a5 5 0 0 1 0 10h-6M7 24h7M7 6h3" fill="none" stroke="#fff" stroke-width="2.4"/></g>
<g transform="translate(599.5,1162)"><circle cx="15" cy="15" r="14" fill="#111"/><circle cx="15" cy="15" r="13" fill="none" stroke="#666" stroke-width=".7"/><path d="M10 22V10M10 12c2-3 4-3 4 0M16 9h4l-2 3a3 3 0 1 1-2 5" fill="none" stroke="#eee" stroke-width="1.6"/></g>
<g transform="translate(635,1162)"><circle cx="15" cy="15" r="14.5" fill="#17949c"/><path d="M8 15a3.5 3.5 0 1 1 7 0a3.5 3.5 0 1 0 7 0a3.5 3.5 0 1 0-7 0a3.5 3.5 0 1 1-7 0" fill="none" stroke="#fff" stroke-width="2.2"/></g>
<g transform="translate(670.5,1162)"><path d="M8 2h14l7 7v12l-7 7H8l-7-7V9z" fill="#2a2a2a"/><rect x="9" y="7" width="12" height="8" rx="2" fill="#444"/><circle cx="12" cy="11" r="1.5" fill="#6cf"/><circle cx="18" cy="11" r="1.5" fill="#6cf"/><path d="M8 19h14M10 23h10" stroke="#bbb" stroke-width="1.2" stroke-dasharray="2 2"/></g>
<g transform="translate(706,1162)"><path d="M3 5l17-4 9 20-17 8z" fill="#cfcfcf"/><path d="M3 5l17-4 6 14-17 6z" fill="#222"/><path d="M9 21l17-6 3 6-17 8z" fill="#e8e8e8"/></g>
<g transform="translate(741,1162)"><path d="M15 3v24" stroke="#eee" stroke-width="2"/><path d="M4 14c4-2 18-2 22 0-4 2-18 2-22 0z" fill="#f3f3f3"/><path d="M13 3c-4 4-4 20 0 24M17 3c4 4 4 20 0 24" fill="none" stroke="#ddd" stroke-width="1.5"/><circle cx="20" cy="5" r="3" fill="#222"/><path d="M18 7h4l-2 3z" fill="#f2a900"/><path d="M11 20l8 8M19 20l-8 8" stroke="#c9a45a" stroke-width="1.2"/></g>
<g transform="translate(777,1162)"><path d="M3 8l20-4 5 19-20 5z" fill="#1c7fe0"/><path d="M4 9l18-4 4 17-18 5z" fill="#3c9cf2"/><path d="M8 22l12-12M10 13l6 6" stroke="#bfe0ff" stroke-width=".5"/><path d="M14 12l14-9-2 4-10 7z" fill="#555"/><path d="M17 14l-5 14" stroke="#333" stroke-width="2.5"/></g>
<g transform="translate(813,1162)"><path d="M2 14c3-22 9-14 13 0s10 22 13 0" fill="none" stroke="#111" stroke-width="2.5"/><path d="M3 14c3-18 8-11 12 0z" fill="#e33"/><path d="M6 10c2-6 5-6 7 0v4H6z" fill="#fc0"/><path d="M15 14c4 11 9 18 12 0z" fill="#3a3"/><path d="M18 18c2 6 5 6 7 0v-4h-7z" fill="#36f"/></g>
<g transform="translate(848,1162)"><path d="M16 2l12 26H2z" fill="#2d6cdf"/><path d="M16 2l12 26H14z" fill="#5a3ab8"/><path d="M2 28l12-6 14 6z" fill="#2fb34a"/><path d="M14 22l2-20" stroke="#a33" stroke-width="1"/></g>
<g transform="translate(879,1162)"><rect x="1" y="2" width="14" height="10" fill="#e9e0d0"/><path d="M3 8a5 5 0 0 1 10 0z" fill="#d33"/><rect x="3" y="16" width="14" height="11" fill="#e9e0d0"/><path d="M5 22a5 5 0 0 1 10 0z" fill="#d33"/><path d="M18 6c9-2 12 10 4 15" fill="none" stroke="#333" stroke-width="2"/></g>
<g transform="translate(920,1162)"><path d="M3 5l20-3 4 23-20 4z" fill="#2853c4"/><path d="M5 6l17-2 3 19-17 3z" fill="#3a6ae0"/><path d="M7 22l16-18" stroke="#d9a64a" stroke-width="1.8"/><path d="M8 10h9M8 14h12" stroke="#9bb4f0" stroke-width=".6"/></g>
<g transform="translate(955,1162)"><path d="M4 1h22l-2 6H6z" fill="#444"/><rect x="2" y="7" width="22" height="10" fill="#bfc3c7"/><rect x="4" y="12" width="18" height="2" fill="#4ab0f0"/><rect x="14" y="16" width="14" height="13" fill="#f1f1f1" stroke="#aaa" stroke-width=".6"/><rect x="16" y="19" width="6" height="4" fill="#6a8ec0"/></g>
<g transform="translate(990,1162)"><rect x="2" y="6" width="26" height="20" fill="#f2f2f2" stroke="#bbb" stroke-width=".6"/><path d="M8 2l11 26M22 2l-11 26" stroke="#9a9a9a" stroke-width="1.6"/><circle cx="11" cy="25" r="2.5" fill="none" stroke="#777"/><circle cx="19" cy="25" r="2.5" fill="none" stroke="#777"/></g>
<g transform="translate(1025,1162)"><circle cx="15" cy="15" r="14.5" fill="#c9a23a"/><circle cx="15" cy="15" r="12.5" fill="#333"/><circle cx="15" cy="15" r="9" fill="#777"/><path d="M9 15h12" stroke="#ccc" stroke-width="2"/></g>
<g transform="translate(1061,1162)"><rect x="1.5" y="2" width="27" height="26" rx="1" fill="#222"/><rect x="3" y="10" width="24" height="16" fill="#fafafa"/><path d="M6.5 10v9M10 10v9M15 10v9M18.5 10v9M22 10v9" stroke="#111" stroke-width="2"/><path d="M6 26V10M9 26V10M12 26V10M15 26V10M18 26V10M21 26V10M24 26V10" stroke="#777" stroke-width=".4"/></g>
<g transform="translate(1096,1162)"><circle cx="15" cy="15" r="14" fill="#fff"/><circle cx="15" cy="15" r="13" fill="none" stroke="#d8c4f0" stroke-width="1.2"/><path d="M12 20V9l8-2v11" fill="none" stroke="#e94fa0" stroke-width="2.2"/><circle cx="10.5" cy="20" r="2.2" fill="#c760e8"/><circle cx="18.5" cy="18" r="2.2" fill="#5fa2f8"/></g>
<g transform="translate(1131,1162)"><rect x="1" y="1" width="28" height="28" fill="#b30b0b"/><rect x="1" y="1" width="28" height="14" fill="#d41a1a" fill-opacity=".6"/><path d="M22 7c-6 0-7 4-8 8s-2 8-7 8M10 15h9" fill="none" stroke="#fff" stroke-width="2.6"/></g>
<g transform="translate(1167,1162)"><path d="M27 2l-9 13" stroke="#6b4a2a" stroke-width="2"/><ellipse cx="11" cy="20" rx="9" ry="8" fill="#d9751f"/><ellipse cx="11" cy="20" rx="5" ry="4.5" fill="#7a3a10"/><circle cx="11" cy="20" r="2" fill="#222"/></g>
<g transform="translate(1202,1162)"><path d="M15 2l13 13-13 13L2 15z" fill="#9ec5ea"/><path d="M15 4l11 11-11 11L4 15z" fill="#cfe4f6"/><path d="M7 14l6 6 13-14" fill="none" stroke="#f07a12" stroke-width="3.5"/></g>
<g transform="translate(1238,1162)"><circle cx="15" cy="15" r="14" fill="#2a2a2a"/><circle cx="15" cy="15" r="12" fill="#888"/><rect x="9" y="9" width="12" height="12" rx="2" fill="#222"/><path d="M13 18v-6l5-1v6" fill="none" stroke="#ddd" stroke-width="1.3"/><path d="M4 15a11 11 0 0 1 22 0" fill="none" stroke="#111" stroke-width="2"/></g>
<g transform="translate(1272,1162)"><rect x="2" y="5" width="16" height="14" fill="#1c6fd6"/><rect x="12" y="1" width="17" height="9" fill="#36a84a"/><text x="20" y="9" font-size="7" font-family="Liberation Sans" font-weight="bold" fill="#fff" text-anchor="middle">Free</text><rect x="12" y="12" width="12" height="17" fill="#1450a8"/><rect x="14" y="15" width="8" height="8" fill="#d33"/></g>
<g transform="translate(1309,1162)"><rect x="1" y="1" width="28" height="28" rx="3" fill="#1d3f78"/><path d="M15 5l11 10h-3v10H7V15H4z" fill="#fff"/><text x="15" y="23" font-size="12" font-family="Liberation Serif" font-weight="bold" fill="#1d3f78" text-anchor="middle">G</text></g>
<g transform="translate(1345,1162)"><rect x="3" y="3" width="24" height="18" fill="#f4f4f4" stroke="#bbb" stroke-width=".6"/><rect x="5" y="5" width="20" height="12" fill="#7fb0e0"/><path d="M5 17l6-6 5 4 4-3 5 5z" fill="#d8e8f6"/><circle cx="22" cy="22" r="5" fill="#dfe6ea" stroke="#555" stroke-width="1.4"/><path d="M25.5 25.5l3 3" stroke="#555" stroke-width="2"/></g>
<g transform="translate(1380,1162)"><rect x="1" y="1" width="28" height="28" rx="3" fill="#1c77d8"/><path d="M3 20l6-8 5 6 5-10 4 7 4-5" fill="none" stroke="#fff" stroke-width="1.8"/><path d="M1 22h28v4a3 3 0 0 1-3 3H4a3 3 0 0 1-3-3z" fill="#6fb6f2"/></g>
<g transform="translate(1415.5,1162)"><rect x="1" y="1" width="28" height="28" rx="2" fill="#ee6b5a"/><path d="M1 3h28v12c-4-1-7 2-10 0s-7 1-10 0-5 1-8 0z" fill="#8f76c9"/><path d="M1 20c5-2 9 1 14 0s9-2 14 0v9H1z" fill="#f0806e"/></g>
<g transform="translate(1451,1162)"><rect x="4" y="11" width="25" height="15" fill="#f5eba4"/><text x="17" y="23" font-size="11" font-family="Liberation Sans" font-weight="bold" fill="#333" text-anchor="middle">App</text><path d="M6 2l3-1 1 13-3 1z" fill="#6a58c9"/><path d="M4 24h6" stroke="#222" stroke-width="1.2"/></g>
<g transform="translate(1486.5,1162)"><path d="M15 1l12 6v16l-12 6-12-6V7z" fill="#3a9ee8"/><circle cx="15" cy="15" r="8" fill="#0f2c4c"/><circle cx="15" cy="15" r="5" fill="#2c8ad8"/><circle cx="15" cy="15" r="2" fill="#eaf4ff"/></g>
<g transform="translate(1522.5,1162)"><rect x="2" y="9" width="26" height="19" fill="#1b6fd0"/><path d="M2 4l26-3v7H2z" fill="#111"/><path d="M5 3.5l3 4M11 3l3 4M17 2.5l3 4M23 2l3 4" stroke="#fff" stroke-width="1.6"/><path d="M15 12v9M11 17l4 4 4-4" fill="none" stroke="#fff" stroke-width="2.5"/></g>
<g transform="translate(1557.5,1162)"><circle cx="14" cy="14" r="13" fill="#1d1d1f"/><circle cx="14" cy="14" r="8" fill="none" stroke="#3aa0f0" stroke-width="3.5"/><path d="M19 19l7 7" stroke="#1d1d1f" stroke-width="4"/></g>
<g transform="translate(1594.5,1162)"><circle cx="14" cy="14" r="13" fill="#2f8de6"/><circle cx="14" cy="14" r="8.5" fill="#e8f2fb"/><path d="M19 19l7 7" stroke="#2f8de6" stroke-width="4"/><path d="M13 11l5 3-5 3z" fill="#2f8de6"/></g>
<g transform="translate(1629,1162)"><path d="M12 3h6l7 20H5z" fill="#f28a0c"/><path d="M10 10h10l1.5 4H8.5zM7.5 17h15l1.2 3H6.3z" fill="#fff"/><rect x="2" y="22" width="26" height="6" rx="1" fill="#ec7a04"/></g>
<g transform="translate(1665,1162)"><rect x="3" y="3" width="24" height="14" fill="#fff" stroke="#3a85d8" stroke-width="1.6"/><rect x="6" y="6" width="10" height="8" fill="#ec8a2a"/><path d="M15 17v10M10 28h10" stroke="#777" stroke-width="2"/><path d="M2 17h26" stroke="#2a6fc0" stroke-width="2.4"/></g>
<g transform="translate(1700,1162)"><path d="M3 4l20-3 4 24-20 4z" fill="#fafafa" stroke="#ccc" stroke-width=".6"/><rect x="6" y="7" width="12" height="9" fill="#ec8f2c"/><path d="M7 19h12M7 22h12" stroke="#bbb" stroke-width=".8"/><path d="M24 2l3 1-8 24-2-1z" fill="#f2a72e"/></g>
<g transform="translate(1736,1162)"><rect x="1" y="1" width="28" height="28" rx="6" fill="#8a8e92"/><circle cx="15" cy="15" r="11" fill="#3c4044"/><circle cx="15" cy="15" r="8" fill="none" stroke="#cfd3d6" stroke-width="2.4" stroke-dasharray="2 1.5"/><circle cx="15" cy="15" r="2.5" fill="#cfd3d6"/><path d="M15 15V8M15 15l6 4M15 15l-6 4" stroke="#cfd3d6" stroke-width="1.5"/></g>
<g transform="translate(1787,1162)"><rect x="0" y="5" width="30" height="21" fill="#f2f7f8" stroke="#999" stroke-width=".6"/><rect x="13" y="9" width="10" height="10" fill="#553322"/><circle cx="25" cy="23" r="5" fill="#ff6b1a"/><circle cx="25" cy="23" r="2.5" fill="#6a2cc0"/></g>
<g transform="translate(1822.5,1162)"><rect x="2" y="2" width="27" height="27" fill="#fbfbfb" stroke="#aaa" stroke-width=".6"/><path d="M5 7h18M5 10h20M5 13h16M5 16h20M5 19h12M5 22h18" stroke="#777" stroke-width=".7"/><circle cx="22" cy="22" r="3" fill="#222"/><path d="M24 25l4-5" stroke="#4caf50" stroke-width="1.2"/></g>
<g transform="translate(1858,1162)"><path d="M4 4h22l-2 25H6z" fill="#dfe3e6" stroke="#b9c0c4" stroke-width=".8"/><path d="M8 7l1.5 20M13 7l.5 20M17 7l-.5 20M22 7l-1.5 20" stroke="#aab3b8" stroke-width=".8"/><ellipse cx="15" cy="5" rx="11" ry="2.5" fill="#cfd5d9"/><path d="M8 4c3-3 11-3 14 0" fill="#9aa2a8"/></g>
<path d="M1777.5 1163v28" stroke="#9a4a3a" stroke-width="1"/>
<circle cx="46" cy="1195.5" r="2" fill="#4a0808"/>
<circle cx="82" cy="1195.5" r="2" fill="#4a0808"/>
<circle cx="189" cy="1195.5" r="2" fill="#4a0808"/>
<circle cx="897" cy="1195.5" r="2" fill="#4a0808"/>
<circle cx="1146" cy="1195.5" r="2" fill="#4a0808"/>
<circle cx="1394" cy="1195.5" r="2" fill="#4a0808"/>
<circle cx="1430" cy="1195.5" r="2" fill="#4a0808"/>
<circle cx="1607" cy="1195.5" r="2" fill="#4a0808"/>
</svg>
</body></html>
